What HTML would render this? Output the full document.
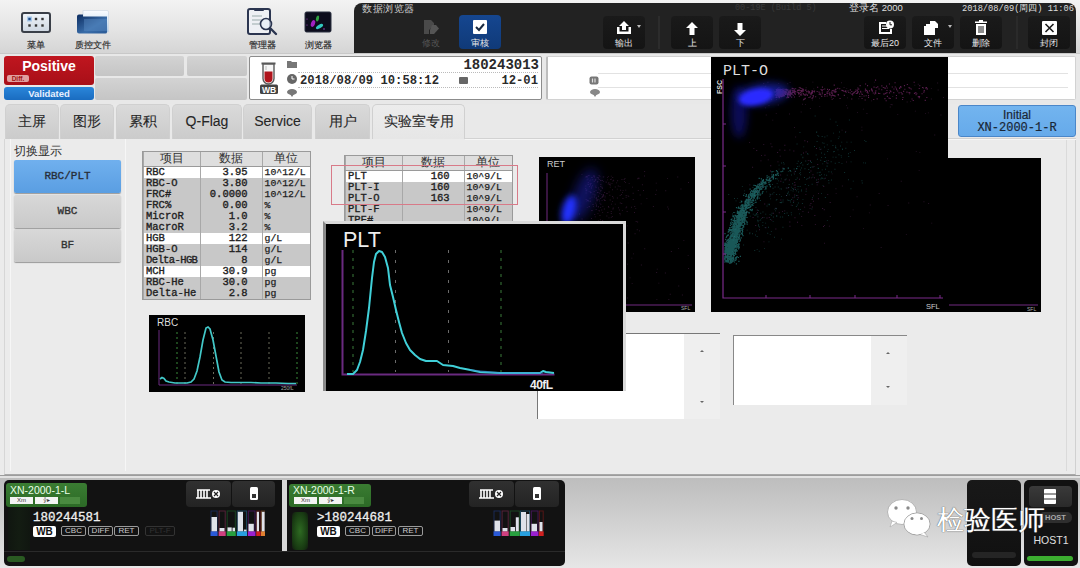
<!DOCTYPE html>
<html><head><meta charset="utf-8">
<style>
*{margin:0;padding:0;box-sizing:border-box}
html,body{width:1080px;height:568px;overflow:hidden;background:#e9e9e9;font-family:"Liberation Sans",sans-serif;position:relative}
.a{position:absolute}
svg{position:absolute;display:block}
.mono{font-family:"Liberation Mono",monospace}
#tb{left:0;top:0;width:1080px;height:54px;background:linear-gradient(#f3f3f3,#e4e4e4 55%,#d5d5d5);border-bottom:1px solid #c8c8c8}
.lbl{font-size:9px;font-weight:normal;-webkit-text-stroke:.2px #333;color:#333;text-align:center;white-space:nowrap}
#dark{left:354px;top:3px;width:722px;height:50px;background:#222;border-radius:8px 8px 0 0}
.dbtn{position:absolute;top:13px;height:33px;width:42px;border-radius:4px;background:linear-gradient(#1a1a1a,#141414)}
.dlbl{position:absolute;left:0;right:0;top:21px;text-align:center;font-size:9px;color:#e6e6e6;white-space:nowrap}
#r2{left:0;top:54px;width:1080px;height:50px;background:#e8e8e8}
.cell{background:linear-gradient(#d3d3d3,#c5c5c5);border-radius:2px}
.tab{position:absolute;top:104px;height:35px;background:linear-gradient(#dadada,#cbcbcb);border-radius:5px 5px 0 0;font-size:13.5px;font-weight:normal;color:#262626;text-align:center;line-height:33px;-webkit-text-stroke:.1px #262626;border:1px solid #d0d0d0;border-bottom:none}
.sw{position:absolute;left:14px;width:107px;height:33px;background:linear-gradient(#d8d8d8,#c9c9c9);border-radius:2px;font-family:"Liberation Mono",monospace;font-size:11px;font-weight:normal;-webkit-text-stroke:.35px #333;color:#333;text-align:center;line-height:33px;box-shadow:0 1px 1px #999}
table.t{position:absolute;border-collapse:collapse;font-family:"Liberation Mono",monospace;font-size:10.5px;color:#222;background:#c8c8c8;outline:1px solid #9a9a9a}
table.t td{height:11px;line-height:11px;padding:0 2px;white-space:nowrap;border-left:1px solid #a8a8a8;font-weight:normal;color:#222;-webkit-text-stroke:.35px #222}
table.t tr.h td{height:14px;-webkit-text-stroke:0;background:#dedede;text-align:center;font-family:"Liberation Sans",sans-serif;font-size:11.5px;font-weight:normal;color:#333;border-bottom:1px solid #9a9a9a}
table.t tr.w td{background:#fff}
table.t td.r{text-align:right;padding-right:14px}
table.t tr:not(.h) td:nth-child(3){font-size:9.8px;-webkit-text-stroke:.25px #222}
.card{position:absolute;top:480px;height:86px;background:#121212;border-radius:5px}
.glbl{position:absolute;background:linear-gradient(#3a7c32,#2c6a26);border-radius:3px}
.tg{position:absolute;height:10px;border:1px solid #9a9a9a;border-radius:2px;font-size:8px;color:#ccc;line-height:8px;text-align:center}
.wb{position:absolute;height:11px;background:#fff;border-radius:2px;font-size:10px;font-weight:bold;color:#111;line-height:11px;text-align:center}
.ibtn{position:absolute;top:481px;height:26px;background:linear-gradient(#303030,#232323);border-radius:4px}
</style></head><body>
<div class="a" id="tb"></div>

<!-- menu icon -->
<div class="a" style="left:21px;top:12px;width:30px;height:21px;border:2px solid #3a3f48;border-radius:3px;background:linear-gradient(#eef3f8,#cfd8e2)"></div>
<svg style="left:21px;top:12px" width="30" height="21" viewBox="0 0 30 21">
<rect x="6" y="4.5" width="5" height="5" fill="#a8c8e8"/><rect x="7.3" y="5.8" width="2.4" height="2.4" fill="#1a4a8a"/>
<rect x="13.8" y="5.8" width="2.4" height="2.4" fill="#333"/><rect x="20.3" y="5.8" width="2.4" height="2.4" fill="#333"/>
<rect x="7.3" y="12.3" width="2.4" height="2.4" fill="#333"/><rect x="13.8" y="12.3" width="2.4" height="2.4" fill="#333"/><rect x="20.3" y="12.3" width="2.4" height="2.4" fill="#333"/>
</svg>
<!-- folder icon -->
<svg style="left:76px;top:9px" width="34" height="26" viewBox="0 0 34 26">
<defs><linearGradient id="fp" x1="0" y1="0" x2="0" y2="1"><stop offset="0" stop-color="#fafcff"/><stop offset=".5" stop-color="#d8e8f6"/><stop offset="1" stop-color="#a8c8e8"/></linearGradient>
<linearGradient id="fb" x1="0" y1="0" x2="1" y2="1"><stop offset="0" stop-color="#0c2c60"/><stop offset=".6" stop-color="#3a6eaa"/><stop offset="1" stop-color="#2a5a96"/></linearGradient></defs>
<path d="M7 1.5h24a1.5 1.5 0 0 1 1.5 1.5v20H7z" fill="url(#fp)" stroke="#c8d4e0" stroke-width=".6"/>
<path d="M1 7.5a2 2 0 0 1 2-2h4v2h24v15.5a1.5 1.5 0 0 1-1.5 1.5H3a2 2 0 0 1-2-2z" fill="url(#fb)"/>
<path d="M8 10h23v12H8z" fill="#5a8cc4" opacity=".45"/>
</svg>
<!-- manager icon -->
<svg style="left:246px;top:7px" width="34" height="30" viewBox="0 0 34 30">
<rect x="2" y="2" width="22" height="25" rx="2" fill="#eef0f4" stroke="#2b3550" stroke-width="2"/>
<rect x="8" y="1" width="10" height="3" rx="1" fill="#2b3550"/>
<path d="M6 9h10M6 13h9M6 17h8" stroke="#9aa" stroke-width="1"/>
<circle cx="20" cy="17" r="5.5" fill="#e8f0f8" fill-opacity=".7" stroke="#2b3550" stroke-width="1.6"/>
<path d="M24 21l6 6" stroke="#2b3550" stroke-width="2.4" stroke-linecap="round"/>
</svg>
<!-- browser icon -->
<svg style="left:304px;top:11px" width="28" height="22" viewBox="0 0 28 22">
<defs><filter id="bi"><feGaussianBlur stdDeviation=".7"/></filter></defs>
<rect x="1" y="1" width="26" height="20" rx="1.5" fill="#0c0c1c" stroke="#2a3040" stroke-width="1"/>
<g filter="url(#bi)">
<ellipse cx="9" cy="12.5" rx="2" ry="3.5" fill="#a020c0" transform="rotate(20 9 12.5)"/>
<ellipse cx="13.5" cy="7.5" rx="1.5" ry="3" fill="#30a040" transform="rotate(15 13.5 7.5)"/>
<ellipse cx="15.5" cy="15.5" rx="4" ry="1.8" fill="#30c8c0" transform="rotate(-30 15.5 15.5)"/>
<circle cx="3" cy="8" r=".6" fill="#a040c0"/><circle cx="3" cy="14" r=".6" fill="#a040c0"/><circle cx="20" cy="18" r=".8" fill="#a040c0"/>
</g>
</svg>
<div class="a lbl" style="left:21px;top:39px;width:30px">菜单</div>
<div class="a lbl" style="left:70px;top:39px;width:45px">质控文件</div>
<div class="a lbl" style="left:245px;top:39px;width:34px">管理器</div>
<div class="a lbl" style="left:301px;top:39px;width:34px">浏览器</div>

<div class="a" id="dark">
  <div class="a" style="left:8px;top:-1px;font-size:10px;color:#c8c8c8;letter-spacing:.5px">数据浏览器</div>
  <!-- 修改 -->
  <svg style="left:69px;top:16px" width="18" height="16" viewBox="0 0 18 16"><path d="M1 1h7l3 3v2L6 11v4H1z" fill="#4a4a4a"/><path d="M9 6l4 0 3 3.5-5 5.5H7v-4z" fill="#555"/></svg>
  <div class="a" style="left:60px;top:34px;width:34px;text-align:center;font-size:9px;color:#555">修改</div>
  <div class="dbtn" style="left:105px;top:12px;height:34px;background:linear-gradient(#154690,#103a78)">
    <div class="a" style="left:14px;top:5px;width:14px;height:14px;background:#fff;border-radius:1px"></div>
    <svg style="left:14px;top:5px" width="14" height="14" viewBox="0 0 14 14"><path d="M3 7l3 3 5-6" stroke="#1a2a40" stroke-width="2" fill="none"/></svg>
    <div class="dlbl" style="top:22px">审核</div>
  </div>
  <!-- 输出 -->
  <div class="dbtn" style="left:249px">
    <svg style="left:13px;top:5px" width="16" height="14" viewBox="0 0 16 14"><path d="M1 6v7h14V6h-2.5v4.5h-9V6z" fill="#fff"/><path d="M8 0l5 5h-3v4H6V5H3z" fill="#fff"/></svg>
    <div class="a" style="left:34px;top:9px;width:0;height:0;border-left:2.5px solid transparent;border-right:2.5px solid transparent;border-top:3px solid #bbb"></div>
    <div class="dlbl">输出</div>
  </div>
  <div class="a" style="left:304px;top:13px;width:2px;height:33px;background:#2c2c2c"></div>
  <!-- 上 -->
  <div class="dbtn" style="left:317px">
    <svg style="left:14px;top:6px" width="14" height="14" viewBox="0 0 14 14"><path d="M7 0l6 6H9.5v7h-5V6H1z" fill="#fff"/></svg>
    <div class="dlbl">上</div>
  </div>
  <!-- 下 -->
  <div class="dbtn" style="left:365px">
    <svg style="left:14px;top:6px" width="14" height="14" viewBox="0 0 14 14"><path d="M7 14l6-6H9.5V1h-5v7H1z" fill="#fff"/></svg>
    <div class="dlbl">下</div>
  </div>
  <div class="a mono" style="left:381px;top:0px;font-size:8.5px;color:#3a3a3a;white-space:nowrap">00-19E (Build 5)</div>
  <div class="a" style="left:495px;top:-1px;font-size:9.5px;color:#ddd;white-space:nowrap">登录名 2000</div>
  <div class="a mono" style="left:608px;top:0px;font-size:8.7px;color:#ddd;white-space:nowrap">2018/08/09(周四) 11:06</div>
  <!-- 最后20 -->
  <div class="dbtn" style="left:510px">
    <svg style="left:14px;top:4px" width="16" height="16" viewBox="0 0 16 16"><path d="M1 2h7v2H3v8h9v-3h2v5H1z" fill="#fff"/><path d="M4 6h5M4 8.5h7" stroke="#fff" stroke-width="1.2"/><circle cx="12" cy="4.5" r="4" fill="#fff"/><path d="M12 2v2.8h2" stroke="#1a1a1a" stroke-width="1" fill="none"/></svg>
    <div class="dlbl">最后20</div>
  </div>
  <!-- 文件 -->
  <div class="dbtn" style="left:558px">
    <svg style="left:11px;top:4px" width="18" height="16" viewBox="0 0 18 16"><path d="M7 1h5l3 3v4H7z" fill="#fff"/><path d="M1 6h11v9H1z" fill="#fff"/><path d="M3 4h4v2H3z" fill="#fff"/></svg>
    <div class="a" style="left:36px;top:9px;width:0;height:0;border-left:2.5px solid transparent;border-right:2.5px solid transparent;border-top:3px solid #bbb"></div>
    <div class="dlbl">文件</div>
  </div>
  <!-- 删除 -->
  <div class="dbtn" style="left:606px">
    <svg style="left:15px;top:4px" width="12" height="15" viewBox="0 0 12 15"><path d="M4 0h4v1.5h4V3H0V1.5h4z" fill="#fff"/><path d="M1 4h10v11H1z" fill="#fff"/><path d="M4 6v7M6 6v7M8 6v7" stroke="#1a1a1a" stroke-width="1"/></svg>
    <div class="dlbl">删除</div>
  </div>
  <div class="a" style="left:662px;top:13px;width:2px;height:33px;background:#2a2a2a"></div>
  <!-- 封闭 -->
  <div class="dbtn" style="left:674px">
    <div class="a" style="left:14px;top:5px;width:15px;height:14px;background:#fff;border-radius:1px"></div>
    <svg style="left:14px;top:5px" width="15" height="14" viewBox="0 0 15 14"><path d="M3.5 3l8 8M11.5 3l-8 8" stroke="#1a1a1a" stroke-width="1.6"/></svg>
    <div class="dlbl">封闭</div>
  </div>
</div>

<div class="a" id="r2"></div>
<div class="a" style="left:4px;top:56px;width:90px;height:29px;background:linear-gradient(#c0161f,#a80f18);border-radius:3px"></div>
<div class="a" style="left:4px;top:58px;width:90px;text-align:center;font-size:14px;font-weight:bold;color:#fff">Positive</div>
<div class="a" style="left:7px;top:74.5px;width:22px;height:7.5px;background:#e0a0a0;border-radius:2px;font-size:6.5px;color:#a01010;text-align:center;line-height:8px;font-weight:bold">Diff.</div>
<div class="a" style="left:4px;top:87px;width:90px;height:13px;background:linear-gradient(#2a86da,#1a6cc0);border-radius:3px;font-size:9.5px;font-weight:bold;color:#e8f0ff;text-align:center;line-height:13px">Validated</div>
<div class="a cell" style="left:95px;top:56px;width:89px;height:20px"></div>
<div class="a cell" style="left:187px;top:56px;width:60px;height:20px"></div>
<div class="a cell" style="left:95px;top:78px;width:152px;height:22px"></div>

<!-- sample box -->
<div class="a" style="left:249px;top:56px;width:293px;height:44px;background:#fff;border:1px solid #8c8c8c;border-radius:2px"></div>
<svg style="left:258px;top:61px" width="24" height="36" viewBox="0 0 24 36">
<rect x="3.5" y="1.5" width="14" height="2" fill="#555"/>
<path d="M5 3h11v14.5a5.5 5.5 0 0 1-11 0z" fill="#f6f6f6" stroke="#5a5a5a" stroke-width="1.4"/>
<path d="M6.5 10.5h8v7a4 4 0 0 1-8 0z" fill="#b0141c"/>
<path d="M7.5 5h1v4h-1z" fill="#bbb"/>
<rect x="2" y="23.5" width="18" height="9.5" rx="1.5" fill="#444"/>
<text x="11" y="31.5" text-anchor="middle" font-family="Liberation Sans" font-weight="bold" font-size="8.5" fill="#fff">WB</text>
</svg>
<svg style="left:286px;top:58px" width="12" height="40" viewBox="0 0 12 40">
<path d="M1 3h4l1 1h5v6H1z" fill="#777"/>
<circle cx="6" cy="21" r="5" fill="#666"/><path d="M6 18v3h2.5" stroke="#fff" stroke-width="1" fill="none"/>
<ellipse cx="6" cy="34" rx="5" ry="3" fill="#777"/><path d="M4 36l2 3 2-3z" fill="#777"/>
</svg>
<div class="a" style="left:298px;top:72px;width:240px;border-top:1px dotted #bbb"></div>
<div class="a" style="left:298px;top:87px;width:240px;border-top:1px dotted #bbb"></div>
<div class="a mono" style="left:455px;top:57px;width:84px;text-align:right;font-size:14px;font-weight:bold;color:#2a2a2a">180243013</div>
<div class="a mono" style="left:300px;top:74px;font-size:12.2px;font-weight:bold;color:#2a2a2a">2018/08/09 10:58:12</div>
<div class="a" style="left:459px;top:77px;width:9px;height:7px;background:#666;border-radius:1px"></div>
<div class="a mono" style="left:480px;top:74px;width:58px;text-align:right;font-size:12.2px;font-weight:bold;color:#2a2a2a">12-01</div>

<!-- right info box -->
<div class="a" style="left:546px;top:56px;width:530px;height:44px;background:#fff;border:1px solid #d2d2d2;border-left:2px solid #bdbdbd;border-radius:2px"></div>
<div class="a" style="left:598px;top:73px;width:470px;border-top:1px solid #e2e2e2"></div>
<div class="a" style="left:598px;top:87px;width:470px;border-top:1px solid #e2e2e2"></div>
<svg style="left:589px;top:76px" width="10" height="9" viewBox="0 0 10 9"><rect x=".5" y=".5" width="9" height="8" rx="2" fill="#777"/><path d="M3.5 2.5v4M6 2.5v4" stroke="#ddd" stroke-width="1.2"/></svg>
<svg style="left:589px;top:88px" width="12" height="10" viewBox="0 0 12 10"><ellipse cx="6" cy="4" rx="5" ry="3" fill="#888"/><path d="M4 6l2 3 2-3z" fill="#888"/></svg>

<!-- tabs -->
<div class="tab" style="left:5px;width:54px">主屏</div>
<div class="tab" style="left:60px;width:54px">图形</div>
<div class="tab" style="left:116px;width:54px">累积</div>
<div class="tab" style="left:172px;width:70px;font-size:14px">Q-Flag</div>
<div class="tab" style="left:243px;width:69px;font-size:14px">Service</div>
<div class="tab" style="left:315px;width:55px">用户</div>
<div class="tab" style="left:372px;width:93px;background:linear-gradient(#ececec,#e6e6e6)">实验室专用</div>

<!-- content -->
<div class="a" style="left:0;top:139px;width:1080px;height:336px;background:#ebebeb"></div>
<div class="a" style="left:4px;top:139px;width:1072px;height:336px;border-left:1px solid #d6d6d6;border-right:1px solid #d0d0d0;border-bottom:1px solid #a8a8a8"></div>
<div class="a" style="left:10px;top:139px;width:116px;height:332px;border-left:1px solid #f6f6f6;border-right:1px solid #f6f6f6"></div>
<div class="a" style="left:465px;top:138px;width:611px;height:1px;background:#d2d2d2"></div>
<div class="a" style="left:1066px;top:139px;width:1px;height:332px;background:#dadada"></div>
<div class="a" style="left:465px;top:139px;width:611px;height:1px;background:#f6f6f6"></div>
<div class="a" style="left:14px;top:144px;font-size:11.5px;color:#333">切换显示</div>
<div class="sw" style="top:160px;background:linear-gradient(#70b0ee,#5a9ee2);color:#1a2a44">RBC/PLT</div>
<div class="sw" style="top:195px">WBC</div>
<div class="sw" style="top:229px">BF</div>

<!-- initial button -->
<div class="a" style="left:958px;top:105px;width:118px;height:32px;background:linear-gradient(#72b4ef,#66aaea);border:1px solid #4a86c8;border-radius:3px;text-align:center;color:#1a2636">
<div style="font-size:12px;line-height:14px;margin-top:2px;-webkit-text-stroke:.2px #1a2a3a">Initial</div>
<div class="mono" style="font-size:12px;line-height:13px;-webkit-text-stroke:.2px #1a2a3a">XN-2000-1-R</div>
</div>

<!-- RBC table -->
<table class="t" style="left:143px;top:152px;width:167px">
<colgroup><col style="width:57px"><col style="width:62px"><col style="width:48px"></colgroup>
<tr class="h"><td>项目</td><td>数据</td><td>单位</td></tr>
<tr class="w"><td>RBC</td><td class="r">3.95</td><td>10^12/L</td></tr>
<tr><td>RBC-O</td><td class="r">3.80</td><td>10^12/L</td></tr>
<tr><td>FRC#</td><td class="r">0.0000</td><td>10^12/L</td></tr>
<tr><td>FRC%</td><td class="r">0.00</td><td>%</td></tr>
<tr><td>MicroR</td><td class="r">1.0</td><td>%</td></tr>
<tr><td>MacroR</td><td class="r">3.2</td><td>%</td></tr>
<tr class="w"><td>HGB</td><td class="r">122</td><td>g/L</td></tr>
<tr><td>HGB-O</td><td class="r">114</td><td>g/L</td></tr>
<tr><td style="letter-spacing:-.6px">Delta-HGB</td><td class="r">8</td><td>g/L</td></tr>
<tr class="w"><td>MCH</td><td class="r">30.9</td><td>pg</td></tr>
<tr><td>RBC-He</td><td class="r">30.0</td><td>pg</td></tr>
<tr><td>Delta-He</td><td class="r">2.8</td><td>pg</td></tr>
</table>

<!-- PLT table -->
<div class="a" style="left:344px;top:155px;width:169px;height:68px;overflow:hidden">
<table class="t" style="left:1px;top:1px;width:167px">
<colgroup><col style="width:57px"><col style="width:62px"><col style="width:48px"></colgroup>
<tr class="h"><td>项目</td><td>数据</td><td>单位</td></tr>
<tr class="w"><td>PLT</td><td class="r">160</td><td>10^9/L</td></tr>
<tr><td>PLT-I</td><td class="r">160</td><td>10^9/L</td></tr>
<tr><td>PLT-O</td><td class="r">163</td><td>10^9/L</td></tr>
<tr><td>PLT-F</td><td class="r"></td><td>10^9/L</td></tr>
<tr><td>TPF#</td><td class="r"></td><td>10^9/L</td></tr>
</table>
</div>
<div class="a" style="left:331px;top:165px;width:187px;height:40px;border:1px solid #d87a88"></div>

<!-- RET scatter -->
<div class="a" style="left:539px;top:157px;width:156px;height:155px;background:#000"></div>
<svg style="left:539px;top:157px" width="156" height="155" viewBox="0 0 156 155">
<defs><filter id="b1" x="-1" y="-1" width="3" height="3"><feGaussianBlur stdDeviation="3"/></filter><filter id="b2" x="-1" y="-1" width="3" height="3"><feGaussianBlur stdDeviation="6"/></filter></defs>
<path d="M57.6 43.3h0.9v0.9h-0.9zM75.8 29.6h0.9v0.9h-0.9zM77.8 31.7h0.9v0.9h-0.9zM47.4 32.5h0.9v0.9h-0.9zM87.8 68.4h0.9v0.9h-0.9zM46.7 33.3h0.9v0.9h-0.9zM55.8 23.0h0.9v0.9h-0.9zM67.4 58.5h0.9v0.9h-0.9zM67.9 36.2h0.9v0.9h-0.9zM56.2 71.3h0.9v0.9h-0.9zM51.8 67.4h0.9v0.9h-0.9zM47.6 20.2h0.9v0.9h-0.9zM81.9 37.0h0.9v0.9h-0.9zM73.5 51.5h0.9v0.9h-0.9zM59.9 43.6h0.9v0.9h-0.9zM82.9 65.8h0.9v0.9h-0.9zM61.4 46.8h0.9v0.9h-0.9zM86.7 38.1h0.9v0.9h-0.9zM86.3 32.7h0.9v0.9h-0.9zM51.1 43.8h0.9v0.9h-0.9zM93.7 35.8h0.9v0.9h-0.9zM60.5 58.1h0.9v0.9h-0.9zM56.9 40.2h0.9v0.9h-0.9zM61.5 33.0h0.9v0.9h-0.9zM73.2 39.1h0.9v0.9h-0.9zM60.4 96.4h0.9v0.9h-0.9zM57.1 48.8h0.9v0.9h-0.9zM69.6 34.5h0.9v0.9h-0.9zM53.9 49.2h0.9v0.9h-0.9zM68.0 73.8h0.9v0.9h-0.9zM85.1 24.2h0.9v0.9h-0.9zM70.4 37.8h0.9v0.9h-0.9zM61.4 27.0h0.9v0.9h-0.9zM53.6 36.7h0.9v0.9h-0.9zM51.3 82.7h0.9v0.9h-0.9zM98.8 20.8h0.9v0.9h-0.9zM53.5 47.2h0.9v0.9h-0.9zM51.4 22.4h0.9v0.9h-0.9zM74.2 22.8h0.9v0.9h-0.9zM56.4 21.8h0.9v0.9h-0.9zM52.4 29.2h0.9v0.9h-0.9zM63.2 55.2h0.9v0.9h-0.9zM92.1 49.8h0.9v0.9h-0.9zM102.9 27.3h0.9v0.9h-0.9zM68.4 55.1h0.9v0.9h-0.9zM73.8 40.6h0.9v0.9h-0.9zM73.3 20.1h0.9v0.9h-0.9zM84.7 22.0h0.9v0.9h-0.9zM53.6 47.0h0.9v0.9h-0.9zM64.4 19.4h0.9v0.9h-0.9zM62.5 29.8h0.9v0.9h-0.9zM66.6 24.5h0.9v0.9h-0.9zM49.1 26.9h0.9v0.9h-0.9zM54.5 19.0h0.9v0.9h-0.9zM46.9 66.9h0.9v0.9h-0.9zM52.3 53.1h0.9v0.9h-0.9zM77.2 25.4h0.9v0.9h-0.9zM80.1 82.6h0.9v0.9h-0.9zM57.1 47.5h0.9v0.9h-0.9zM63.8 37.0h0.9v0.9h-0.9zM47.4 43.7h0.9v0.9h-0.9zM70.8 29.7h0.9v0.9h-0.9zM59.2 30.6h0.9v0.9h-0.9zM57.5 68.6h0.9v0.9h-0.9zM82.5 22.1h0.9v0.9h-0.9zM50.1 29.1h0.9v0.9h-0.9zM71.8 60.2h0.9v0.9h-0.9zM69.1 49.0h0.9v0.9h-0.9zM48.6 21.5h0.9v0.9h-0.9zM57.1 85.6h0.9v0.9h-0.9zM64.2 24.2h0.9v0.9h-0.9zM57.4 42.3h0.9v0.9h-0.9zM66.8 24.8h0.9v0.9h-0.9zM89.3 38.9h0.9v0.9h-0.9zM63.8 19.6h0.9v0.9h-0.9zM86.1 24.9h0.9v0.9h-0.9zM55.8 22.3h0.9v0.9h-0.9zM56.6 32.9h0.9v0.9h-0.9zM59.6 32.3h0.9v0.9h-0.9zM58.0 87.3h0.9v0.9h-0.9zM60.7 86.7h0.9v0.9h-0.9zM48.5 26.8h0.9v0.9h-0.9zM50.4 23.4h0.9v0.9h-0.9zM63.0 22.9h0.9v0.9h-0.9zM72.5 25.9h0.9v0.9h-0.9zM95.3 49.1h0.9v0.9h-0.9zM80.3 55.9h0.9v0.9h-0.9zM69.5 60.4h0.9v0.9h-0.9zM80.6 56.2h0.9v0.9h-0.9zM65.1 43.1h0.9v0.9h-0.9zM63.3 39.7h0.9v0.9h-0.9zM52.4 82.7h0.9v0.9h-0.9zM66.2 77.5h0.9v0.9h-0.9zM56.6 30.0h0.9v0.9h-0.9zM67.7 83.9h0.9v0.9h-0.9zM82.9 53.2h0.9v0.9h-0.9zM61.2 23.1h0.9v0.9h-0.9zM98.2 64.5h0.9v0.9h-0.9zM50.8 35.3h0.9v0.9h-0.9zM54.5 18.1h0.9v0.9h-0.9zM98.8 33.0h0.9v0.9h-0.9zM47.9 42.8h0.9v0.9h-0.9zM78.8 28.6h0.9v0.9h-0.9zM46.7 42.1h0.9v0.9h-0.9zM47.0 19.0h0.9v0.9h-0.9zM59.4 34.9h0.9v0.9h-0.9zM65.8 38.7h0.9v0.9h-0.9zM51.6 26.0h0.9v0.9h-0.9zM63.2 63.0h0.9v0.9h-0.9zM79.0 50.3h0.9v0.9h-0.9zM55.7 75.3h0.9v0.9h-0.9zM62.6 42.9h0.9v0.9h-0.9zM51.9 31.2h0.9v0.9h-0.9zM52.5 39.7h0.9v0.9h-0.9zM63.4 49.2h0.9v0.9h-0.9zM93.8 42.1h0.9v0.9h-0.9zM63.1 30.8h0.9v0.9h-0.9zM53.3 22.3h0.9v0.9h-0.9zM71.9 21.7h0.9v0.9h-0.9zM64.6 42.0h0.9v0.9h-0.9zM62.2 37.2h0.9v0.9h-0.9zM116.8 25.7h0.9v0.9h-0.9zM62.1 72.7h0.9v0.9h-0.9zM58.8 49.6h0.9v0.9h-0.9zM86.7 39.8h0.9v0.9h-0.9zM80.8 57.4h0.9v0.9h-0.9zM67.1 35.9h0.9v0.9h-0.9zM54.9 39.6h0.9v0.9h-0.9zM63.1 38.8h0.9v0.9h-0.9zM72.0 46.7h0.9v0.9h-0.9zM68.9 81.4h0.9v0.9h-0.9zM98.3 21.3h0.9v0.9h-0.9zM68.2 22.4h0.9v0.9h-0.9zM71.8 18.7h0.9v0.9h-0.9zM55.3 57.0h0.9v0.9h-0.9zM65.9 43.2h0.9v0.9h-0.9zM73.1 32.3h0.9v0.9h-0.9zM58.7 70.5h0.9v0.9h-0.9zM51.8 35.2h0.9v0.9h-0.9zM70.7 42.6h0.9v0.9h-0.9zM46.4 28.5h0.9v0.9h-0.9zM59.1 49.2h0.9v0.9h-0.9zM65.3 78.9h0.9v0.9h-0.9zM48.9 70.8h0.9v0.9h-0.9zM69.4 50.2h0.9v0.9h-0.9zM56.9 40.4h0.9v0.9h-0.9zM56.8 41.2h0.9v0.9h-0.9zM55.8 59.4h0.9v0.9h-0.9zM61.2 33.7h0.9v0.9h-0.9zM60.9 62.3h0.9v0.9h-0.9zM46.6 32.6h0.9v0.9h-0.9zM96.3 51.2h0.9v0.9h-0.9zM62.6 23.0h0.9v0.9h-0.9zM48.8 25.1h0.9v0.9h-0.9zM65.6 40.4h0.9v0.9h-0.9zM60.5 19.2h0.9v0.9h-0.9zM69.3 67.8h0.9v0.9h-0.9zM80.5 87.3h0.9v0.9h-0.9zM71.8 56.1h0.9v0.9h-0.9zM68.2 19.9h0.9v0.9h-0.9zM85.5 21.1h0.9v0.9h-0.9zM61.3 41.1h0.9v0.9h-0.9zM70.6 25.7h0.9v0.9h-0.9zM60.4 45.7h0.9v0.9h-0.9zM64.1 37.6h0.9v0.9h-0.9zM65.2 35.0h0.9v0.9h-0.9zM48.2 18.8h0.9v0.9h-0.9zM54.3 89.1h0.9v0.9h-0.9zM59.8 53.5h0.9v0.9h-0.9zM59.2 20.3h0.9v0.9h-0.9zM47.6 22.4h0.9v0.9h-0.9zM68.9 18.9h0.9v0.9h-0.9zM75.8 46.7h0.9v0.9h-0.9zM56.3 45.7h0.9v0.9h-0.9zM71.3 22.1h0.9v0.9h-0.9zM59.1 38.8h0.9v0.9h-0.9zM82.7 66.0h0.9v0.9h-0.9zM89.7 25.9h0.9v0.9h-0.9zM100.7 37.6h0.9v0.9h-0.9zM57.8 20.0h0.9v0.9h-0.9zM49.5 43.9h0.9v0.9h-0.9zM67.5 103.2h0.9v0.9h-0.9zM87.2 49.5h0.9v0.9h-0.9zM70.3 64.5h0.9v0.9h-0.9zM73.5 23.6h0.9v0.9h-0.9zM58.1 24.5h0.9v0.9h-0.9zM86.5 50.4h0.9v0.9h-0.9zM60.4 35.9h0.9v0.9h-0.9zM52.9 27.9h0.9v0.9h-0.9zM83.6 33.2h0.9v0.9h-0.9zM46.3 31.1h0.9v0.9h-0.9zM60.1 68.0h0.9v0.9h-0.9zM52.0 61.0h0.9v0.9h-0.9zM59.5 41.9h0.9v0.9h-0.9zM50.0 48.9h0.9v0.9h-0.9zM61.3 29.0h0.9v0.9h-0.9zM62.9 30.8h0.9v0.9h-0.9zM77.9 40.6h0.9v0.9h-0.9zM80.5 28.9h0.9v0.9h-0.9zM55.0 19.6h0.9v0.9h-0.9zM87.7 54.1h0.9v0.9h-0.9zM79.8 76.3h0.9v0.9h-0.9zM60.2 22.2h0.9v0.9h-0.9zM51.0 75.6h0.9v0.9h-0.9zM55.3 37.4h0.9v0.9h-0.9zM48.8 43.1h0.9v0.9h-0.9zM80.7 38.0h0.9v0.9h-0.9zM82.3 46.0h0.9v0.9h-0.9zM54.7 34.0h0.9v0.9h-0.9zM59.6 18.0h0.9v0.9h-0.9zM95.0 55.0h0.9v0.9h-0.9zM70.9 27.5h0.9v0.9h-0.9zM58.8 21.6h0.9v0.9h-0.9zM52.8 52.9h0.9v0.9h-0.9zM49.6 49.3h0.9v0.9h-0.9zM49.0 18.2h0.9v0.9h-0.9zM51.0 34.4h0.9v0.9h-0.9zM62.3 52.5h0.9v0.9h-0.9zM63.9 67.8h0.9v0.9h-0.9zM52.1 20.2h0.9v0.9h-0.9zM56.3 28.7h0.9v0.9h-0.9zM64.9 51.6h0.9v0.9h-0.9zM49.7 33.9h0.9v0.9h-0.9zM50.6 26.6h0.9v0.9h-0.9zM81.2 32.8h0.9v0.9h-0.9zM61.2 49.9h0.9v0.9h-0.9zM54.8 24.0h0.9v0.9h-0.9zM73.1 44.2h0.9v0.9h-0.9zM50.6 40.8h0.9v0.9h-0.9zM97.8 72.3h0.9v0.9h-0.9zM83.5 41.1h0.9v0.9h-0.9zM49.7 18.2h0.9v0.9h-0.9zM70.2 27.0h0.9v0.9h-0.9zM49.2 66.7h0.9v0.9h-0.9zM72.8 59.1h0.9v0.9h-0.9zM79.9 52.6h0.9v0.9h-0.9zM63.5 38.6h0.9v0.9h-0.9zM55.6 37.5h0.9v0.9h-0.9zM51.1 27.5h0.9v0.9h-0.9zM58.5 56.2h0.9v0.9h-0.9zM47.8 49.9h0.9v0.9h-0.9zM51.9 29.9h0.9v0.9h-0.9zM58.4 23.9h0.9v0.9h-0.9zM117.0 32.7h0.9v0.9h-0.9zM64.3 38.6h0.9v0.9h-0.9zM78.2 23.3h0.9v0.9h-0.9zM62.4 39.8h0.9v0.9h-0.9zM80.8 45.6h0.9v0.9h-0.9zM73.8 50.6h0.9v0.9h-0.9zM46.4 19.5h0.9v0.9h-0.9zM71.8 54.1h0.9v0.9h-0.9zM52.9 19.9h0.9v0.9h-0.9zM68.7 26.6h0.9v0.9h-0.9zM46.6 35.6h0.9v0.9h-0.9zM58.1 35.1h0.9v0.9h-0.9zM69.3 25.3h0.9v0.9h-0.9zM59.1 63.4h0.9v0.9h-0.9zM51.1 27.6h0.9v0.9h-0.9zM70.4 27.3h0.9v0.9h-0.9zM59.6 53.0h0.9v0.9h-0.9zM116.3 37.0h0.9v0.9h-0.9zM65.7 92.9h0.9v0.9h-0.9zM56.7 52.0h0.9v0.9h-0.9zM128.0 21.2h0.9v0.9h-0.9zM129.4 142.0h0.9v0.9h-0.9zM63.8 97.7h0.9v0.9h-0.9zM88.7 85.5h0.9v0.9h-0.9zM85.2 141.8h0.9v0.9h-0.9zM128.3 49.6h0.9v0.9h-0.9zM139.0 90.9h0.9v0.9h-0.9zM113.9 49.0h0.9v0.9h-0.9zM129.1 51.6h0.9v0.9h-0.9zM41.0 72.9h0.9v0.9h-0.9zM125.9 115.5h0.9v0.9h-0.9zM60.8 79.2h0.9v0.9h-0.9zM105.1 18.6h0.9v0.9h-0.9zM58.2 42.4h0.9v0.9h-0.9zM149.1 111.0h0.9v0.9h-0.9zM93.1 29.7h0.9v0.9h-0.9zM90.6 120.4h0.9v0.9h-0.9zM117.4 141.9h0.9v0.9h-0.9zM84.8 84.2h0.9v0.9h-0.9zM82.8 92.3h0.9v0.9h-0.9zM88.0 106.7h0.9v0.9h-0.9zM148.7 98.2h0.9v0.9h-0.9zM42.5 16.9h0.9v0.9h-0.9zM87.9 140.6h0.9v0.9h-0.9zM101.9 107.6h0.9v0.9h-0.9zM144.4 82.9h0.9v0.9h-0.9zM105.3 91.3h0.9v0.9h-0.9zM42.6 61.6h0.9v0.9h-0.9zM92.7 125.9h0.9v0.9h-0.9zM40.0 56.5h0.9v0.9h-0.9zM100.0 73.4h0.9v0.9h-0.9zM96.7 64.0h0.9v0.9h-0.9zM60.6 91.6h0.9v0.9h-0.9zM99.6 20.8h0.9v0.9h-0.9zM92.4 100.7h0.9v0.9h-0.9zM139.3 128.6h0.9v0.9h-0.9zM117.8 111.7h0.9v0.9h-0.9zM94.0 96.4h0.9v0.9h-0.9zM117.2 115.1h0.9v0.9h-0.9zM138.3 19.6h0.9v0.9h-0.9zM141.5 31.5h0.9v0.9h-0.9zM104.1 33.1h0.9v0.9h-0.9zM88.6 38.4h0.9v0.9h-0.9zM149.0 25.0h0.9v0.9h-0.9zM130.8 136.8h0.9v0.9h-0.9zM95.6 76.3h0.9v0.9h-0.9zM58.4 114.2h0.9v0.9h-0.9zM119.4 125.7h0.9v0.9h-0.9zM61.6 130.6h0.9v0.9h-0.9zM69.3 81.4h0.9v0.9h-0.9zM131.9 94.1h0.9v0.9h-0.9zM142.9 137.6h0.9v0.9h-0.9zM126.3 33.3h0.9v0.9h-0.9zM83.1 35.2h0.9v0.9h-0.9zM105.2 14.0h0.9v0.9h-0.9zM107.4 41.2h0.9v0.9h-0.9zM101.7 46.4h0.9v0.9h-0.9z" fill="#5a2a5a" fill-opacity="0.5"/>
<ellipse cx="45" cy="38" rx="10" ry="28" fill="#1a20b0" opacity=".55" filter="url(#b2)" transform="rotate(20 45 38)"/>
<ellipse cx="30" cy="53" rx="7" ry="15" fill="#2030ff" filter="url(#b1)" transform="rotate(15 30 53)"/>
<text x="8" y="10" font-family="Liberation Sans" font-size="9" fill="#ccc">RET</text>
<path d="M8 16v132h145" stroke="#702a80" stroke-width="1" fill="none"/>
<text x="142" y="153" font-family="Liberation Sans" font-size="5" fill="#aaa">SFL</text>
</svg>

<!-- right black panel -->
<div class="a" style="left:940px;top:158px;width:101px;height:154px;background:#000"></div>
<svg style="left:940px;top:158px" width="101" height="154" viewBox="0 0 101 154">
<path d="M9 147h89" stroke="#702a80" stroke-width="1"/>
<text x="87" y="153" font-family="Liberation Sans" font-size="5" fill="#aaa">SFL</text>
</svg>

<!-- PLT-O scatter -->
<div class="a" style="left:711px;top:57px;width:237px;height:255px;background:#000"></div>
<svg style="left:711px;top:57px" width="237" height="255" viewBox="0 0 237 255">
<defs><filter id="b3" x="-1" y="-1" width="3" height="3"><feGaussianBlur stdDeviation="4"/></filter><filter id="b4" x="-1" y="-1" width="3" height="3"><feGaussianBlur stdDeviation="2"/></filter><filter id="b5"><feGaussianBlur stdDeviation=".5"/></filter></defs>
<path d="M73.4 87.8h0.9v0.9h-0.9zM60.5 89.3h0.9v0.9h-0.9zM46.0 155.0h0.9v0.9h-0.9zM99.5 113.6h0.9v0.9h-0.9zM101.5 117.3h0.9v0.9h-0.9zM35.3 155.1h0.9v0.9h-0.9zM86.1 164.8h0.9v0.9h-0.9zM59.4 86.4h0.9v0.9h-0.9zM106.8 121.8h0.9v0.9h-0.9zM87.2 151.8h0.9v0.9h-0.9zM115.3 105.4h0.9v0.9h-0.9zM49.4 129.7h0.9v0.9h-0.9zM61.9 155.8h0.9v0.9h-0.9zM105.7 127.4h0.9v0.9h-0.9zM103.0 120.3h0.9v0.9h-0.9zM106.3 107.1h0.9v0.9h-0.9zM117.9 168.7h0.9v0.9h-0.9zM67.8 155.3h0.9v0.9h-0.9zM44.3 168.0h0.9v0.9h-0.9zM98.6 150.9h0.9v0.9h-0.9zM71.5 110.6h0.9v0.9h-0.9zM116.8 102.9h0.9v0.9h-0.9zM102.0 138.4h0.9v0.9h-0.9zM106.9 124.6h0.9v0.9h-0.9zM47.4 126.8h0.9v0.9h-0.9zM54.4 170.3h0.9v0.9h-0.9zM101.7 109.6h0.9v0.9h-0.9zM68.8 98.7h0.9v0.9h-0.9zM38.4 127.4h0.9v0.9h-0.9zM82.4 93.6h0.9v0.9h-0.9zM59.1 113.6h0.9v0.9h-0.9zM94.6 94.5h0.9v0.9h-0.9zM103.4 158.1h0.9v0.9h-0.9zM74.1 122.4h0.9v0.9h-0.9zM56.8 102.4h0.9v0.9h-0.9zM57.8 160.1h0.9v0.9h-0.9zM96.9 154.8h0.9v0.9h-0.9zM100.7 142.1h0.9v0.9h-0.9zM66.2 95.1h0.9v0.9h-0.9zM93.2 149.7h0.9v0.9h-0.9zM45.4 134.0h0.9v0.9h-0.9zM93.4 83.3h0.9v0.9h-0.9zM100.2 120.4h0.9v0.9h-0.9zM42.4 91.2h0.9v0.9h-0.9zM118.7 145.0h0.9v0.9h-0.9zM113.0 167.9h0.9v0.9h-0.9zM108.7 92.0h0.9v0.9h-0.9zM78.4 164.5h0.9v0.9h-0.9zM98.6 147.8h0.9v0.9h-0.9zM52.3 87.2h0.9v0.9h-0.9zM96.0 84.3h0.9v0.9h-0.9zM82.3 132.2h0.9v0.9h-0.9zM81.4 140.3h0.9v0.9h-0.9zM112.3 129.0h0.9v0.9h-0.9zM111.2 151.0h0.9v0.9h-0.9zM83.3 125.0h0.9v0.9h-0.9zM45.8 152.5h0.9v0.9h-0.9zM38.2 85.2h0.9v0.9h-0.9zM105.0 91.0h0.9v0.9h-0.9zM55.5 160.5h0.9v0.9h-0.9zM97.6 120.7h0.9v0.9h-0.9zM83.8 127.6h0.9v0.9h-0.9zM106.9 141.3h0.9v0.9h-0.9zM37.3 141.1h0.9v0.9h-0.9zM92.0 95.6h0.9v0.9h-0.9zM66.5 104.4h0.9v0.9h-0.9zM59.3 108.3h0.9v0.9h-0.9zM53.3 146.5h0.9v0.9h-0.9zM98.7 103.1h0.9v0.9h-0.9zM50.1 97.9h0.9v0.9h-0.9zM51.2 160.0h0.9v0.9h-0.9zM116.3 137.2h0.9v0.9h-0.9zM91.5 154.2h0.9v0.9h-0.9zM90.4 167.9h0.9v0.9h-0.9zM45.3 93.0h0.9v0.9h-0.9zM71.0 154.2h0.9v0.9h-0.9zM83.6 130.3h0.9v0.9h-0.9zM59.3 120.6h0.9v0.9h-0.9zM94.8 131.6h0.9v0.9h-0.9zM113.8 120.8h0.9v0.9h-0.9zM64.4 171.5h0.9v0.9h-0.9zM103.9 167.2h0.9v0.9h-0.9zM73.3 153.4h0.9v0.9h-0.9zM73.4 92.8h0.9v0.9h-0.9zM68.4 92.5h0.9v0.9h-0.9zM83.5 160.3h0.9v0.9h-0.9zM88.1 121.8h0.9v0.9h-0.9zM83.3 137.6h0.9v0.9h-0.9zM64.4 151.1h0.9v0.9h-0.9zM41.2 109.8h0.9v0.9h-0.9zM78.5 168.8h0.9v0.9h-0.9zM76.9 130.3h0.9v0.9h-0.9zM96.8 102.9h0.9v0.9h-0.9zM69.2 117.6h0.9v0.9h-0.9zM41.6 160.0h0.9v0.9h-0.9zM77.9 122.6h0.9v0.9h-0.9zM69.4 142.6h0.9v0.9h-0.9zM79.8 147.7h0.9v0.9h-0.9zM75.6 130.7h0.9v0.9h-0.9zM69.4 123.8h0.9v0.9h-0.9zM112.0 169.0h0.9v0.9h-0.9zM107.1 135.9h0.9v0.9h-0.9zM99.5 146.1h0.9v0.9h-0.9zM100.9 149.5h0.9v0.9h-0.9zM48.0 172.3h0.9v0.9h-0.9zM75.0 138.1h0.9v0.9h-0.9zM86.3 137.9h0.9v0.9h-0.9zM82.7 127.7h0.9v0.9h-0.9zM60.3 162.7h0.9v0.9h-0.9zM53.5 97.8h0.9v0.9h-0.9zM101.9 143.8h0.9v0.9h-0.9zM83.6 113.8h0.9v0.9h-0.9zM112.8 152.3h0.9v0.9h-0.9zM94.4 136.9h0.9v0.9h-0.9zM49.5 103.4h0.9v0.9h-0.9zM82.3 143.6h0.9v0.9h-0.9zM51.8 129.9h0.9v0.9h-0.9zM86.7 140.3h0.9v0.9h-0.9zM48.9 124.4h0.9v0.9h-0.9zM105.3 125.1h0.9v0.9h-0.9z" fill="#8a3a8a" fill-opacity="0.45"/><g filter="url(#b5)"><path d="M24.1 178.1h1.2v1.2h-1.2zM23.1 190.0h1.2v1.2h-1.2zM28.7 161.9h1.2v1.2h-1.2zM24.4 179.8h1.2v1.2h-1.2zM17.6 189.7h1.2v1.2h-1.2zM27.3 170.1h1.2v1.2h-1.2zM18.7 202.3h1.2v1.2h-1.2zM21.5 187.2h1.2v1.2h-1.2zM36.1 150.7h1.2v1.2h-1.2zM23.2 188.9h1.2v1.2h-1.2zM18.2 192.8h1.2v1.2h-1.2zM14.0 193.0h1.2v1.2h-1.2zM38.5 149.9h1.2v1.2h-1.2zM43.3 131.0h1.2v1.2h-1.2zM40.0 139.4h1.2v1.2h-1.2zM40.2 146.9h1.2v1.2h-1.2zM25.4 175.3h1.2v1.2h-1.2zM27.9 159.0h1.2v1.2h-1.2zM19.5 189.2h1.2v1.2h-1.2zM64.6 117.8h1.2v1.2h-1.2zM28.4 158.9h1.2v1.2h-1.2zM38.5 131.5h1.2v1.2h-1.2zM15.4 191.0h1.2v1.2h-1.2zM13.0 200.2h1.2v1.2h-1.2zM37.8 150.0h1.2v1.2h-1.2zM28.8 161.6h1.2v1.2h-1.2zM27.4 176.2h1.2v1.2h-1.2zM21.6 171.2h1.2v1.2h-1.2zM40.5 143.3h1.2v1.2h-1.2zM13.6 185.6h1.2v1.2h-1.2zM35.1 153.8h1.2v1.2h-1.2zM37.1 142.6h1.2v1.2h-1.2zM28.7 153.9h1.2v1.2h-1.2zM30.4 150.2h1.2v1.2h-1.2zM14.6 204.2h1.2v1.2h-1.2zM32.1 159.6h1.2v1.2h-1.2zM27.2 173.2h1.2v1.2h-1.2zM14.5 190.8h1.2v1.2h-1.2zM24.0 200.6h1.2v1.2h-1.2zM21.1 165.0h1.2v1.2h-1.2zM19.3 186.3h1.2v1.2h-1.2zM19.2 194.8h1.2v1.2h-1.2zM31.2 171.8h1.2v1.2h-1.2zM20.2 183.8h1.2v1.2h-1.2zM23.3 171.3h1.2v1.2h-1.2zM30.9 158.6h1.2v1.2h-1.2zM16.0 194.9h1.2v1.2h-1.2zM18.9 189.1h1.2v1.2h-1.2zM22.8 184.9h1.2v1.2h-1.2zM22.9 182.1h1.2v1.2h-1.2zM21.5 174.6h1.2v1.2h-1.2zM22.5 184.6h1.2v1.2h-1.2zM16.4 186.3h1.2v1.2h-1.2zM24.2 174.0h1.2v1.2h-1.2zM25.2 173.3h1.2v1.2h-1.2zM64.9 113.0h1.2v1.2h-1.2zM24.0 177.6h1.2v1.2h-1.2zM17.4 196.9h1.2v1.2h-1.2zM29.7 162.2h1.2v1.2h-1.2zM18.9 194.0h1.2v1.2h-1.2zM21.7 170.2h1.2v1.2h-1.2zM44.7 129.5h1.2v1.2h-1.2zM22.5 166.1h1.2v1.2h-1.2zM27.9 161.2h1.2v1.2h-1.2zM27.7 173.0h1.2v1.2h-1.2zM51.5 128.7h1.2v1.2h-1.2zM29.5 166.5h1.2v1.2h-1.2zM34.6 147.1h1.2v1.2h-1.2zM18.5 192.5h1.2v1.2h-1.2zM19.2 198.5h1.2v1.2h-1.2zM29.2 157.7h1.2v1.2h-1.2zM22.9 168.3h1.2v1.2h-1.2zM29.7 158.9h1.2v1.2h-1.2zM40.5 136.0h1.2v1.2h-1.2zM16.8 190.6h1.2v1.2h-1.2zM27.1 163.0h1.2v1.2h-1.2zM57.7 123.4h1.2v1.2h-1.2zM14.0 188.2h1.2v1.2h-1.2zM14.9 190.5h1.2v1.2h-1.2zM24.1 178.0h1.2v1.2h-1.2zM23.3 172.7h1.2v1.2h-1.2zM16.9 177.6h1.2v1.2h-1.2zM16.5 197.3h1.2v1.2h-1.2zM29.4 166.8h1.2v1.2h-1.2zM24.7 159.1h1.2v1.2h-1.2zM39.7 137.8h1.2v1.2h-1.2zM16.3 191.3h1.2v1.2h-1.2zM24.2 166.0h1.2v1.2h-1.2zM23.8 184.7h1.2v1.2h-1.2zM29.4 154.2h1.2v1.2h-1.2zM18.3 185.1h1.2v1.2h-1.2zM26.3 168.7h1.2v1.2h-1.2zM17.8 193.5h1.2v1.2h-1.2zM33.4 145.5h1.2v1.2h-1.2zM37.6 146.8h1.2v1.2h-1.2zM23.9 192.3h1.2v1.2h-1.2zM66.5 115.6h1.2v1.2h-1.2zM45.3 131.5h1.2v1.2h-1.2zM36.3 148.3h1.2v1.2h-1.2zM17.9 205.5h1.2v1.2h-1.2zM21.0 187.8h1.2v1.2h-1.2zM33.4 147.5h1.2v1.2h-1.2zM27.5 170.9h1.2v1.2h-1.2zM22.3 190.7h1.2v1.2h-1.2zM62.0 119.2h1.2v1.2h-1.2zM29.1 156.5h1.2v1.2h-1.2zM20.7 194.6h1.2v1.2h-1.2zM46.6 128.7h1.2v1.2h-1.2zM17.9 184.5h1.2v1.2h-1.2zM21.7 187.6h1.2v1.2h-1.2zM22.7 159.5h1.2v1.2h-1.2zM17.6 191.5h1.2v1.2h-1.2zM42.1 134.3h1.2v1.2h-1.2zM28.1 157.2h1.2v1.2h-1.2zM14.9 186.7h1.2v1.2h-1.2zM38.0 139.9h1.2v1.2h-1.2zM23.3 179.2h1.2v1.2h-1.2zM13.1 202.4h1.2v1.2h-1.2zM27.7 168.5h1.2v1.2h-1.2zM25.8 176.5h1.2v1.2h-1.2zM27.1 154.9h1.2v1.2h-1.2zM15.2 187.5h1.2v1.2h-1.2zM18.8 167.7h1.2v1.2h-1.2zM29.4 166.4h1.2v1.2h-1.2zM37.1 138.0h1.2v1.2h-1.2zM27.8 161.8h1.2v1.2h-1.2zM43.8 127.9h1.2v1.2h-1.2zM41.9 140.4h1.2v1.2h-1.2zM25.2 187.5h1.2v1.2h-1.2zM51.7 122.8h1.2v1.2h-1.2zM28.1 166.5h1.2v1.2h-1.2zM16.9 190.3h1.2v1.2h-1.2zM24.9 168.8h1.2v1.2h-1.2zM29.7 151.0h1.2v1.2h-1.2zM41.9 132.6h1.2v1.2h-1.2zM14.8 183.6h1.2v1.2h-1.2zM19.5 179.2h1.2v1.2h-1.2zM13.8 200.4h1.2v1.2h-1.2zM32.5 163.8h1.2v1.2h-1.2zM23.4 182.5h1.2v1.2h-1.2zM27.6 160.8h1.2v1.2h-1.2zM20.2 181.8h1.2v1.2h-1.2zM34.7 147.0h1.2v1.2h-1.2zM32.1 169.3h1.2v1.2h-1.2zM27.0 174.7h1.2v1.2h-1.2zM26.9 168.0h1.2v1.2h-1.2zM66.7 117.9h1.2v1.2h-1.2zM26.5 173.7h1.2v1.2h-1.2zM22.6 179.1h1.2v1.2h-1.2zM44.1 131.0h1.2v1.2h-1.2zM35.6 144.6h1.2v1.2h-1.2zM20.5 194.8h1.2v1.2h-1.2zM23.1 167.8h1.2v1.2h-1.2zM18.0 187.3h1.2v1.2h-1.2zM22.7 189.9h1.2v1.2h-1.2zM17.6 191.0h1.2v1.2h-1.2zM39.5 135.9h1.2v1.2h-1.2zM17.7 186.0h1.2v1.2h-1.2zM32.1 155.7h1.2v1.2h-1.2zM27.2 167.6h1.2v1.2h-1.2zM26.2 172.2h1.2v1.2h-1.2zM18.8 203.3h1.2v1.2h-1.2zM16.8 193.9h1.2v1.2h-1.2zM31.9 159.5h1.2v1.2h-1.2zM21.2 186.5h1.2v1.2h-1.2zM22.5 187.8h1.2v1.2h-1.2zM36.6 150.4h1.2v1.2h-1.2zM32.6 158.0h1.2v1.2h-1.2zM23.0 177.7h1.2v1.2h-1.2zM16.4 186.4h1.2v1.2h-1.2zM20.0 192.7h1.2v1.2h-1.2zM21.8 196.2h1.2v1.2h-1.2zM22.9 176.3h1.2v1.2h-1.2zM20.8 177.1h1.2v1.2h-1.2zM43.3 133.9h1.2v1.2h-1.2zM21.0 189.8h1.2v1.2h-1.2zM20.0 189.6h1.2v1.2h-1.2zM34.7 141.8h1.2v1.2h-1.2zM25.3 179.2h1.2v1.2h-1.2zM22.7 161.4h1.2v1.2h-1.2zM35.6 166.5h1.2v1.2h-1.2zM16.7 181.8h1.2v1.2h-1.2zM17.4 191.0h1.2v1.2h-1.2zM45.1 137.2h1.2v1.2h-1.2zM24.8 165.4h1.2v1.2h-1.2zM18.4 188.1h1.2v1.2h-1.2zM18.6 198.9h1.2v1.2h-1.2zM23.4 202.7h1.2v1.2h-1.2zM47.6 129.9h1.2v1.2h-1.2zM20.8 175.9h1.2v1.2h-1.2zM15.2 183.4h1.2v1.2h-1.2zM32.4 159.7h1.2v1.2h-1.2zM31.1 151.1h1.2v1.2h-1.2zM18.4 200.8h1.2v1.2h-1.2zM46.3 129.1h1.2v1.2h-1.2zM24.0 183.4h1.2v1.2h-1.2zM19.6 161.9h1.2v1.2h-1.2zM41.3 142.8h1.2v1.2h-1.2zM15.5 194.0h1.2v1.2h-1.2zM33.7 145.8h1.2v1.2h-1.2zM29.2 150.9h1.2v1.2h-1.2zM23.4 167.0h1.2v1.2h-1.2zM19.2 185.4h1.2v1.2h-1.2zM25.7 167.7h1.2v1.2h-1.2zM32.9 165.5h1.2v1.2h-1.2zM35.1 142.7h1.2v1.2h-1.2zM22.6 171.2h1.2v1.2h-1.2zM14.5 195.4h1.2v1.2h-1.2zM17.1 189.7h1.2v1.2h-1.2zM26.2 176.7h1.2v1.2h-1.2zM22.4 172.6h1.2v1.2h-1.2zM31.0 173.7h1.2v1.2h-1.2zM21.1 177.5h1.2v1.2h-1.2zM27.7 178.7h1.2v1.2h-1.2zM43.3 138.3h1.2v1.2h-1.2zM22.5 183.9h1.2v1.2h-1.2zM21.4 173.7h1.2v1.2h-1.2zM30.5 147.1h1.2v1.2h-1.2zM26.6 167.5h1.2v1.2h-1.2zM20.5 196.0h1.2v1.2h-1.2zM54.1 131.2h1.2v1.2h-1.2zM16.2 202.9h1.2v1.2h-1.2zM26.5 168.6h1.2v1.2h-1.2zM27.4 166.2h1.2v1.2h-1.2zM17.3 192.0h1.2v1.2h-1.2zM47.6 130.6h1.2v1.2h-1.2zM22.0 191.9h1.2v1.2h-1.2zM18.4 194.1h1.2v1.2h-1.2zM25.3 168.6h1.2v1.2h-1.2zM21.5 171.8h1.2v1.2h-1.2zM16.2 200.5h1.2v1.2h-1.2zM21.7 186.0h1.2v1.2h-1.2zM27.4 158.0h1.2v1.2h-1.2zM21.7 188.1h1.2v1.2h-1.2zM19.5 195.4h1.2v1.2h-1.2zM64.2 121.1h1.2v1.2h-1.2zM29.6 161.3h1.2v1.2h-1.2zM25.6 158.5h1.2v1.2h-1.2zM17.6 198.9h1.2v1.2h-1.2zM20.0 188.7h1.2v1.2h-1.2zM20.8 196.2h1.2v1.2h-1.2zM25.8 155.6h1.2v1.2h-1.2zM23.5 188.6h1.2v1.2h-1.2zM30.1 160.8h1.2v1.2h-1.2zM36.8 139.8h1.2v1.2h-1.2zM28.3 165.9h1.2v1.2h-1.2zM33.7 161.5h1.2v1.2h-1.2zM15.5 193.0h1.2v1.2h-1.2zM46.6 137.2h1.2v1.2h-1.2zM40.3 136.6h1.2v1.2h-1.2zM24.6 169.9h1.2v1.2h-1.2zM42.6 139.5h1.2v1.2h-1.2zM30.8 176.8h1.2v1.2h-1.2zM22.2 188.8h1.2v1.2h-1.2zM37.2 154.8h1.2v1.2h-1.2zM27.9 178.0h1.2v1.2h-1.2zM42.2 133.6h1.2v1.2h-1.2zM20.5 183.1h1.2v1.2h-1.2zM30.8 149.4h1.2v1.2h-1.2zM78.5 113.1h1.2v1.2h-1.2zM28.3 165.2h1.2v1.2h-1.2zM40.7 138.6h1.2v1.2h-1.2zM25.3 163.8h1.2v1.2h-1.2zM21.6 190.7h1.2v1.2h-1.2zM21.9 179.6h1.2v1.2h-1.2zM24.6 184.9h1.2v1.2h-1.2zM18.2 188.8h1.2v1.2h-1.2zM15.5 194.3h1.2v1.2h-1.2zM22.6 181.6h1.2v1.2h-1.2zM53.7 124.2h1.2v1.2h-1.2zM19.9 189.1h1.2v1.2h-1.2zM20.0 201.7h1.2v1.2h-1.2zM26.1 163.3h1.2v1.2h-1.2zM21.8 166.4h1.2v1.2h-1.2zM18.6 186.5h1.2v1.2h-1.2zM19.8 195.2h1.2v1.2h-1.2zM14.3 185.9h1.2v1.2h-1.2zM16.3 198.1h1.2v1.2h-1.2zM29.0 168.3h1.2v1.2h-1.2zM14.0 193.1h1.2v1.2h-1.2zM27.4 162.1h1.2v1.2h-1.2zM14.2 194.3h1.2v1.2h-1.2zM26.2 159.3h1.2v1.2h-1.2zM21.4 172.0h1.2v1.2h-1.2zM49.6 124.7h1.2v1.2h-1.2zM27.0 164.0h1.2v1.2h-1.2zM25.1 199.4h1.2v1.2h-1.2zM23.1 172.3h1.2v1.2h-1.2zM15.2 196.4h1.2v1.2h-1.2zM33.6 146.7h1.2v1.2h-1.2zM32.5 155.9h1.2v1.2h-1.2zM25.1 170.7h1.2v1.2h-1.2zM27.0 188.3h1.2v1.2h-1.2zM22.4 183.1h1.2v1.2h-1.2zM25.7 182.7h1.2v1.2h-1.2zM14.0 186.4h1.2v1.2h-1.2zM18.5 170.1h1.2v1.2h-1.2zM18.0 190.3h1.2v1.2h-1.2zM30.7 148.8h1.2v1.2h-1.2zM18.7 201.6h1.2v1.2h-1.2zM22.2 188.1h1.2v1.2h-1.2zM36.2 142.2h1.2v1.2h-1.2zM26.6 166.0h1.2v1.2h-1.2zM38.5 148.0h1.2v1.2h-1.2zM29.5 150.2h1.2v1.2h-1.2zM23.2 179.6h1.2v1.2h-1.2zM24.3 158.9h1.2v1.2h-1.2zM29.3 163.2h1.2v1.2h-1.2zM31.3 159.2h1.2v1.2h-1.2zM48.5 137.6h1.2v1.2h-1.2zM40.6 133.5h1.2v1.2h-1.2zM39.0 138.2h1.2v1.2h-1.2zM14.2 199.8h1.2v1.2h-1.2zM31.8 168.0h1.2v1.2h-1.2zM29.1 154.8h1.2v1.2h-1.2zM13.7 187.5h1.2v1.2h-1.2zM15.8 200.5h1.2v1.2h-1.2zM48.1 132.3h1.2v1.2h-1.2zM52.5 125.1h1.2v1.2h-1.2zM21.1 172.2h1.2v1.2h-1.2zM20.1 178.4h1.2v1.2h-1.2zM20.3 196.9h1.2v1.2h-1.2zM25.9 184.9h1.2v1.2h-1.2zM29.0 162.9h1.2v1.2h-1.2zM15.9 182.5h1.2v1.2h-1.2zM24.5 179.0h1.2v1.2h-1.2zM20.9 172.3h1.2v1.2h-1.2zM25.0 175.8h1.2v1.2h-1.2zM42.4 127.8h1.2v1.2h-1.2zM21.6 169.2h1.2v1.2h-1.2zM19.2 199.4h1.2v1.2h-1.2zM34.0 143.3h1.2v1.2h-1.2zM13.3 190.5h1.2v1.2h-1.2zM48.6 126.8h1.2v1.2h-1.2zM25.3 176.4h1.2v1.2h-1.2zM26.9 167.5h1.2v1.2h-1.2zM20.2 178.4h1.2v1.2h-1.2zM26.5 166.3h1.2v1.2h-1.2zM26.3 175.0h1.2v1.2h-1.2zM17.0 173.6h1.2v1.2h-1.2zM18.6 175.5h1.2v1.2h-1.2zM14.1 181.8h1.2v1.2h-1.2zM61.8 120.0h1.2v1.2h-1.2zM19.9 191.5h1.2v1.2h-1.2zM37.9 149.9h1.2v1.2h-1.2zM21.4 180.8h1.2v1.2h-1.2zM23.0 177.4h1.2v1.2h-1.2zM14.9 192.2h1.2v1.2h-1.2zM60.5 114.0h1.2v1.2h-1.2zM26.7 188.2h1.2v1.2h-1.2zM16.9 195.6h1.2v1.2h-1.2zM33.3 152.4h1.2v1.2h-1.2zM21.4 194.1h1.2v1.2h-1.2zM29.5 156.2h1.2v1.2h-1.2zM17.7 189.4h1.2v1.2h-1.2zM18.2 188.7h1.2v1.2h-1.2zM19.4 181.4h1.2v1.2h-1.2zM29.3 161.6h1.2v1.2h-1.2zM39.3 141.0h1.2v1.2h-1.2zM22.1 175.6h1.2v1.2h-1.2zM24.6 175.8h1.2v1.2h-1.2zM65.5 116.6h1.2v1.2h-1.2zM35.7 154.3h1.2v1.2h-1.2zM18.3 180.6h1.2v1.2h-1.2zM20.0 187.4h1.2v1.2h-1.2zM23.4 160.6h1.2v1.2h-1.2zM21.9 202.2h1.2v1.2h-1.2zM20.6 194.0h1.2v1.2h-1.2zM19.1 184.5h1.2v1.2h-1.2zM32.4 153.8h1.2v1.2h-1.2zM22.1 197.1h1.2v1.2h-1.2zM17.6 190.2h1.2v1.2h-1.2zM20.5 191.1h1.2v1.2h-1.2zM13.3 200.8h1.2v1.2h-1.2zM13.7 195.8h1.2v1.2h-1.2zM50.0 125.4h1.2v1.2h-1.2zM20.2 194.1h1.2v1.2h-1.2zM29.4 172.6h1.2v1.2h-1.2zM30.9 163.9h1.2v1.2h-1.2zM19.2 180.3h1.2v1.2h-1.2zM23.6 185.8h1.2v1.2h-1.2zM72.6 111.3h1.2v1.2h-1.2zM20.4 178.6h1.2v1.2h-1.2zM21.7 185.2h1.2v1.2h-1.2zM40.7 139.3h1.2v1.2h-1.2zM24.1 157.7h1.2v1.2h-1.2zM58.3 120.8h1.2v1.2h-1.2zM22.0 181.4h1.2v1.2h-1.2zM28.4 155.2h1.2v1.2h-1.2zM44.0 133.7h1.2v1.2h-1.2zM19.2 205.6h1.2v1.2h-1.2zM55.3 128.5h1.2v1.2h-1.2zM17.0 190.7h1.2v1.2h-1.2zM17.9 172.9h1.2v1.2h-1.2zM47.5 129.7h1.2v1.2h-1.2zM16.4 201.6h1.2v1.2h-1.2zM31.4 155.4h1.2v1.2h-1.2zM22.8 198.0h1.2v1.2h-1.2zM21.1 192.6h1.2v1.2h-1.2zM21.2 199.6h1.2v1.2h-1.2zM18.1 186.1h1.2v1.2h-1.2zM22.8 176.4h1.2v1.2h-1.2zM28.1 162.8h1.2v1.2h-1.2zM25.6 173.2h1.2v1.2h-1.2zM20.6 185.0h1.2v1.2h-1.2zM23.4 157.7h1.2v1.2h-1.2zM30.3 153.6h1.2v1.2h-1.2zM29.9 165.9h1.2v1.2h-1.2zM22.8 193.6h1.2v1.2h-1.2zM20.0 183.0h1.2v1.2h-1.2zM19.4 192.5h1.2v1.2h-1.2zM29.7 180.3h1.2v1.2h-1.2zM15.6 188.9h1.2v1.2h-1.2zM21.9 186.1h1.2v1.2h-1.2zM19.3 165.1h1.2v1.2h-1.2zM32.4 164.5h1.2v1.2h-1.2zM45.8 141.3h1.2v1.2h-1.2zM20.3 200.4h1.2v1.2h-1.2zM27.1 163.3h1.2v1.2h-1.2zM50.3 126.0h1.2v1.2h-1.2zM21.9 166.9h1.2v1.2h-1.2zM24.4 165.4h1.2v1.2h-1.2zM38.4 136.3h1.2v1.2h-1.2zM25.4 160.0h1.2v1.2h-1.2zM27.3 168.1h1.2v1.2h-1.2zM24.7 170.8h1.2v1.2h-1.2zM19.8 188.9h1.2v1.2h-1.2zM16.3 191.9h1.2v1.2h-1.2zM46.4 126.8h1.2v1.2h-1.2zM20.7 196.1h1.2v1.2h-1.2zM20.2 183.7h1.2v1.2h-1.2zM33.4 149.2h1.2v1.2h-1.2zM85.1 111.0h1.2v1.2h-1.2zM21.4 178.8h1.2v1.2h-1.2zM17.8 187.4h1.2v1.2h-1.2zM19.1 183.2h1.2v1.2h-1.2zM32.7 154.4h1.2v1.2h-1.2zM34.7 148.1h1.2v1.2h-1.2zM23.7 176.3h1.2v1.2h-1.2zM37.6 155.0h1.2v1.2h-1.2zM23.1 182.9h1.2v1.2h-1.2zM25.1 168.1h1.2v1.2h-1.2zM28.3 181.6h1.2v1.2h-1.2zM24.1 189.3h1.2v1.2h-1.2zM19.1 201.2h1.2v1.2h-1.2zM19.3 177.3h1.2v1.2h-1.2zM14.0 195.4h1.2v1.2h-1.2zM26.6 189.5h1.2v1.2h-1.2zM20.3 189.3h1.2v1.2h-1.2zM21.1 192.3h1.2v1.2h-1.2zM57.7 121.4h1.2v1.2h-1.2zM25.4 179.5h1.2v1.2h-1.2zM20.8 189.6h1.2v1.2h-1.2zM31.1 150.9h1.2v1.2h-1.2zM17.1 199.4h1.2v1.2h-1.2zM20.9 201.5h1.2v1.2h-1.2zM51.8 125.1h1.2v1.2h-1.2zM21.2 203.5h1.2v1.2h-1.2zM19.0 178.5h1.2v1.2h-1.2zM17.7 186.8h1.2v1.2h-1.2zM41.3 134.1h1.2v1.2h-1.2zM21.8 199.4h1.2v1.2h-1.2zM24.9 150.0h1.2v1.2h-1.2zM27.1 173.6h1.2v1.2h-1.2zM23.9 175.2h1.2v1.2h-1.2zM41.6 146.0h1.2v1.2h-1.2zM27.4 150.6h1.2v1.2h-1.2zM20.7 176.2h1.2v1.2h-1.2zM25.1 168.5h1.2v1.2h-1.2zM14.2 191.7h1.2v1.2h-1.2zM15.7 188.5h1.2v1.2h-1.2zM44.4 132.7h1.2v1.2h-1.2zM25.8 155.6h1.2v1.2h-1.2zM20.4 200.8h1.2v1.2h-1.2zM18.0 189.3h1.2v1.2h-1.2zM30.9 162.2h1.2v1.2h-1.2zM15.4 192.1h1.2v1.2h-1.2zM15.5 186.6h1.2v1.2h-1.2zM50.8 135.6h1.2v1.2h-1.2zM15.3 192.0h1.2v1.2h-1.2zM47.5 128.7h1.2v1.2h-1.2zM19.0 188.0h1.2v1.2h-1.2zM28.2 183.8h1.2v1.2h-1.2zM18.1 201.8h1.2v1.2h-1.2zM16.0 202.2h1.2v1.2h-1.2zM22.3 191.3h1.2v1.2h-1.2zM31.4 149.9h1.2v1.2h-1.2zM21.2 193.3h1.2v1.2h-1.2zM37.9 142.0h1.2v1.2h-1.2zM17.9 193.4h1.2v1.2h-1.2zM16.3 184.7h1.2v1.2h-1.2zM16.9 189.0h1.2v1.2h-1.2zM44.2 144.7h1.2v1.2h-1.2zM25.7 155.7h1.2v1.2h-1.2zM24.6 184.7h1.2v1.2h-1.2zM24.3 174.9h1.2v1.2h-1.2zM33.3 156.1h1.2v1.2h-1.2zM16.1 194.9h1.2v1.2h-1.2zM37.3 145.5h1.2v1.2h-1.2zM28.8 170.8h1.2v1.2h-1.2zM32.8 147.9h1.2v1.2h-1.2zM22.9 164.1h1.2v1.2h-1.2zM16.0 193.2h1.2v1.2h-1.2zM25.6 177.0h1.2v1.2h-1.2zM22.4 184.4h1.2v1.2h-1.2zM21.7 199.4h1.2v1.2h-1.2zM20.3 178.0h1.2v1.2h-1.2zM28.5 172.6h1.2v1.2h-1.2zM21.2 188.2h1.2v1.2h-1.2zM18.2 189.8h1.2v1.2h-1.2zM16.3 193.4h1.2v1.2h-1.2zM26.7 169.8h1.2v1.2h-1.2zM27.9 167.8h1.2v1.2h-1.2zM21.0 184.1h1.2v1.2h-1.2zM31.4 178.1h1.2v1.2h-1.2zM41.7 142.6h1.2v1.2h-1.2zM21.4 192.2h1.2v1.2h-1.2zM26.3 179.2h1.2v1.2h-1.2zM21.4 186.2h1.2v1.2h-1.2zM20.7 181.8h1.2v1.2h-1.2zM26.0 181.4h1.2v1.2h-1.2zM20.1 188.2h1.2v1.2h-1.2zM40.4 147.9h1.2v1.2h-1.2zM17.7 197.4h1.2v1.2h-1.2zM57.3 119.2h1.2v1.2h-1.2zM38.8 137.3h1.2v1.2h-1.2zM18.7 187.1h1.2v1.2h-1.2zM19.2 204.5h1.2v1.2h-1.2zM20.6 174.2h1.2v1.2h-1.2zM40.2 145.1h1.2v1.2h-1.2zM22.8 180.9h1.2v1.2h-1.2zM13.4 176.0h1.2v1.2h-1.2zM23.3 164.4h1.2v1.2h-1.2zM66.4 116.2h1.2v1.2h-1.2zM18.1 184.9h1.2v1.2h-1.2zM36.0 145.9h1.2v1.2h-1.2zM25.2 187.8h1.2v1.2h-1.2zM21.0 191.1h1.2v1.2h-1.2zM19.8 201.8h1.2v1.2h-1.2zM17.6 196.9h1.2v1.2h-1.2zM20.5 185.0h1.2v1.2h-1.2zM19.2 179.1h1.2v1.2h-1.2zM20.7 170.4h1.2v1.2h-1.2zM29.2 148.6h1.2v1.2h-1.2zM19.4 181.3h1.2v1.2h-1.2zM16.8 184.3h1.2v1.2h-1.2zM41.0 135.4h1.2v1.2h-1.2zM48.4 136.4h1.2v1.2h-1.2zM16.5 199.3h1.2v1.2h-1.2zM33.0 154.2h1.2v1.2h-1.2zM17.8 187.5h1.2v1.2h-1.2zM16.6 185.7h1.2v1.2h-1.2zM15.2 200.0h1.2v1.2h-1.2zM46.4 128.6h1.2v1.2h-1.2zM20.6 204.2h1.2v1.2h-1.2zM25.8 162.1h1.2v1.2h-1.2zM31.4 151.7h1.2v1.2h-1.2zM28.4 157.7h1.2v1.2h-1.2zM13.0 196.2h1.2v1.2h-1.2zM25.1 178.7h1.2v1.2h-1.2zM23.6 185.7h1.2v1.2h-1.2zM22.3 154.9h1.2v1.2h-1.2zM37.1 147.3h1.2v1.2h-1.2zM16.9 204.3h1.2v1.2h-1.2zM24.5 165.9h1.2v1.2h-1.2zM19.8 193.1h1.2v1.2h-1.2zM14.6 204.0h1.2v1.2h-1.2zM22.9 204.4h1.2v1.2h-1.2zM14.7 190.2h1.2v1.2h-1.2zM21.4 181.3h1.2v1.2h-1.2zM29.9 167.5h1.2v1.2h-1.2zM31.5 149.6h1.2v1.2h-1.2zM24.0 191.7h1.2v1.2h-1.2zM48.0 126.2h1.2v1.2h-1.2zM17.1 184.6h1.2v1.2h-1.2zM17.2 197.0h1.2v1.2h-1.2zM27.9 173.6h1.2v1.2h-1.2zM34.3 150.3h1.2v1.2h-1.2zM47.7 133.0h1.2v1.2h-1.2zM52.8 126.4h1.2v1.2h-1.2zM19.7 196.2h1.2v1.2h-1.2zM27.2 168.2h1.2v1.2h-1.2zM27.2 189.4h1.2v1.2h-1.2zM27.8 161.2h1.2v1.2h-1.2zM27.5 158.5h1.2v1.2h-1.2zM19.0 190.7h1.2v1.2h-1.2zM24.7 178.0h1.2v1.2h-1.2zM27.2 167.8h1.2v1.2h-1.2zM21.7 196.8h1.2v1.2h-1.2zM21.4 193.9h1.2v1.2h-1.2zM21.4 163.1h1.2v1.2h-1.2zM22.1 181.0h1.2v1.2h-1.2zM31.4 159.2h1.2v1.2h-1.2zM27.6 160.2h1.2v1.2h-1.2zM28.4 159.0h1.2v1.2h-1.2zM26.5 164.5h1.2v1.2h-1.2zM28.2 163.5h1.2v1.2h-1.2zM25.9 153.7h1.2v1.2h-1.2zM24.1 166.8h1.2v1.2h-1.2zM59.0 123.5h1.2v1.2h-1.2zM28.9 157.3h1.2v1.2h-1.2zM24.2 202.6h1.2v1.2h-1.2zM19.3 191.1h1.2v1.2h-1.2zM36.8 141.9h1.2v1.2h-1.2zM34.0 156.6h1.2v1.2h-1.2zM13.9 195.7h1.2v1.2h-1.2zM28.1 154.7h1.2v1.2h-1.2zM13.3 202.1h1.2v1.2h-1.2zM19.6 200.7h1.2v1.2h-1.2zM29.4 151.4h1.2v1.2h-1.2zM17.7 184.2h1.2v1.2h-1.2zM32.7 161.4h1.2v1.2h-1.2zM15.5 193.0h1.2v1.2h-1.2zM37.8 144.2h1.2v1.2h-1.2zM27.3 161.8h1.2v1.2h-1.2zM23.0 186.8h1.2v1.2h-1.2zM24.9 174.5h1.2v1.2h-1.2zM24.0 177.0h1.2v1.2h-1.2zM27.4 190.3h1.2v1.2h-1.2zM20.7 177.6h1.2v1.2h-1.2zM28.5 158.3h1.2v1.2h-1.2zM41.2 137.4h1.2v1.2h-1.2zM24.9 175.2h1.2v1.2h-1.2zM17.0 185.4h1.2v1.2h-1.2zM42.3 138.2h1.2v1.2h-1.2zM38.4 152.4h1.2v1.2h-1.2zM37.4 141.3h1.2v1.2h-1.2zM28.0 163.0h1.2v1.2h-1.2zM29.6 167.0h1.2v1.2h-1.2zM28.4 164.9h1.2v1.2h-1.2zM14.0 185.6h1.2v1.2h-1.2zM25.5 184.8h1.2v1.2h-1.2zM39.1 134.3h1.2v1.2h-1.2zM23.6 182.3h1.2v1.2h-1.2zM23.1 166.1h1.2v1.2h-1.2zM34.4 152.1h1.2v1.2h-1.2zM25.0 183.3h1.2v1.2h-1.2zM22.5 182.0h1.2v1.2h-1.2zM20.6 194.4h1.2v1.2h-1.2zM18.6 178.9h1.2v1.2h-1.2zM18.5 187.4h1.2v1.2h-1.2zM27.4 190.3h1.2v1.2h-1.2zM15.9 186.9h1.2v1.2h-1.2zM23.2 170.8h1.2v1.2h-1.2zM15.6 186.3h1.2v1.2h-1.2zM33.5 147.9h1.2v1.2h-1.2zM34.6 156.3h1.2v1.2h-1.2zM51.1 125.8h1.2v1.2h-1.2zM24.7 176.9h1.2v1.2h-1.2zM46.8 130.1h1.2v1.2h-1.2zM26.1 160.4h1.2v1.2h-1.2zM17.4 194.2h1.2v1.2h-1.2zM25.6 199.1h1.2v1.2h-1.2zM14.3 193.1h1.2v1.2h-1.2zM32.4 158.5h1.2v1.2h-1.2zM45.7 134.7h1.2v1.2h-1.2zM21.5 188.4h1.2v1.2h-1.2zM26.5 182.4h1.2v1.2h-1.2zM27.0 149.6h1.2v1.2h-1.2zM47.2 128.9h1.2v1.2h-1.2zM23.5 174.1h1.2v1.2h-1.2zM43.0 135.6h1.2v1.2h-1.2zM46.0 135.7h1.2v1.2h-1.2zM28.4 159.7h1.2v1.2h-1.2zM38.1 142.6h1.2v1.2h-1.2zM25.1 183.8h1.2v1.2h-1.2zM16.3 187.1h1.2v1.2h-1.2zM25.1 171.4h1.2v1.2h-1.2zM27.0 164.9h1.2v1.2h-1.2zM20.3 174.4h1.2v1.2h-1.2zM27.5 162.6h1.2v1.2h-1.2zM21.9 171.2h1.2v1.2h-1.2zM21.8 182.3h1.2v1.2h-1.2zM18.9 187.9h1.2v1.2h-1.2zM24.8 175.5h1.2v1.2h-1.2zM48.1 127.7h1.2v1.2h-1.2zM21.5 176.2h1.2v1.2h-1.2zM24.2 165.8h1.2v1.2h-1.2zM27.5 164.0h1.2v1.2h-1.2zM17.3 187.6h1.2v1.2h-1.2zM24.8 206.3h1.2v1.2h-1.2zM54.1 124.8h1.2v1.2h-1.2zM20.1 179.1h1.2v1.2h-1.2zM54.7 121.8h1.2v1.2h-1.2zM17.6 190.6h1.2v1.2h-1.2zM29.9 153.3h1.2v1.2h-1.2zM30.3 151.9h1.2v1.2h-1.2zM34.9 141.7h1.2v1.2h-1.2zM40.2 146.9h1.2v1.2h-1.2zM27.5 174.5h1.2v1.2h-1.2zM29.9 144.2h1.2v1.2h-1.2zM47.2 135.3h1.2v1.2h-1.2zM35.6 145.5h1.2v1.2h-1.2zM18.5 187.2h1.2v1.2h-1.2zM20.3 190.4h1.2v1.2h-1.2zM21.5 187.4h1.2v1.2h-1.2zM14.2 202.7h1.2v1.2h-1.2zM14.7 199.6h1.2v1.2h-1.2zM23.0 174.4h1.2v1.2h-1.2zM24.2 196.9h1.2v1.2h-1.2zM61.8 117.3h1.2v1.2h-1.2zM17.3 191.6h1.2v1.2h-1.2zM22.4 189.1h1.2v1.2h-1.2zM21.5 157.9h1.2v1.2h-1.2zM18.8 196.9h1.2v1.2h-1.2zM23.4 169.0h1.2v1.2h-1.2zM55.7 120.0h1.2v1.2h-1.2zM28.7 158.1h1.2v1.2h-1.2zM35.2 154.2h1.2v1.2h-1.2zM24.8 166.8h1.2v1.2h-1.2zM25.3 180.5h1.2v1.2h-1.2zM19.6 193.2h1.2v1.2h-1.2zM15.9 193.7h1.2v1.2h-1.2zM17.8 192.2h1.2v1.2h-1.2zM33.4 157.8h1.2v1.2h-1.2zM20.5 187.8h1.2v1.2h-1.2zM42.8 136.6h1.2v1.2h-1.2zM18.4 200.6h1.2v1.2h-1.2zM21.1 178.7h1.2v1.2h-1.2zM18.8 183.4h1.2v1.2h-1.2zM26.8 160.8h1.2v1.2h-1.2zM39.8 137.5h1.2v1.2h-1.2zM35.4 144.5h1.2v1.2h-1.2zM21.8 200.7h1.2v1.2h-1.2zM42.5 133.6h1.2v1.2h-1.2zM23.6 171.0h1.2v1.2h-1.2zM51.4 127.7h1.2v1.2h-1.2zM22.3 173.0h1.2v1.2h-1.2zM15.2 187.4h1.2v1.2h-1.2zM17.5 188.1h1.2v1.2h-1.2zM28.7 155.5h1.2v1.2h-1.2zM33.4 146.2h1.2v1.2h-1.2zM32.9 154.0h1.2v1.2h-1.2zM23.5 188.6h1.2v1.2h-1.2zM14.9 192.4h1.2v1.2h-1.2zM23.7 162.9h1.2v1.2h-1.2zM40.6 144.8h1.2v1.2h-1.2zM24.7 169.8h1.2v1.2h-1.2zM19.3 194.7h1.2v1.2h-1.2zM31.8 159.9h1.2v1.2h-1.2zM19.4 180.4h1.2v1.2h-1.2zM21.6 200.9h1.2v1.2h-1.2zM22.9 187.1h1.2v1.2h-1.2zM20.1 186.8h1.2v1.2h-1.2zM19.8 204.7h1.2v1.2h-1.2zM23.8 185.7h1.2v1.2h-1.2zM37.1 137.3h1.2v1.2h-1.2zM17.9 195.9h1.2v1.2h-1.2zM49.5 128.8h1.2v1.2h-1.2zM20.6 191.4h1.2v1.2h-1.2zM57.6 126.7h1.2v1.2h-1.2zM25.1 169.8h1.2v1.2h-1.2zM17.6 185.8h1.2v1.2h-1.2zM24.4 192.0h1.2v1.2h-1.2zM19.5 193.2h1.2v1.2h-1.2zM19.4 204.7h1.2v1.2h-1.2zM25.9 153.5h1.2v1.2h-1.2zM35.5 159.9h1.2v1.2h-1.2zM30.8 162.3h1.2v1.2h-1.2zM20.2 183.8h1.2v1.2h-1.2zM33.3 147.6h1.2v1.2h-1.2zM23.7 164.2h1.2v1.2h-1.2zM27.2 157.4h1.2v1.2h-1.2zM38.8 136.9h1.2v1.2h-1.2zM21.3 181.1h1.2v1.2h-1.2zM30.9 170.2h1.2v1.2h-1.2zM19.5 196.0h1.2v1.2h-1.2zM27.9 179.5h1.2v1.2h-1.2zM14.4 188.7h1.2v1.2h-1.2zM16.3 204.6h1.2v1.2h-1.2zM35.0 142.9h1.2v1.2h-1.2zM46.7 137.4h1.2v1.2h-1.2zM13.3 198.8h1.2v1.2h-1.2zM22.4 176.4h1.2v1.2h-1.2zM27.2 157.3h1.2v1.2h-1.2zM20.4 181.8h1.2v1.2h-1.2zM19.3 192.9h1.2v1.2h-1.2zM22.5 185.3h1.2v1.2h-1.2zM17.5 187.9h1.2v1.2h-1.2zM17.0 186.7h1.2v1.2h-1.2zM36.5 143.3h1.2v1.2h-1.2zM24.9 172.1h1.2v1.2h-1.2zM20.2 161.9h1.2v1.2h-1.2zM26.3 172.5h1.2v1.2h-1.2zM25.1 171.5h1.2v1.2h-1.2zM13.4 200.9h1.2v1.2h-1.2zM26.4 159.3h1.2v1.2h-1.2zM17.9 185.8h1.2v1.2h-1.2zM18.0 170.3h1.2v1.2h-1.2zM21.1 191.6h1.2v1.2h-1.2zM46.0 137.2h1.2v1.2h-1.2zM76.7 110.5h1.2v1.2h-1.2zM26.1 189.1h1.2v1.2h-1.2zM42.9 140.6h1.2v1.2h-1.2zM57.3 124.8h1.2v1.2h-1.2zM33.4 161.5h1.2v1.2h-1.2zM18.7 190.6h1.2v1.2h-1.2zM21.8 192.3h1.2v1.2h-1.2zM17.0 201.1h1.2v1.2h-1.2zM29.5 165.0h1.2v1.2h-1.2zM14.2 203.5h1.2v1.2h-1.2zM27.0 155.8h1.2v1.2h-1.2zM39.2 143.2h1.2v1.2h-1.2zM29.4 157.4h1.2v1.2h-1.2zM19.5 197.3h1.2v1.2h-1.2zM26.0 165.0h1.2v1.2h-1.2zM15.6 198.2h1.2v1.2h-1.2zM18.7 195.9h1.2v1.2h-1.2zM22.3 168.8h1.2v1.2h-1.2zM31.0 153.3h1.2v1.2h-1.2zM43.5 135.2h1.2v1.2h-1.2zM13.3 200.4h1.2v1.2h-1.2zM53.5 129.0h1.2v1.2h-1.2zM24.0 173.1h1.2v1.2h-1.2zM26.8 160.7h1.2v1.2h-1.2zM36.2 148.0h1.2v1.2h-1.2zM49.8 121.2h1.2v1.2h-1.2zM31.8 162.3h1.2v1.2h-1.2zM15.9 198.1h1.2v1.2h-1.2zM27.7 158.0h1.2v1.2h-1.2zM23.4 179.1h1.2v1.2h-1.2zM44.5 137.4h1.2v1.2h-1.2zM18.5 196.5h1.2v1.2h-1.2zM24.8 168.7h1.2v1.2h-1.2zM16.8 199.5h1.2v1.2h-1.2zM25.7 164.6h1.2v1.2h-1.2zM32.0 154.1h1.2v1.2h-1.2zM37.1 143.7h1.2v1.2h-1.2zM19.8 177.6h1.2v1.2h-1.2zM36.6 143.8h1.2v1.2h-1.2zM31.9 157.6h1.2v1.2h-1.2zM24.6 168.4h1.2v1.2h-1.2zM25.3 190.6h1.2v1.2h-1.2zM25.3 161.1h1.2v1.2h-1.2zM64.0 117.2h1.2v1.2h-1.2zM21.0 192.1h1.2v1.2h-1.2zM22.6 165.6h1.2v1.2h-1.2zM26.1 170.2h1.2v1.2h-1.2zM49.8 126.8h1.2v1.2h-1.2zM25.0 186.2h1.2v1.2h-1.2zM18.7 196.4h1.2v1.2h-1.2zM28.8 182.5h1.2v1.2h-1.2zM20.4 185.2h1.2v1.2h-1.2zM26.0 187.1h1.2v1.2h-1.2zM31.6 161.5h1.2v1.2h-1.2zM29.9 176.1h1.2v1.2h-1.2zM33.5 146.8h1.2v1.2h-1.2zM26.3 153.9h1.2v1.2h-1.2zM13.1 187.7h1.2v1.2h-1.2zM47.5 130.7h1.2v1.2h-1.2zM24.8 170.4h1.2v1.2h-1.2zM23.6 165.3h1.2v1.2h-1.2zM22.7 180.9h1.2v1.2h-1.2zM27.3 169.4h1.2v1.2h-1.2zM20.7 189.9h1.2v1.2h-1.2zM35.7 150.9h1.2v1.2h-1.2zM13.3 192.3h1.2v1.2h-1.2zM14.1 190.4h1.2v1.2h-1.2zM23.3 172.0h1.2v1.2h-1.2zM43.8 138.6h1.2v1.2h-1.2zM25.8 177.3h1.2v1.2h-1.2zM22.7 183.7h1.2v1.2h-1.2zM49.6 131.5h1.2v1.2h-1.2zM19.8 190.7h1.2v1.2h-1.2zM29.4 153.5h1.2v1.2h-1.2zM16.2 195.0h1.2v1.2h-1.2zM45.2 128.5h1.2v1.2h-1.2zM16.8 199.5h1.2v1.2h-1.2zM33.5 145.8h1.2v1.2h-1.2zM18.2 173.3h1.2v1.2h-1.2zM37.0 143.9h1.2v1.2h-1.2zM29.8 152.1h1.2v1.2h-1.2zM26.4 177.6h1.2v1.2h-1.2zM26.8 199.9h1.2v1.2h-1.2zM25.5 164.5h1.2v1.2h-1.2zM25.8 154.5h1.2v1.2h-1.2zM27.4 162.9h1.2v1.2h-1.2zM36.7 139.0h1.2v1.2h-1.2zM16.1 191.1h1.2v1.2h-1.2zM26.5 167.2h1.2v1.2h-1.2zM23.1 195.8h1.2v1.2h-1.2zM23.7 166.6h1.2v1.2h-1.2zM13.8 197.3h1.2v1.2h-1.2zM40.2 139.8h1.2v1.2h-1.2zM31.7 147.4h1.2v1.2h-1.2zM14.7 179.9h1.2v1.2h-1.2zM33.2 163.3h1.2v1.2h-1.2zM44.6 134.3h1.2v1.2h-1.2zM20.8 172.6h1.2v1.2h-1.2zM20.5 185.0h1.2v1.2h-1.2zM28.8 154.0h1.2v1.2h-1.2zM36.1 145.7h1.2v1.2h-1.2zM32.6 153.1h1.2v1.2h-1.2zM27.3 155.3h1.2v1.2h-1.2zM31.4 164.7h1.2v1.2h-1.2zM28.1 158.6h1.2v1.2h-1.2zM21.4 184.3h1.2v1.2h-1.2zM18.8 196.7h1.2v1.2h-1.2zM21.6 170.4h1.2v1.2h-1.2zM25.1 181.0h1.2v1.2h-1.2zM19.8 190.2h1.2v1.2h-1.2zM26.2 172.7h1.2v1.2h-1.2zM25.4 183.1h1.2v1.2h-1.2zM18.7 183.6h1.2v1.2h-1.2zM14.6 190.8h1.2v1.2h-1.2zM24.0 196.1h1.2v1.2h-1.2zM44.2 135.3h1.2v1.2h-1.2zM30.6 156.0h1.2v1.2h-1.2zM17.0 196.6h1.2v1.2h-1.2zM31.0 155.1h1.2v1.2h-1.2zM19.4 191.8h1.2v1.2h-1.2zM42.4 137.6h1.2v1.2h-1.2zM24.6 188.2h1.2v1.2h-1.2zM31.2 167.8h1.2v1.2h-1.2zM31.4 149.5h1.2v1.2h-1.2zM20.2 166.7h1.2v1.2h-1.2zM49.4 131.0h1.2v1.2h-1.2zM14.8 193.1h1.2v1.2h-1.2zM18.9 202.2h1.2v1.2h-1.2zM33.4 145.1h1.2v1.2h-1.2zM20.9 176.3h1.2v1.2h-1.2zM18.3 195.1h1.2v1.2h-1.2zM32.5 158.2h1.2v1.2h-1.2zM33.8 159.2h1.2v1.2h-1.2zM21.1 188.6h1.2v1.2h-1.2zM20.1 188.1h1.2v1.2h-1.2zM17.5 197.2h1.2v1.2h-1.2zM26.6 150.5h1.2v1.2h-1.2zM19.2 172.7h1.2v1.2h-1.2zM17.4 194.7h1.2v1.2h-1.2zM16.6 188.3h1.2v1.2h-1.2zM17.4 188.9h1.2v1.2h-1.2zM19.5 199.8h1.2v1.2h-1.2zM18.7 203.5h1.2v1.2h-1.2zM14.2 199.9h1.2v1.2h-1.2zM22.1 182.9h1.2v1.2h-1.2zM22.9 171.6h1.2v1.2h-1.2zM19.2 191.4h1.2v1.2h-1.2zM39.0 141.7h1.2v1.2h-1.2zM36.1 145.1h1.2v1.2h-1.2zM21.4 193.8h1.2v1.2h-1.2zM14.2 202.5h1.2v1.2h-1.2zM22.5 188.8h1.2v1.2h-1.2zM22.7 168.6h1.2v1.2h-1.2zM16.0 198.8h1.2v1.2h-1.2zM13.3 193.5h1.2v1.2h-1.2zM22.5 185.7h1.2v1.2h-1.2zM26.5 171.2h1.2v1.2h-1.2zM41.4 141.8h1.2v1.2h-1.2zM18.5 179.8h1.2v1.2h-1.2zM38.6 149.3h1.2v1.2h-1.2zM30.1 147.7h1.2v1.2h-1.2zM26.3 172.6h1.2v1.2h-1.2zM14.9 189.6h1.2v1.2h-1.2zM27.8 189.5h1.2v1.2h-1.2zM19.4 192.7h1.2v1.2h-1.2zM25.1 159.8h1.2v1.2h-1.2zM21.3 187.9h1.2v1.2h-1.2zM28.3 176.7h1.2v1.2h-1.2zM14.4 193.6h1.2v1.2h-1.2zM35.5 146.3h1.2v1.2h-1.2zM17.0 183.7h1.2v1.2h-1.2zM37.3 146.2h1.2v1.2h-1.2zM27.1 158.8h1.2v1.2h-1.2zM19.5 192.8h1.2v1.2h-1.2zM23.8 187.3h1.2v1.2h-1.2zM24.5 185.2h1.2v1.2h-1.2zM19.7 197.0h1.2v1.2h-1.2zM16.8 194.4h1.2v1.2h-1.2zM26.4 157.7h1.2v1.2h-1.2zM24.4 178.5h1.2v1.2h-1.2zM20.8 186.5h1.2v1.2h-1.2zM27.7 172.3h1.2v1.2h-1.2zM21.8 183.2h1.2v1.2h-1.2zM51.3 134.1h1.2v1.2h-1.2zM26.1 183.9h1.2v1.2h-1.2zM30.8 172.9h1.2v1.2h-1.2zM16.9 189.1h1.2v1.2h-1.2zM27.6 171.0h1.2v1.2h-1.2zM51.2 127.1h1.2v1.2h-1.2zM21.6 172.0h1.2v1.2h-1.2zM22.4 201.4h1.2v1.2h-1.2zM13.5 198.8h1.2v1.2h-1.2zM21.5 185.2h1.2v1.2h-1.2zM24.2 180.0h1.2v1.2h-1.2zM35.8 146.3h1.2v1.2h-1.2zM24.7 176.7h1.2v1.2h-1.2zM18.4 183.2h1.2v1.2h-1.2zM26.7 155.5h1.2v1.2h-1.2zM21.9 197.5h1.2v1.2h-1.2zM42.2 136.5h1.2v1.2h-1.2zM38.8 152.1h1.2v1.2h-1.2zM37.1 150.1h1.2v1.2h-1.2zM21.8 189.0h1.2v1.2h-1.2zM26.5 167.3h1.2v1.2h-1.2zM19.6 189.6h1.2v1.2h-1.2zM34.4 157.9h1.2v1.2h-1.2zM34.2 147.4h1.2v1.2h-1.2zM15.5 190.7h1.2v1.2h-1.2zM22.1 198.0h1.2v1.2h-1.2zM24.8 185.1h1.2v1.2h-1.2zM21.7 185.6h1.2v1.2h-1.2zM22.9 169.2h1.2v1.2h-1.2zM40.0 138.9h1.2v1.2h-1.2zM37.0 148.0h1.2v1.2h-1.2zM22.5 181.3h1.2v1.2h-1.2zM19.1 197.3h1.2v1.2h-1.2zM51.8 122.0h1.2v1.2h-1.2zM61.7 117.1h1.2v1.2h-1.2zM16.4 194.1h1.2v1.2h-1.2zM24.8 200.4h1.2v1.2h-1.2zM17.6 192.0h1.2v1.2h-1.2zM24.0 177.5h1.2v1.2h-1.2zM22.0 189.7h1.2v1.2h-1.2zM19.7 194.9h1.2v1.2h-1.2zM24.2 183.9h1.2v1.2h-1.2zM25.6 172.6h1.2v1.2h-1.2zM15.5 194.2h1.2v1.2h-1.2zM33.1 160.6h1.2v1.2h-1.2zM34.0 147.2h1.2v1.2h-1.2zM19.9 198.1h1.2v1.2h-1.2zM24.6 179.4h1.2v1.2h-1.2zM22.5 187.1h1.2v1.2h-1.2zM25.2 165.2h1.2v1.2h-1.2zM25.9 175.8h1.2v1.2h-1.2zM40.8 147.3h1.2v1.2h-1.2zM49.4 131.8h1.2v1.2h-1.2zM18.9 186.5h1.2v1.2h-1.2zM24.6 185.8h1.2v1.2h-1.2zM30.7 162.6h1.2v1.2h-1.2zM37.5 138.8h1.2v1.2h-1.2zM60.5 118.5h1.2v1.2h-1.2zM16.1 193.7h1.2v1.2h-1.2zM22.1 189.8h1.2v1.2h-1.2zM16.3 199.7h1.2v1.2h-1.2zM21.8 190.7h1.2v1.2h-1.2zM24.0 181.7h1.2v1.2h-1.2zM42.8 131.5h1.2v1.2h-1.2zM18.5 193.1h1.2v1.2h-1.2zM16.4 195.0h1.2v1.2h-1.2zM25.7 174.5h1.2v1.2h-1.2zM24.0 176.8h1.2v1.2h-1.2zM42.6 136.6h1.2v1.2h-1.2zM17.9 183.8h1.2v1.2h-1.2zM22.0 190.2h1.2v1.2h-1.2zM27.1 156.2h1.2v1.2h-1.2zM23.7 178.2h1.2v1.2h-1.2zM37.2 145.2h1.2v1.2h-1.2zM17.2 195.2h1.2v1.2h-1.2zM27.7 165.4h1.2v1.2h-1.2zM25.5 169.3h1.2v1.2h-1.2zM22.8 168.2h1.2v1.2h-1.2zM50.3 131.2h1.2v1.2h-1.2zM26.9 163.4h1.2v1.2h-1.2zM22.8 178.1h1.2v1.2h-1.2zM14.8 190.3h1.2v1.2h-1.2zM19.5 194.1h1.2v1.2h-1.2zM25.4 172.7h1.2v1.2h-1.2zM19.6 199.0h1.2v1.2h-1.2zM22.4 178.3h1.2v1.2h-1.2zM18.7 188.9h1.2v1.2h-1.2zM26.7 181.5h1.2v1.2h-1.2zM27.1 161.7h1.2v1.2h-1.2zM25.6 157.9h1.2v1.2h-1.2zM33.7 152.1h1.2v1.2h-1.2zM24.1 174.2h1.2v1.2h-1.2zM21.4 203.7h1.2v1.2h-1.2zM16.3 194.6h1.2v1.2h-1.2zM23.1 190.2h1.2v1.2h-1.2zM21.9 195.1h1.2v1.2h-1.2zM26.4 165.9h1.2v1.2h-1.2zM49.1 129.2h1.2v1.2h-1.2zM38.6 137.1h1.2v1.2h-1.2zM17.0 193.3h1.2v1.2h-1.2zM20.9 181.8h1.2v1.2h-1.2zM24.7 163.2h1.2v1.2h-1.2zM34.0 149.8h1.2v1.2h-1.2zM23.6 181.5h1.2v1.2h-1.2zM51.5 123.3h1.2v1.2h-1.2zM21.0 189.3h1.2v1.2h-1.2zM21.1 191.1h1.2v1.2h-1.2zM16.8 196.9h1.2v1.2h-1.2zM30.0 156.6h1.2v1.2h-1.2zM16.9 203.0h1.2v1.2h-1.2zM21.0 168.5h1.2v1.2h-1.2zM32.2 155.3h1.2v1.2h-1.2zM26.1 178.9h1.2v1.2h-1.2zM17.2 192.8h1.2v1.2h-1.2zM22.6 179.0h1.2v1.2h-1.2zM15.3 196.1h1.2v1.2h-1.2zM20.1 179.0h1.2v1.2h-1.2zM30.9 152.9h1.2v1.2h-1.2zM14.8 198.5h1.2v1.2h-1.2zM25.8 155.7h1.2v1.2h-1.2zM27.1 162.3h1.2v1.2h-1.2zM25.1 165.2h1.2v1.2h-1.2zM15.4 204.1h1.2v1.2h-1.2zM25.4 192.9h1.2v1.2h-1.2zM30.9 162.7h1.2v1.2h-1.2zM31.5 150.0h1.2v1.2h-1.2zM13.9 193.9h1.2v1.2h-1.2zM31.0 156.7h1.2v1.2h-1.2zM13.4 196.3h1.2v1.2h-1.2zM24.3 170.6h1.2v1.2h-1.2zM21.2 188.6h1.2v1.2h-1.2zM21.5 175.6h1.2v1.2h-1.2zM13.4 198.8h1.2v1.2h-1.2zM19.7 189.0h1.2v1.2h-1.2zM15.2 188.8h1.2v1.2h-1.2zM23.8 194.7h1.2v1.2h-1.2zM19.4 172.1h1.2v1.2h-1.2zM28.4 167.4h1.2v1.2h-1.2zM34.2 143.6h1.2v1.2h-1.2zM17.4 185.4h1.2v1.2h-1.2zM29.2 157.3h1.2v1.2h-1.2zM17.6 195.3h1.2v1.2h-1.2zM22.1 188.9h1.2v1.2h-1.2zM18.8 194.7h1.2v1.2h-1.2zM16.0 194.2h1.2v1.2h-1.2zM34.1 156.7h1.2v1.2h-1.2zM32.6 164.9h1.2v1.2h-1.2zM46.2 130.3h1.2v1.2h-1.2zM15.7 193.4h1.2v1.2h-1.2zM65.7 114.0h1.2v1.2h-1.2zM13.3 185.8h1.2v1.2h-1.2zM18.6 203.0h1.2v1.2h-1.2zM16.3 196.0h1.2v1.2h-1.2zM53.3 124.8h1.2v1.2h-1.2zM28.5 166.0h1.2v1.2h-1.2zM14.8 203.0h1.2v1.2h-1.2zM16.3 200.3h1.2v1.2h-1.2zM18.9 180.5h1.2v1.2h-1.2zM25.6 173.4h1.2v1.2h-1.2zM45.4 140.5h1.2v1.2h-1.2zM30.6 175.0h1.2v1.2h-1.2zM28.6 155.2h1.2v1.2h-1.2zM24.1 174.2h1.2v1.2h-1.2zM24.3 174.3h1.2v1.2h-1.2zM15.1 178.9h1.2v1.2h-1.2zM34.2 146.7h1.2v1.2h-1.2zM17.5 187.9h1.2v1.2h-1.2zM19.2 195.3h1.2v1.2h-1.2zM40.7 133.7h1.2v1.2h-1.2zM24.1 173.6h1.2v1.2h-1.2zM21.4 200.0h1.2v1.2h-1.2zM34.1 159.4h1.2v1.2h-1.2zM26.9 180.1h1.2v1.2h-1.2zM34.8 144.3h1.2v1.2h-1.2zM13.6 193.4h1.2v1.2h-1.2zM16.6 174.5h1.2v1.2h-1.2zM18.0 200.2h1.2v1.2h-1.2zM19.3 203.7h1.2v1.2h-1.2zM31.6 149.4h1.2v1.2h-1.2zM25.5 181.8h1.2v1.2h-1.2zM21.5 190.1h1.2v1.2h-1.2zM18.6 195.6h1.2v1.2h-1.2zM18.3 193.0h1.2v1.2h-1.2zM18.2 189.5h1.2v1.2h-1.2zM13.1 204.4h1.2v1.2h-1.2zM22.2 183.6h1.2v1.2h-1.2zM29.4 159.5h1.2v1.2h-1.2zM40.9 135.9h1.2v1.2h-1.2zM19.8 183.7h1.2v1.2h-1.2zM49.3 130.6h1.2v1.2h-1.2zM34.5 147.2h1.2v1.2h-1.2zM22.3 188.0h1.2v1.2h-1.2zM23.8 183.5h1.2v1.2h-1.2zM29.8 153.5h1.2v1.2h-1.2zM20.3 188.0h1.2v1.2h-1.2zM38.8 146.4h1.2v1.2h-1.2zM15.8 193.5h1.2v1.2h-1.2zM31.0 163.2h1.2v1.2h-1.2zM23.7 193.6h1.2v1.2h-1.2zM17.8 189.4h1.2v1.2h-1.2zM19.0 196.2h1.2v1.2h-1.2zM24.8 193.6h1.2v1.2h-1.2zM19.5 203.3h1.2v1.2h-1.2zM20.3 177.0h1.2v1.2h-1.2zM27.0 191.2h1.2v1.2h-1.2zM15.5 194.5h1.2v1.2h-1.2zM24.2 177.5h1.2v1.2h-1.2zM30.4 157.2h1.2v1.2h-1.2zM21.0 178.6h1.2v1.2h-1.2zM24.9 176.0h1.2v1.2h-1.2zM27.7 154.2h1.2v1.2h-1.2zM20.4 197.0h1.2v1.2h-1.2zM39.3 152.4h1.2v1.2h-1.2zM20.4 178.7h1.2v1.2h-1.2zM17.1 188.2h1.2v1.2h-1.2zM18.7 197.0h1.2v1.2h-1.2zM29.2 148.4h1.2v1.2h-1.2zM14.3 191.6h1.2v1.2h-1.2zM14.7 196.1h1.2v1.2h-1.2zM28.9 152.8h1.2v1.2h-1.2zM19.2 191.4h1.2v1.2h-1.2zM48.1 131.5h1.2v1.2h-1.2zM21.5 182.4h1.2v1.2h-1.2zM19.6 191.3h1.2v1.2h-1.2zM32.5 150.7h1.2v1.2h-1.2zM19.7 188.3h1.2v1.2h-1.2zM58.1 122.4h1.2v1.2h-1.2zM37.6 144.6h1.2v1.2h-1.2zM17.1 197.3h1.2v1.2h-1.2zM23.5 173.0h1.2v1.2h-1.2zM17.5 199.4h1.2v1.2h-1.2zM19.7 192.5h1.2v1.2h-1.2zM21.4 171.1h1.2v1.2h-1.2zM22.6 162.5h1.2v1.2h-1.2zM20.9 186.0h1.2v1.2h-1.2zM18.4 192.5h1.2v1.2h-1.2zM20.3 189.0h1.2v1.2h-1.2zM18.5 203.4h1.2v1.2h-1.2zM20.5 184.3h1.2v1.2h-1.2zM17.8 187.4h1.2v1.2h-1.2zM24.1 177.0h1.2v1.2h-1.2zM31.1 148.1h1.2v1.2h-1.2zM15.2 193.4h1.2v1.2h-1.2zM19.8 173.0h1.2v1.2h-1.2zM18.1 192.7h1.2v1.2h-1.2zM23.4 171.1h1.2v1.2h-1.2zM21.0 189.5h1.2v1.2h-1.2zM28.3 169.2h1.2v1.2h-1.2zM20.0 187.4h1.2v1.2h-1.2zM27.8 160.0h1.2v1.2h-1.2zM24.7 182.7h1.2v1.2h-1.2zM31.4 167.6h1.2v1.2h-1.2zM32.9 153.5h1.2v1.2h-1.2zM30.0 164.4h1.2v1.2h-1.2zM20.0 169.5h1.2v1.2h-1.2zM27.1 161.4h1.2v1.2h-1.2zM29.4 157.2h1.2v1.2h-1.2zM37.2 143.4h1.2v1.2h-1.2zM18.4 186.9h1.2v1.2h-1.2zM14.0 189.8h1.2v1.2h-1.2zM23.1 174.6h1.2v1.2h-1.2zM13.1 187.3h1.2v1.2h-1.2zM22.7 192.6h1.2v1.2h-1.2zM22.0 181.3h1.2v1.2h-1.2zM19.1 187.2h1.2v1.2h-1.2zM30.0 156.6h1.2v1.2h-1.2zM19.1 190.2h1.2v1.2h-1.2zM60.9 119.1h1.2v1.2h-1.2zM13.2 201.1h1.2v1.2h-1.2zM20.8 172.4h1.2v1.2h-1.2zM21.2 192.0h1.2v1.2h-1.2zM50.8 128.5h1.2v1.2h-1.2zM22.9 180.3h1.2v1.2h-1.2zM27.3 155.8h1.2v1.2h-1.2zM28.4 167.6h1.2v1.2h-1.2zM31.7 153.2h1.2v1.2h-1.2zM16.0 193.3h1.2v1.2h-1.2zM16.2 188.3h1.2v1.2h-1.2zM16.0 197.5h1.2v1.2h-1.2zM41.0 138.3h1.2v1.2h-1.2zM21.1 192.5h1.2v1.2h-1.2zM19.4 190.3h1.2v1.2h-1.2zM25.0 189.4h1.2v1.2h-1.2zM16.6 196.1h1.2v1.2h-1.2zM29.8 165.9h1.2v1.2h-1.2zM18.1 192.2h1.2v1.2h-1.2zM24.5 178.1h1.2v1.2h-1.2zM27.5 161.7h1.2v1.2h-1.2zM59.4 122.8h1.2v1.2h-1.2zM21.4 159.0h1.2v1.2h-1.2zM47.7 134.4h1.2v1.2h-1.2zM22.1 180.4h1.2v1.2h-1.2zM13.7 193.3h1.2v1.2h-1.2zM45.9 139.8h1.2v1.2h-1.2zM46.2 138.7h1.2v1.2h-1.2zM17.6 201.8h1.2v1.2h-1.2zM24.0 185.3h1.2v1.2h-1.2zM55.5 118.2h1.2v1.2h-1.2zM25.7 170.1h1.2v1.2h-1.2zM28.3 156.8h1.2v1.2h-1.2zM36.8 147.6h1.2v1.2h-1.2zM31.8 150.9h1.2v1.2h-1.2zM24.6 183.7h1.2v1.2h-1.2zM32.6 148.9h1.2v1.2h-1.2zM32.0 168.1h1.2v1.2h-1.2zM55.3 123.1h1.2v1.2h-1.2zM17.4 184.0h1.2v1.2h-1.2zM20.6 179.0h1.2v1.2h-1.2zM21.1 194.2h1.2v1.2h-1.2zM14.6 203.8h1.2v1.2h-1.2zM20.3 187.7h1.2v1.2h-1.2zM21.8 159.1h1.2v1.2h-1.2zM39.9 140.7h1.2v1.2h-1.2zM16.7 196.9h1.2v1.2h-1.2zM71.6 111.2h1.2v1.2h-1.2zM33.5 143.7h1.2v1.2h-1.2zM25.7 163.9h1.2v1.2h-1.2zM31.0 152.8h1.2v1.2h-1.2zM26.4 168.1h1.2v1.2h-1.2zM33.2 159.5h1.2v1.2h-1.2zM38.4 142.1h1.2v1.2h-1.2zM29.3 157.2h1.2v1.2h-1.2zM21.2 182.1h1.2v1.2h-1.2zM34.5 144.3h1.2v1.2h-1.2zM17.9 191.6h1.2v1.2h-1.2zM25.2 174.1h1.2v1.2h-1.2zM55.3 121.8h1.2v1.2h-1.2zM34.8 149.4h1.2v1.2h-1.2zM14.7 192.2h1.2v1.2h-1.2zM18.2 171.8h1.2v1.2h-1.2zM30.7 157.3h1.2v1.2h-1.2zM17.9 185.5h1.2v1.2h-1.2zM24.8 167.3h1.2v1.2h-1.2zM33.7 154.7h1.2v1.2h-1.2zM24.9 192.0h1.2v1.2h-1.2zM22.4 183.4h1.2v1.2h-1.2zM15.5 193.1h1.2v1.2h-1.2zM19.1 175.3h1.2v1.2h-1.2zM23.9 173.9h1.2v1.2h-1.2zM35.2 164.3h1.2v1.2h-1.2zM37.2 144.8h1.2v1.2h-1.2zM23.7 184.3h1.2v1.2h-1.2zM69.5 114.1h1.2v1.2h-1.2zM20.0 184.1h1.2v1.2h-1.2zM30.3 155.9h1.2v1.2h-1.2zM20.2 190.7h1.2v1.2h-1.2zM55.4 122.5h1.2v1.2h-1.2zM14.8 193.7h1.2v1.2h-1.2zM40.5 137.3h1.2v1.2h-1.2zM16.9 188.4h1.2v1.2h-1.2zM30.0 159.8h1.2v1.2h-1.2zM35.4 149.1h1.2v1.2h-1.2zM15.6 195.5h1.2v1.2h-1.2zM44.3 133.1h1.2v1.2h-1.2zM18.7 204.4h1.2v1.2h-1.2zM21.7 190.8h1.2v1.2h-1.2zM19.5 200.2h1.2v1.2h-1.2zM19.6 182.6h1.2v1.2h-1.2zM22.2 173.6h1.2v1.2h-1.2zM21.9 197.8h1.2v1.2h-1.2zM17.2 185.7h1.2v1.2h-1.2zM46.6 133.4h1.2v1.2h-1.2zM32.2 160.6h1.2v1.2h-1.2zM20.6 202.9h1.2v1.2h-1.2zM18.0 185.5h1.2v1.2h-1.2zM17.5 186.4h1.2v1.2h-1.2zM40.7 151.8h1.2v1.2h-1.2zM25.1 170.4h1.2v1.2h-1.2zM21.7 173.0h1.2v1.2h-1.2zM39.0 148.9h1.2v1.2h-1.2zM34.0 154.7h1.2v1.2h-1.2zM18.6 189.8h1.2v1.2h-1.2zM23.6 189.8h1.2v1.2h-1.2zM34.4 163.2h1.2v1.2h-1.2zM54.4 125.8h1.2v1.2h-1.2zM29.9 158.2h1.2v1.2h-1.2zM15.2 191.8h1.2v1.2h-1.2zM30.6 154.8h1.2v1.2h-1.2zM22.8 176.2h1.2v1.2h-1.2zM21.9 192.5h1.2v1.2h-1.2zM17.9 182.5h1.2v1.2h-1.2zM19.3 186.3h1.2v1.2h-1.2zM28.5 150.8h1.2v1.2h-1.2zM16.5 177.3h1.2v1.2h-1.2zM27.0 156.2h1.2v1.2h-1.2zM32.1 137.7h1.2v1.2h-1.2zM54.3 130.0h1.2v1.2h-1.2zM28.6 152.8h1.2v1.2h-1.2zM26.9 186.3h1.2v1.2h-1.2zM19.4 194.3h1.2v1.2h-1.2zM22.9 190.2h1.2v1.2h-1.2zM21.3 190.9h1.2v1.2h-1.2zM25.5 158.4h1.2v1.2h-1.2zM25.1 167.7h1.2v1.2h-1.2zM53.9 124.4h1.2v1.2h-1.2zM30.4 175.9h1.2v1.2h-1.2zM45.9 128.2h1.2v1.2h-1.2zM19.0 191.1h1.2v1.2h-1.2zM35.2 149.4h1.2v1.2h-1.2zM34.4 148.5h1.2v1.2h-1.2zM39.9 138.2h1.2v1.2h-1.2zM19.8 191.4h1.2v1.2h-1.2zM24.8 185.8h1.2v1.2h-1.2zM14.9 189.4h1.2v1.2h-1.2zM19.7 189.7h1.2v1.2h-1.2zM22.3 185.0h1.2v1.2h-1.2zM46.4 136.9h1.2v1.2h-1.2zM41.8 136.2h1.2v1.2h-1.2zM16.0 203.5h1.2v1.2h-1.2zM24.3 200.0h1.2v1.2h-1.2zM23.5 183.2h1.2v1.2h-1.2zM32.9 156.3h1.2v1.2h-1.2zM23.3 176.5h1.2v1.2h-1.2zM40.4 153.1h1.2v1.2h-1.2zM15.7 201.2h1.2v1.2h-1.2zM49.7 126.0h1.2v1.2h-1.2zM22.3 189.9h1.2v1.2h-1.2zM35.7 148.0h1.2v1.2h-1.2zM22.6 188.3h1.2v1.2h-1.2zM49.8 126.0h1.2v1.2h-1.2zM42.4 134.5h1.2v1.2h-1.2zM19.5 197.6h1.2v1.2h-1.2zM28.8 198.8h1.2v1.2h-1.2zM27.3 203.8h1.2v1.2h-1.2zM15.6 191.3h1.2v1.2h-1.2zM26.4 154.9h1.2v1.2h-1.2zM23.8 181.5h1.2v1.2h-1.2zM27.8 168.7h1.2v1.2h-1.2zM25.2 172.8h1.2v1.2h-1.2zM18.9 188.0h1.2v1.2h-1.2zM14.7 186.5h1.2v1.2h-1.2zM32.8 154.8h1.2v1.2h-1.2zM18.8 204.3h1.2v1.2h-1.2zM33.1 166.8h1.2v1.2h-1.2zM30.1 143.7h1.2v1.2h-1.2zM28.3 156.2h1.2v1.2h-1.2zM26.7 162.4h1.2v1.2h-1.2zM35.2 150.3h1.2v1.2h-1.2zM30.3 162.4h1.2v1.2h-1.2zM19.8 163.4h1.2v1.2h-1.2zM26.7 164.2h1.2v1.2h-1.2zM28.7 159.0h1.2v1.2h-1.2zM17.1 171.9h1.2v1.2h-1.2zM21.4 178.9h1.2v1.2h-1.2zM57.2 122.6h1.2v1.2h-1.2zM32.5 162.5h1.2v1.2h-1.2zM13.2 194.6h1.2v1.2h-1.2zM20.2 186.7h1.2v1.2h-1.2zM20.6 196.6h1.2v1.2h-1.2zM19.1 180.2h1.2v1.2h-1.2zM34.6 157.6h1.2v1.2h-1.2zM24.5 162.6h1.2v1.2h-1.2zM18.9 192.8h1.2v1.2h-1.2zM21.0 183.4h1.2v1.2h-1.2zM26.8 172.6h1.2v1.2h-1.2zM66.3 116.1h1.2v1.2h-1.2zM51.8 123.4h1.2v1.2h-1.2zM13.5 190.0h1.2v1.2h-1.2zM27.9 161.7h1.2v1.2h-1.2zM15.7 188.4h1.2v1.2h-1.2zM20.5 178.7h1.2v1.2h-1.2zM43.5 135.1h1.2v1.2h-1.2zM19.4 185.8h1.2v1.2h-1.2zM19.2 181.5h1.2v1.2h-1.2zM21.7 185.9h1.2v1.2h-1.2zM43.7 137.2h1.2v1.2h-1.2zM62.0 117.7h1.2v1.2h-1.2zM29.7 153.1h1.2v1.2h-1.2zM39.0 134.8h1.2v1.2h-1.2zM36.4 146.5h1.2v1.2h-1.2zM17.6 189.0h1.2v1.2h-1.2zM34.0 150.6h1.2v1.2h-1.2zM19.1 181.0h1.2v1.2h-1.2zM22.8 171.6h1.2v1.2h-1.2zM53.5 126.3h1.2v1.2h-1.2zM22.1 186.0h1.2v1.2h-1.2zM42.1 143.2h1.2v1.2h-1.2zM21.6 201.1h1.2v1.2h-1.2zM50.6 123.7h1.2v1.2h-1.2zM15.0 200.1h1.2v1.2h-1.2zM21.3 185.5h1.2v1.2h-1.2zM27.0 168.3h1.2v1.2h-1.2zM19.0 193.2h1.2v1.2h-1.2zM24.6 181.9h1.2v1.2h-1.2zM18.9 181.5h1.2v1.2h-1.2zM22.0 200.1h1.2v1.2h-1.2zM47.6 120.8h1.2v1.2h-1.2zM46.0 128.9h1.2v1.2h-1.2zM16.0 201.4h1.2v1.2h-1.2zM18.1 184.0h1.2v1.2h-1.2zM17.2 189.7h1.2v1.2h-1.2zM14.4 203.3h1.2v1.2h-1.2zM30.3 155.4h1.2v1.2h-1.2zM19.6 185.5h1.2v1.2h-1.2zM24.7 172.5h1.2v1.2h-1.2zM42.1 139.2h1.2v1.2h-1.2zM16.3 182.8h1.2v1.2h-1.2zM26.0 168.6h1.2v1.2h-1.2zM22.4 183.4h1.2v1.2h-1.2zM21.9 172.0h1.2v1.2h-1.2zM33.8 151.7h1.2v1.2h-1.2zM45.1 130.6h1.2v1.2h-1.2zM22.9 181.7h1.2v1.2h-1.2zM51.3 124.6h1.2v1.2h-1.2zM24.7 174.1h1.2v1.2h-1.2zM41.5 136.9h1.2v1.2h-1.2zM19.1 198.7h1.2v1.2h-1.2zM29.0 167.0h1.2v1.2h-1.2zM22.2 188.9h1.2v1.2h-1.2zM20.6 190.5h1.2v1.2h-1.2zM13.0 187.6h1.2v1.2h-1.2zM14.2 194.9h1.2v1.2h-1.2zM23.2 183.4h1.2v1.2h-1.2zM16.8 204.5h1.2v1.2h-1.2zM19.0 191.0h1.2v1.2h-1.2zM22.5 196.2h1.2v1.2h-1.2zM45.5 134.9h1.2v1.2h-1.2zM45.8 133.1h1.2v1.2h-1.2zM27.3 187.2h1.2v1.2h-1.2zM60.3 119.8h1.2v1.2h-1.2zM35.3 144.7h1.2v1.2h-1.2zM23.4 177.8h1.2v1.2h-1.2zM21.7 179.3h1.2v1.2h-1.2zM23.5 188.4h1.2v1.2h-1.2zM33.3 157.7h1.2v1.2h-1.2zM20.3 189.1h1.2v1.2h-1.2zM16.1 192.2h1.2v1.2h-1.2zM24.5 201.8h1.2v1.2h-1.2zM44.0 142.5h1.2v1.2h-1.2zM19.3 191.4h1.2v1.2h-1.2zM13.5 185.9h1.2v1.2h-1.2zM15.7 178.0h1.2v1.2h-1.2zM18.9 188.7h1.2v1.2h-1.2zM17.3 183.3h1.2v1.2h-1.2zM37.1 142.9h1.2v1.2h-1.2zM26.3 162.0h1.2v1.2h-1.2zM32.7 152.8h1.2v1.2h-1.2zM15.6 195.4h1.2v1.2h-1.2zM23.3 188.3h1.2v1.2h-1.2zM17.2 190.9h1.2v1.2h-1.2zM39.2 144.7h1.2v1.2h-1.2zM19.4 204.2h1.2v1.2h-1.2zM50.7 123.1h1.2v1.2h-1.2zM30.4 154.2h1.2v1.2h-1.2zM28.6 162.9h1.2v1.2h-1.2zM20.3 202.9h1.2v1.2h-1.2zM18.2 187.0h1.2v1.2h-1.2zM18.6 185.9h1.2v1.2h-1.2zM22.5 163.2h1.2v1.2h-1.2zM31.7 152.4h1.2v1.2h-1.2zM19.9 200.7h1.2v1.2h-1.2zM34.8 155.2h1.2v1.2h-1.2zM24.0 174.2h1.2v1.2h-1.2zM30.5 161.0h1.2v1.2h-1.2zM35.6 145.4h1.2v1.2h-1.2zM22.5 177.5h1.2v1.2h-1.2zM51.3 129.9h1.2v1.2h-1.2zM27.6 181.0h1.2v1.2h-1.2zM56.7 122.9h1.2v1.2h-1.2zM33.4 156.9h1.2v1.2h-1.2zM43.3 132.5h1.2v1.2h-1.2zM18.3 190.3h1.2v1.2h-1.2zM19.4 194.8h1.2v1.2h-1.2zM17.3 195.9h1.2v1.2h-1.2zM61.8 121.3h1.2v1.2h-1.2zM38.9 137.3h1.2v1.2h-1.2zM19.2 166.0h1.2v1.2h-1.2zM41.2 135.8h1.2v1.2h-1.2zM15.6 184.7h1.2v1.2h-1.2zM34.2 138.8h1.2v1.2h-1.2zM33.6 157.3h1.2v1.2h-1.2zM27.4 162.0h1.2v1.2h-1.2zM34.9 138.2h1.2v1.2h-1.2zM18.9 194.6h1.2v1.2h-1.2zM47.5 140.6h1.2v1.2h-1.2zM16.0 184.9h1.2v1.2h-1.2zM71.1 113.6h1.2v1.2h-1.2zM29.0 166.8h1.2v1.2h-1.2zM22.1 185.3h1.2v1.2h-1.2zM23.0 168.0h1.2v1.2h-1.2zM17.0 184.0h1.2v1.2h-1.2zM15.3 193.4h1.2v1.2h-1.2zM24.5 171.2h1.2v1.2h-1.2zM18.8 195.2h1.2v1.2h-1.2zM23.9 177.3h1.2v1.2h-1.2zM21.0 184.1h1.2v1.2h-1.2zM31.2 155.6h1.2v1.2h-1.2zM21.5 188.6h1.2v1.2h-1.2zM58.8 129.0h1.2v1.2h-1.2zM18.7 194.7h1.2v1.2h-1.2zM40.8 133.8h1.2v1.2h-1.2zM28.8 174.2h1.2v1.2h-1.2zM14.2 194.6h1.2v1.2h-1.2zM17.5 192.1h1.2v1.2h-1.2zM21.5 183.5h1.2v1.2h-1.2zM22.4 175.7h1.2v1.2h-1.2zM21.9 194.8h1.2v1.2h-1.2zM35.6 164.8h1.2v1.2h-1.2zM22.0 172.7h1.2v1.2h-1.2zM30.9 165.3h1.2v1.2h-1.2zM25.0 175.4h1.2v1.2h-1.2zM18.5 201.2h1.2v1.2h-1.2zM22.3 168.1h1.2v1.2h-1.2zM27.5 162.3h1.2v1.2h-1.2zM29.6 158.0h1.2v1.2h-1.2zM39.9 133.1h1.2v1.2h-1.2zM23.0 169.6h1.2v1.2h-1.2zM21.3 181.5h1.2v1.2h-1.2zM18.6 190.4h1.2v1.2h-1.2zM27.8 186.4h1.2v1.2h-1.2zM35.4 148.7h1.2v1.2h-1.2zM31.0 151.6h1.2v1.2h-1.2zM25.2 184.7h1.2v1.2h-1.2zM33.5 145.0h1.2v1.2h-1.2zM14.8 189.1h1.2v1.2h-1.2zM50.4 125.9h1.2v1.2h-1.2zM18.7 182.5h1.2v1.2h-1.2zM16.3 190.1h1.2v1.2h-1.2zM26.4 160.4h1.2v1.2h-1.2zM34.8 136.9h1.2v1.2h-1.2zM20.4 172.1h1.2v1.2h-1.2zM22.7 183.0h1.2v1.2h-1.2zM21.7 179.7h1.2v1.2h-1.2zM16.2 196.0h1.2v1.2h-1.2zM44.8 134.4h1.2v1.2h-1.2zM31.4 160.8h1.2v1.2h-1.2zM17.8 173.3h1.2v1.2h-1.2zM23.5 176.9h1.2v1.2h-1.2zM17.9 181.0h1.2v1.2h-1.2zM19.2 193.9h1.2v1.2h-1.2zM46.6 134.0h1.2v1.2h-1.2zM26.8 154.8h1.2v1.2h-1.2zM42.5 134.6h1.2v1.2h-1.2zM25.3 178.7h1.2v1.2h-1.2zM18.6 191.0h1.2v1.2h-1.2zM20.5 178.0h1.2v1.2h-1.2zM58.3 127.3h1.2v1.2h-1.2zM19.2 197.1h1.2v1.2h-1.2zM27.8 169.4h1.2v1.2h-1.2zM30.1 171.1h1.2v1.2h-1.2zM20.3 189.7h1.2v1.2h-1.2zM27.7 156.7h1.2v1.2h-1.2zM25.6 193.4h1.2v1.2h-1.2zM18.2 183.0h1.2v1.2h-1.2zM14.5 198.5h1.2v1.2h-1.2zM26.9 159.8h1.2v1.2h-1.2zM26.1 177.6h1.2v1.2h-1.2zM29.2 157.7h1.2v1.2h-1.2zM18.8 202.4h1.2v1.2h-1.2z" fill="#33b0b0" fill-opacity="0.5"/></g><path d="M34.5 148.1h0.9v0.9h-0.9zM47.5 163.2h0.9v0.9h-0.9zM23.8 172.0h0.9v0.9h-0.9zM76.3 135.8h0.9v0.9h-0.9zM113.9 140.0h0.9v0.9h-0.9zM110.8 112.4h0.9v0.9h-0.9zM88.9 152.1h0.9v0.9h-0.9zM120.0 122.5h0.9v0.9h-0.9zM86.2 109.1h0.9v0.9h-0.9zM103.0 89.0h0.9v0.9h-0.9zM137.1 96.3h0.9v0.9h-0.9zM85.6 86.6h0.9v0.9h-0.9zM91.4 100.3h0.9v0.9h-0.9zM77.7 127.0h0.9v0.9h-0.9zM68.6 131.4h0.9v0.9h-0.9zM64.4 150.7h0.9v0.9h-0.9zM94.3 103.6h0.9v0.9h-0.9zM34.5 159.8h0.9v0.9h-0.9zM71.6 142.5h0.9v0.9h-0.9zM124.1 90.0h0.9v0.9h-0.9zM71.5 144.6h0.9v0.9h-0.9zM111.6 128.2h0.9v0.9h-0.9zM42.9 145.5h0.9v0.9h-0.9zM104.7 97.5h0.9v0.9h-0.9zM117.5 125.6h0.9v0.9h-0.9zM89.3 106.0h0.9v0.9h-0.9zM72.0 105.2h0.9v0.9h-0.9zM115.2 103.4h0.9v0.9h-0.9zM41.5 130.1h0.9v0.9h-0.9zM143.0 93.1h0.9v0.9h-0.9zM45.2 156.0h0.9v0.9h-0.9zM115.2 117.8h0.9v0.9h-0.9zM77.8 137.4h0.9v0.9h-0.9zM118.8 61.7h0.9v0.9h-0.9zM135.5 84.7h0.9v0.9h-0.9zM87.2 134.6h0.9v0.9h-0.9zM67.6 107.7h0.9v0.9h-0.9zM49.3 155.8h0.9v0.9h-0.9zM89.8 97.3h0.9v0.9h-0.9zM67.6 111.7h0.9v0.9h-0.9zM105.9 124.9h0.9v0.9h-0.9zM31.2 168.6h0.9v0.9h-0.9zM32.9 136.1h0.9v0.9h-0.9zM80.2 129.7h0.9v0.9h-0.9zM29.5 143.4h0.9v0.9h-0.9zM46.2 162.8h0.9v0.9h-0.9zM70.0 181.7h0.9v0.9h-0.9zM53.2 132.2h0.9v0.9h-0.9zM130.5 106.2h0.9v0.9h-0.9zM60.4 115.4h0.9v0.9h-0.9zM96.9 106.4h0.9v0.9h-0.9zM69.6 145.3h0.9v0.9h-0.9zM108.6 118.1h0.9v0.9h-0.9zM153.9 105.5h0.9v0.9h-0.9zM127.6 105.0h0.9v0.9h-0.9zM76.3 142.5h0.9v0.9h-0.9zM48.9 143.0h0.9v0.9h-0.9zM129.9 99.7h0.9v0.9h-0.9zM81.0 130.9h0.9v0.9h-0.9zM47.1 167.3h0.9v0.9h-0.9zM58.8 177.2h0.9v0.9h-0.9zM113.2 96.8h0.9v0.9h-0.9zM138.8 94.9h0.9v0.9h-0.9zM47.0 168.6h0.9v0.9h-0.9zM70.1 144.8h0.9v0.9h-0.9zM100.7 126.8h0.9v0.9h-0.9zM79.6 132.7h0.9v0.9h-0.9zM44.5 157.5h0.9v0.9h-0.9zM67.1 123.4h0.9v0.9h-0.9zM134.0 74.9h0.9v0.9h-0.9zM43.4 157.8h0.9v0.9h-0.9zM49.7 127.6h0.9v0.9h-0.9zM65.7 126.2h0.9v0.9h-0.9zM56.3 175.8h0.9v0.9h-0.9zM81.1 148.2h0.9v0.9h-0.9zM70.2 105.6h0.9v0.9h-0.9zM20.7 161.0h0.9v0.9h-0.9zM77.3 130.0h0.9v0.9h-0.9zM79.4 114.1h0.9v0.9h-0.9zM59.4 136.9h0.9v0.9h-0.9zM51.4 164.9h0.9v0.9h-0.9zM100.4 151.5h0.9v0.9h-0.9zM84.9 149.0h0.9v0.9h-0.9zM33.2 133.4h0.9v0.9h-0.9zM105.6 84.1h0.9v0.9h-0.9zM131.0 92.1h0.9v0.9h-0.9zM54.2 165.7h0.9v0.9h-0.9zM98.2 115.0h0.9v0.9h-0.9zM85.8 120.5h0.9v0.9h-0.9zM34.4 166.3h0.9v0.9h-0.9zM27.3 180.3h0.9v0.9h-0.9zM81.2 126.3h0.9v0.9h-0.9zM110.2 120.6h0.9v0.9h-0.9zM75.8 117.7h0.9v0.9h-0.9zM33.8 152.7h0.9v0.9h-0.9zM62.5 135.2h0.9v0.9h-0.9zM112.6 121.3h0.9v0.9h-0.9zM65.3 159.1h0.9v0.9h-0.9zM65.4 142.1h0.9v0.9h-0.9zM97.2 127.9h0.9v0.9h-0.9zM110.0 136.2h0.9v0.9h-0.9zM71.2 159.5h0.9v0.9h-0.9zM89.0 112.6h0.9v0.9h-0.9zM80.1 117.5h0.9v0.9h-0.9zM88.9 115.2h0.9v0.9h-0.9zM45.9 159.4h0.9v0.9h-0.9zM96.2 96.1h0.9v0.9h-0.9zM105.0 74.8h0.9v0.9h-0.9zM70.1 131.5h0.9v0.9h-0.9zM93.1 120.1h0.9v0.9h-0.9zM137.3 99.0h0.9v0.9h-0.9zM130.3 84.7h0.9v0.9h-0.9zM106.6 110.8h0.9v0.9h-0.9zM93.5 111.3h0.9v0.9h-0.9zM107.1 111.0h0.9v0.9h-0.9zM126.9 81.2h0.9v0.9h-0.9zM58.5 136.7h0.9v0.9h-0.9zM51.5 154.5h0.9v0.9h-0.9zM23.1 179.1h0.9v0.9h-0.9zM108.8 114.8h0.9v0.9h-0.9zM129.7 97.9h0.9v0.9h-0.9zM113.5 104.1h0.9v0.9h-0.9zM107.3 78.8h0.9v0.9h-0.9zM44.9 144.7h0.9v0.9h-0.9zM51.3 168.2h0.9v0.9h-0.9zM85.0 138.0h0.9v0.9h-0.9zM113.4 79.6h0.9v0.9h-0.9zM84.1 114.0h0.9v0.9h-0.9zM115.8 87.4h0.9v0.9h-0.9zM86.6 129.0h0.9v0.9h-0.9zM76.2 136.3h0.9v0.9h-0.9zM130.9 91.4h0.9v0.9h-0.9zM88.2 115.9h0.9v0.9h-0.9zM86.5 131.7h0.9v0.9h-0.9zM61.3 121.7h0.9v0.9h-0.9zM41.8 156.7h0.9v0.9h-0.9zM90.1 105.1h0.9v0.9h-0.9zM46.6 159.4h0.9v0.9h-0.9zM122.1 75.7h0.9v0.9h-0.9zM139.5 131.3h0.9v0.9h-0.9zM36.1 141.5h0.9v0.9h-0.9zM85.8 147.5h0.9v0.9h-0.9zM125.9 68.2h0.9v0.9h-0.9zM121.6 99.7h0.9v0.9h-0.9zM45.0 173.7h0.9v0.9h-0.9zM106.3 78.2h0.9v0.9h-0.9zM83.1 116.7h0.9v0.9h-0.9zM89.9 133.5h0.9v0.9h-0.9zM91.5 141.9h0.9v0.9h-0.9zM88.0 156.4h0.9v0.9h-0.9zM85.1 133.4h0.9v0.9h-0.9zM24.6 143.4h0.9v0.9h-0.9zM32.2 187.5h0.9v0.9h-0.9zM110.7 79.0h0.9v0.9h-0.9zM127.7 79.4h0.9v0.9h-0.9zM88.7 129.1h0.9v0.9h-0.9zM115.7 78.4h0.9v0.9h-0.9zM61.7 163.9h0.9v0.9h-0.9zM99.1 104.0h0.9v0.9h-0.9zM109.6 91.7h0.9v0.9h-0.9zM92.3 89.4h0.9v0.9h-0.9zM64.1 153.4h0.9v0.9h-0.9zM85.7 105.9h0.9v0.9h-0.9zM35.7 172.7h0.9v0.9h-0.9zM53.1 190.9h0.9v0.9h-0.9zM57.8 147.3h0.9v0.9h-0.9zM84.1 132.1h0.9v0.9h-0.9zM61.6 130.8h0.9v0.9h-0.9zM71.5 169.8h0.9v0.9h-0.9zM137.1 122.3h0.9v0.9h-0.9zM113.9 100.1h0.9v0.9h-0.9zM68.2 136.9h0.9v0.9h-0.9zM49.2 162.5h0.9v0.9h-0.9zM83.2 139.6h0.9v0.9h-0.9zM89.2 117.3h0.9v0.9h-0.9zM44.5 149.9h0.9v0.9h-0.9zM55.6 148.6h0.9v0.9h-0.9zM58.9 162.1h0.9v0.9h-0.9zM77.1 134.5h0.9v0.9h-0.9zM96.4 121.2h0.9v0.9h-0.9zM75.6 155.5h0.9v0.9h-0.9zM84.5 122.1h0.9v0.9h-0.9zM90.9 146.0h0.9v0.9h-0.9zM42.5 135.7h0.9v0.9h-0.9zM82.1 145.1h0.9v0.9h-0.9zM119.6 83.6h0.9v0.9h-0.9zM42.8 138.1h0.9v0.9h-0.9zM101.4 119.7h0.9v0.9h-0.9zM44.8 156.7h0.9v0.9h-0.9zM128.1 74.6h0.9v0.9h-0.9zM86.9 145.6h0.9v0.9h-0.9zM100.7 109.6h0.9v0.9h-0.9zM127.5 97.3h0.9v0.9h-0.9zM28.6 145.0h0.9v0.9h-0.9zM88.5 75.0h0.9v0.9h-0.9zM43.3 193.1h0.9v0.9h-0.9zM65.2 137.0h0.9v0.9h-0.9zM61.9 159.6h0.9v0.9h-0.9zM44.1 177.6h0.9v0.9h-0.9zM137.9 62.5h0.9v0.9h-0.9zM24.0 188.7h0.9v0.9h-0.9zM111.3 106.4h0.9v0.9h-0.9zM69.9 121.4h0.9v0.9h-0.9zM78.9 144.6h0.9v0.9h-0.9zM141.8 123.7h0.9v0.9h-0.9zM116.8 92.2h0.9v0.9h-0.9zM112.9 104.1h0.9v0.9h-0.9zM21.7 182.6h0.9v0.9h-0.9zM133.2 115.0h0.9v0.9h-0.9zM58.4 138.9h0.9v0.9h-0.9zM123.8 105.8h0.9v0.9h-0.9zM21.4 194.3h0.9v0.9h-0.9zM86.8 103.8h0.9v0.9h-0.9zM95.9 107.1h0.9v0.9h-0.9zM31.7 152.8h0.9v0.9h-0.9zM105.8 115.4h0.9v0.9h-0.9zM110.1 117.2h0.9v0.9h-0.9zM110.9 85.4h0.9v0.9h-0.9zM65.1 151.3h0.9v0.9h-0.9zM105.9 101.8h0.9v0.9h-0.9zM23.0 141.1h0.9v0.9h-0.9zM59.9 173.9h0.9v0.9h-0.9zM152.1 105.4h0.9v0.9h-0.9zM82.7 111.5h0.9v0.9h-0.9zM58.6 156.9h0.9v0.9h-0.9zM41.0 176.3h0.9v0.9h-0.9zM33.6 161.6h0.9v0.9h-0.9zM68.7 145.1h0.9v0.9h-0.9zM74.7 121.5h0.9v0.9h-0.9zM59.9 157.8h0.9v0.9h-0.9zM53.7 169.9h0.9v0.9h-0.9zM63.6 129.5h0.9v0.9h-0.9zM117.3 123.0h0.9v0.9h-0.9zM77.1 158.0h0.9v0.9h-0.9zM37.0 150.2h0.9v0.9h-0.9zM30.9 128.9h0.9v0.9h-0.9zM139.6 104.4h0.9v0.9h-0.9zM110.0 95.6h0.9v0.9h-0.9zM52.6 159.9h0.9v0.9h-0.9zM126.5 92.4h0.9v0.9h-0.9zM63.0 179.8h0.9v0.9h-0.9zM63.3 151.7h0.9v0.9h-0.9zM42.0 148.0h0.9v0.9h-0.9zM90.0 110.6h0.9v0.9h-0.9zM46.6 164.3h0.9v0.9h-0.9zM64.3 117.1h0.9v0.9h-0.9zM61.3 136.6h0.9v0.9h-0.9zM101.1 140.3h0.9v0.9h-0.9zM80.2 142.1h0.9v0.9h-0.9zM80.1 157.4h0.9v0.9h-0.9zM150.5 123.3h0.9v0.9h-0.9zM99.9 105.1h0.9v0.9h-0.9zM124.5 99.8h0.9v0.9h-0.9zM37.6 156.0h0.9v0.9h-0.9zM119.7 104.3h0.9v0.9h-0.9zM116.2 94.1h0.9v0.9h-0.9zM73.3 122.4h0.9v0.9h-0.9zM38.8 158.7h0.9v0.9h-0.9zM57.5 184.4h0.9v0.9h-0.9zM65.3 158.0h0.9v0.9h-0.9zM60.1 116.9h0.9v0.9h-0.9zM66.2 121.6h0.9v0.9h-0.9zM75.2 138.0h0.9v0.9h-0.9zM59.2 141.4h0.9v0.9h-0.9zM78.7 143.2h0.9v0.9h-0.9zM46.8 153.0h0.9v0.9h-0.9zM23.4 154.9h0.9v0.9h-0.9zM58.1 146.8h0.9v0.9h-0.9zM44.6 128.7h0.9v0.9h-0.9zM150.8 125.6h0.9v0.9h-0.9zM73.2 156.1h0.9v0.9h-0.9zM45.7 192.2h0.9v0.9h-0.9zM35.1 150.5h0.9v0.9h-0.9zM43.5 135.7h0.9v0.9h-0.9zM66.8 129.6h0.9v0.9h-0.9zM115.9 162.9h0.9v0.9h-0.9zM47.8 193.8h0.9v0.9h-0.9zM119.9 114.6h0.9v0.9h-0.9zM95.3 121.8h0.9v0.9h-0.9zM90.0 132.4h0.9v0.9h-0.9zM97.3 112.1h0.9v0.9h-0.9zM108.2 90.4h0.9v0.9h-0.9zM116.4 105.8h0.9v0.9h-0.9zM55.2 134.4h0.9v0.9h-0.9zM23.1 161.0h0.9v0.9h-0.9zM154.5 84.1h0.9v0.9h-0.9zM45.7 179.1h0.9v0.9h-0.9zM19.7 174.7h0.9v0.9h-0.9zM153.2 82.9h0.9v0.9h-0.9zM68.9 159.5h0.9v0.9h-0.9zM98.2 119.8h0.9v0.9h-0.9zM46.4 157.4h0.9v0.9h-0.9zM87.8 108.7h0.9v0.9h-0.9zM21.0 156.5h0.9v0.9h-0.9zM108.1 117.7h0.9v0.9h-0.9zM105.0 122.6h0.9v0.9h-0.9zM62.2 114.0h0.9v0.9h-0.9zM64.8 142.7h0.9v0.9h-0.9zM122.2 94.3h0.9v0.9h-0.9zM112.5 85.8h0.9v0.9h-0.9zM79.8 155.3h0.9v0.9h-0.9zM76.9 114.2h0.9v0.9h-0.9zM39.7 149.0h0.9v0.9h-0.9zM91.4 107.5h0.9v0.9h-0.9zM124.5 64.6h0.9v0.9h-0.9zM70.0 139.2h0.9v0.9h-0.9zM124.2 88.5h0.9v0.9h-0.9zM72.6 106.6h0.9v0.9h-0.9zM60.6 155.8h0.9v0.9h-0.9zM34.2 144.2h0.9v0.9h-0.9zM114.0 111.8h0.9v0.9h-0.9zM61.1 127.0h0.9v0.9h-0.9zM110.0 99.9h0.9v0.9h-0.9zM48.1 169.6h0.9v0.9h-0.9zM115.7 108.8h0.9v0.9h-0.9zM56.7 146.7h0.9v0.9h-0.9zM50.3 136.7h0.9v0.9h-0.9zM81.6 133.6h0.9v0.9h-0.9zM134.4 90.8h0.9v0.9h-0.9zM94.7 133.8h0.9v0.9h-0.9zM50.3 160.9h0.9v0.9h-0.9zM103.7 58.6h0.9v0.9h-0.9zM109.3 102.8h0.9v0.9h-0.9zM107.7 115.2h0.9v0.9h-0.9zM99.1 110.1h0.9v0.9h-0.9zM139.7 84.7h0.9v0.9h-0.9zM32.2 169.8h0.9v0.9h-0.9zM74.8 130.5h0.9v0.9h-0.9zM109.4 121.6h0.9v0.9h-0.9zM115.6 108.6h0.9v0.9h-0.9zM91.4 99.8h0.9v0.9h-0.9zM121.5 88.0h0.9v0.9h-0.9zM71.8 124.8h0.9v0.9h-0.9zM17.3 137.0h0.9v0.9h-0.9zM117.4 114.3h0.9v0.9h-0.9zM25.9 141.2h0.9v0.9h-0.9zM93.8 127.1h0.9v0.9h-0.9zM96.5 96.8h0.9v0.9h-0.9zM38.4 175.3h0.9v0.9h-0.9zM123.0 93.9h0.9v0.9h-0.9zM113.1 117.4h0.9v0.9h-0.9zM129.1 88.5h0.9v0.9h-0.9zM82.1 131.6h0.9v0.9h-0.9zM111.0 120.8h0.9v0.9h-0.9zM28.4 157.4h0.9v0.9h-0.9zM57.1 169.8h0.9v0.9h-0.9zM54.9 131.4h0.9v0.9h-0.9zM20.2 161.4h0.9v0.9h-0.9zM54.3 156.7h0.9v0.9h-0.9zM113.0 89.5h0.9v0.9h-0.9zM77.4 143.0h0.9v0.9h-0.9zM102.7 109.2h0.9v0.9h-0.9zM123.5 111.8h0.9v0.9h-0.9zM85.9 142.1h0.9v0.9h-0.9zM105.3 74.6h0.9v0.9h-0.9zM124.5 90.6h0.9v0.9h-0.9zM38.3 176.3h0.9v0.9h-0.9z" fill="#2a8a8a" fill-opacity="0.4"/><path d="M65.5 35.1h1.1v1.1h-1.1zM67.8 36.9h1.1v1.1h-1.1zM208.2 28.2h1.1v1.1h-1.1zM179.0 33.6h1.1v1.1h-1.1zM164.7 30.1h1.1v1.1h-1.1zM66.4 33.3h1.1v1.1h-1.1zM120.3 36.0h1.1v1.1h-1.1zM80.7 34.7h1.1v1.1h-1.1zM207.7 40.1h1.1v1.1h-1.1zM113.0 37.1h1.1v1.1h-1.1zM74.0 34.1h1.1v1.1h-1.1zM68.2 34.9h1.1v1.1h-1.1zM134.2 33.3h1.1v1.1h-1.1zM73.5 35.4h1.1v1.1h-1.1zM67.9 33.8h1.1v1.1h-1.1zM83.4 34.3h1.1v1.1h-1.1zM71.2 35.2h1.1v1.1h-1.1zM71.5 31.6h1.1v1.1h-1.1zM137.2 34.9h1.1v1.1h-1.1zM149.3 34.7h1.1v1.1h-1.1zM82.7 34.7h1.1v1.1h-1.1zM90.2 33.0h1.1v1.1h-1.1zM205.3 36.2h1.1v1.1h-1.1zM66.9 38.2h1.1v1.1h-1.1zM70.8 35.1h1.1v1.1h-1.1zM167.5 31.5h1.1v1.1h-1.1zM97.8 34.5h1.1v1.1h-1.1zM74.6 34.9h1.1v1.1h-1.1zM141.9 35.6h1.1v1.1h-1.1zM155.9 34.6h1.1v1.1h-1.1zM67.5 36.5h1.1v1.1h-1.1zM118.5 37.7h1.1v1.1h-1.1zM64.8 32.0h1.1v1.1h-1.1zM160.3 31.9h1.1v1.1h-1.1zM67.1 36.9h1.1v1.1h-1.1zM215.3 40.0h1.1v1.1h-1.1zM80.5 32.6h1.1v1.1h-1.1zM206.8 39.1h1.1v1.1h-1.1zM163.7 34.7h1.1v1.1h-1.1zM73.8 35.9h1.1v1.1h-1.1zM80.8 35.1h1.1v1.1h-1.1zM66.2 38.1h1.1v1.1h-1.1zM68.3 35.5h1.1v1.1h-1.1zM87.0 36.3h1.1v1.1h-1.1zM118.3 35.2h1.1v1.1h-1.1zM174.6 43.2h1.1v1.1h-1.1zM70.9 36.6h1.1v1.1h-1.1zM150.5 41.0h1.1v1.1h-1.1zM67.9 33.1h1.1v1.1h-1.1zM66.0 31.4h1.1v1.1h-1.1zM69.4 34.6h1.1v1.1h-1.1zM94.5 32.4h1.1v1.1h-1.1zM116.0 31.8h1.1v1.1h-1.1zM173.4 41.1h1.1v1.1h-1.1zM78.7 37.4h1.1v1.1h-1.1zM66.6 36.4h1.1v1.1h-1.1zM82.8 33.6h1.1v1.1h-1.1zM145.7 35.8h1.1v1.1h-1.1zM69.2 37.4h1.1v1.1h-1.1zM68.4 34.4h1.1v1.1h-1.1zM71.6 34.3h1.1v1.1h-1.1zM66.5 34.1h1.1v1.1h-1.1zM193.3 31.7h1.1v1.1h-1.1zM67.9 36.9h1.1v1.1h-1.1zM78.3 33.1h1.1v1.1h-1.1zM80.6 30.8h1.1v1.1h-1.1zM65.8 36.2h1.1v1.1h-1.1zM159.9 32.3h1.1v1.1h-1.1zM72.8 33.8h1.1v1.1h-1.1zM174.2 35.8h1.1v1.1h-1.1zM183.7 29.5h1.1v1.1h-1.1zM66.8 35.3h1.1v1.1h-1.1zM64.5 37.6h1.1v1.1h-1.1zM173.6 30.8h1.1v1.1h-1.1zM79.3 36.5h1.1v1.1h-1.1zM87.9 36.2h1.1v1.1h-1.1zM164.0 22.6h1.1v1.1h-1.1zM146.0 32.5h1.1v1.1h-1.1zM203.4 35.7h1.1v1.1h-1.1zM74.4 32.2h1.1v1.1h-1.1zM140.2 34.0h1.1v1.1h-1.1zM70.0 36.6h1.1v1.1h-1.1zM157.0 39.8h1.1v1.1h-1.1zM201.7 43.0h1.1v1.1h-1.1zM101.6 38.1h1.1v1.1h-1.1zM72.6 35.7h1.1v1.1h-1.1zM130.4 32.8h1.1v1.1h-1.1zM184.8 30.7h1.1v1.1h-1.1zM68.1 37.9h1.1v1.1h-1.1zM123.6 33.5h1.1v1.1h-1.1zM120.1 34.4h1.1v1.1h-1.1zM66.1 35.6h1.1v1.1h-1.1zM97.4 40.0h1.1v1.1h-1.1zM72.1 36.7h1.1v1.1h-1.1zM76.3 32.3h1.1v1.1h-1.1zM198.4 30.7h1.1v1.1h-1.1zM109.1 37.1h1.1v1.1h-1.1zM124.7 34.2h1.1v1.1h-1.1zM83.2 34.1h1.1v1.1h-1.1zM79.4 35.9h1.1v1.1h-1.1zM198.3 35.3h1.1v1.1h-1.1zM107.5 34.6h1.1v1.1h-1.1zM69.5 39.1h1.1v1.1h-1.1zM67.0 37.1h1.1v1.1h-1.1zM82.9 39.4h1.1v1.1h-1.1zM164.3 33.3h1.1v1.1h-1.1zM70.8 36.1h1.1v1.1h-1.1zM68.2 37.3h1.1v1.1h-1.1zM68.4 38.1h1.1v1.1h-1.1zM88.8 34.9h1.1v1.1h-1.1zM71.0 35.0h1.1v1.1h-1.1zM104.1 39.2h1.1v1.1h-1.1zM113.3 38.7h1.1v1.1h-1.1zM67.7 34.1h1.1v1.1h-1.1zM215.5 30.9h1.1v1.1h-1.1zM85.7 34.5h1.1v1.1h-1.1zM71.4 36.3h1.1v1.1h-1.1zM71.0 38.3h1.1v1.1h-1.1zM67.2 33.2h1.1v1.1h-1.1zM182.4 31.5h1.1v1.1h-1.1zM71.7 33.2h1.1v1.1h-1.1zM89.8 37.5h1.1v1.1h-1.1zM66.6 32.5h1.1v1.1h-1.1zM72.7 35.1h1.1v1.1h-1.1zM95.5 34.2h1.1v1.1h-1.1zM184.8 40.6h1.1v1.1h-1.1zM153.9 31.6h1.1v1.1h-1.1zM63.4 34.4h1.1v1.1h-1.1zM69.2 35.9h1.1v1.1h-1.1zM68.3 33.1h1.1v1.1h-1.1zM76.8 34.3h1.1v1.1h-1.1zM81.6 33.6h1.1v1.1h-1.1zM74.9 35.2h1.1v1.1h-1.1zM148.6 28.1h1.1v1.1h-1.1zM71.7 38.5h1.1v1.1h-1.1zM70.1 35.0h1.1v1.1h-1.1zM212.3 34.7h1.1v1.1h-1.1zM215.6 31.6h1.1v1.1h-1.1zM144.8 36.0h1.1v1.1h-1.1zM150.8 37.0h1.1v1.1h-1.1zM66.2 34.7h1.1v1.1h-1.1zM81.6 31.0h1.1v1.1h-1.1zM69.1 34.1h1.1v1.1h-1.1zM66.6 33.3h1.1v1.1h-1.1zM165.6 41.3h1.1v1.1h-1.1zM118.4 37.1h1.1v1.1h-1.1zM66.7 35.5h1.1v1.1h-1.1zM70.6 37.7h1.1v1.1h-1.1zM133.8 33.9h1.1v1.1h-1.1zM70.2 36.3h1.1v1.1h-1.1zM90.4 34.4h1.1v1.1h-1.1zM175.4 33.0h1.1v1.1h-1.1zM71.0 35.0h1.1v1.1h-1.1zM66.3 35.8h1.1v1.1h-1.1zM69.7 33.9h1.1v1.1h-1.1zM67.3 32.7h1.1v1.1h-1.1zM144.3 32.5h1.1v1.1h-1.1zM68.1 37.9h1.1v1.1h-1.1zM67.6 38.9h1.1v1.1h-1.1zM123.5 38.6h1.1v1.1h-1.1zM64.0 37.3h1.1v1.1h-1.1zM164.2 35.6h1.1v1.1h-1.1zM69.6 39.2h1.1v1.1h-1.1zM168.2 36.0h1.1v1.1h-1.1zM100.9 35.2h1.1v1.1h-1.1zM73.8 37.0h1.1v1.1h-1.1zM67.9 34.5h1.1v1.1h-1.1zM69.0 34.2h1.1v1.1h-1.1zM67.8 36.4h1.1v1.1h-1.1zM119.8 39.5h1.1v1.1h-1.1zM70.2 35.6h1.1v1.1h-1.1zM65.1 39.5h1.1v1.1h-1.1zM69.5 34.6h1.1v1.1h-1.1zM74.4 34.1h1.1v1.1h-1.1zM66.2 36.5h1.1v1.1h-1.1zM136.5 33.4h1.1v1.1h-1.1zM118.0 36.6h1.1v1.1h-1.1zM66.9 35.3h1.1v1.1h-1.1zM73.8 36.9h1.1v1.1h-1.1zM69.9 34.0h1.1v1.1h-1.1zM110.2 38.8h1.1v1.1h-1.1zM67.9 38.8h1.1v1.1h-1.1zM111.5 32.0h1.1v1.1h-1.1zM67.6 36.9h1.1v1.1h-1.1zM67.3 37.5h1.1v1.1h-1.1zM145.5 33.4h1.1v1.1h-1.1zM70.7 37.9h1.1v1.1h-1.1zM94.0 32.7h1.1v1.1h-1.1zM83.4 36.1h1.1v1.1h-1.1zM65.9 34.4h1.1v1.1h-1.1zM92.1 36.7h1.1v1.1h-1.1zM72.4 37.4h1.1v1.1h-1.1zM90.2 34.2h1.1v1.1h-1.1zM76.2 36.2h1.1v1.1h-1.1zM188.0 31.0h1.1v1.1h-1.1zM73.9 34.5h1.1v1.1h-1.1zM191.4 40.0h1.1v1.1h-1.1zM110.8 36.2h1.1v1.1h-1.1zM89.6 33.1h1.1v1.1h-1.1zM68.2 35.8h1.1v1.1h-1.1zM72.4 35.1h1.1v1.1h-1.1zM75.7 35.9h1.1v1.1h-1.1zM82.3 32.6h1.1v1.1h-1.1zM191.0 41.9h1.1v1.1h-1.1zM67.0 35.4h1.1v1.1h-1.1zM153.8 33.3h1.1v1.1h-1.1zM67.8 37.7h1.1v1.1h-1.1zM189.5 29.6h1.1v1.1h-1.1zM67.6 33.8h1.1v1.1h-1.1zM66.3 33.9h1.1v1.1h-1.1zM210.5 36.2h1.1v1.1h-1.1zM76.0 37.2h1.1v1.1h-1.1zM211.0 29.9h1.1v1.1h-1.1zM66.9 37.3h1.1v1.1h-1.1zM67.9 39.8h1.1v1.1h-1.1zM80.1 36.1h1.1v1.1h-1.1zM123.8 34.6h1.1v1.1h-1.1zM73.4 31.8h1.1v1.1h-1.1zM66.4 34.9h1.1v1.1h-1.1zM67.3 34.2h1.1v1.1h-1.1zM72.8 37.9h1.1v1.1h-1.1zM69.1 35.4h1.1v1.1h-1.1zM128.5 41.0h1.1v1.1h-1.1zM91.8 31.7h1.1v1.1h-1.1zM155.5 34.7h1.1v1.1h-1.1zM68.2 38.7h1.1v1.1h-1.1zM113.9 36.9h1.1v1.1h-1.1zM110.7 34.6h1.1v1.1h-1.1zM170.2 32.2h1.1v1.1h-1.1zM69.8 37.5h1.1v1.1h-1.1zM76.2 39.6h1.1v1.1h-1.1zM67.5 34.7h1.1v1.1h-1.1zM72.8 36.1h1.1v1.1h-1.1zM73.6 36.0h1.1v1.1h-1.1zM77.2 36.9h1.1v1.1h-1.1zM67.5 36.4h1.1v1.1h-1.1zM93.8 37.6h1.1v1.1h-1.1zM177.5 40.6h1.1v1.1h-1.1zM70.5 37.8h1.1v1.1h-1.1zM189.0 29.1h1.1v1.1h-1.1zM66.0 34.6h1.1v1.1h-1.1zM67.2 33.1h1.1v1.1h-1.1zM110.7 32.9h1.1v1.1h-1.1zM71.7 33.6h1.1v1.1h-1.1zM69.6 35.9h1.1v1.1h-1.1zM66.5 34.1h1.1v1.1h-1.1zM211.8 30.5h1.1v1.1h-1.1zM73.3 34.9h1.1v1.1h-1.1zM190.4 36.3h1.1v1.1h-1.1zM78.2 38.2h1.1v1.1h-1.1zM212.7 33.1h1.1v1.1h-1.1zM113.2 31.4h1.1v1.1h-1.1zM67.5 38.4h1.1v1.1h-1.1zM126.9 37.3h1.1v1.1h-1.1zM69.1 35.7h1.1v1.1h-1.1zM70.0 32.1h1.1v1.1h-1.1zM73.9 35.5h1.1v1.1h-1.1zM67.6 36.2h1.1v1.1h-1.1zM197.9 35.3h1.1v1.1h-1.1zM76.8 34.8h1.1v1.1h-1.1zM212.6 33.4h1.1v1.1h-1.1zM66.4 36.2h1.1v1.1h-1.1zM154.7 32.7h1.1v1.1h-1.1zM78.3 34.7h1.1v1.1h-1.1zM65.1 35.8h1.1v1.1h-1.1zM66.4 38.3h1.1v1.1h-1.1zM140.7 36.5h1.1v1.1h-1.1zM68.4 33.4h1.1v1.1h-1.1zM67.0 36.3h1.1v1.1h-1.1zM95.0 34.2h1.1v1.1h-1.1zM78.9 34.1h1.1v1.1h-1.1zM69.4 32.5h1.1v1.1h-1.1zM66.5 32.7h1.1v1.1h-1.1zM67.4 33.6h1.1v1.1h-1.1zM64.8 34.1h1.1v1.1h-1.1zM81.8 34.9h1.1v1.1h-1.1zM140.2 41.4h1.1v1.1h-1.1zM178.7 41.0h1.1v1.1h-1.1zM68.4 35.7h1.1v1.1h-1.1zM116.4 35.7h1.1v1.1h-1.1zM81.8 37.7h1.1v1.1h-1.1zM70.2 34.4h1.1v1.1h-1.1zM86.9 32.6h1.1v1.1h-1.1zM68.0 34.3h1.1v1.1h-1.1zM187.5 35.3h1.1v1.1h-1.1zM79.1 35.6h1.1v1.1h-1.1zM77.4 35.9h1.1v1.1h-1.1zM101.3 40.1h1.1v1.1h-1.1zM71.1 36.3h1.1v1.1h-1.1zM66.9 35.2h1.1v1.1h-1.1zM67.3 32.5h1.1v1.1h-1.1zM64.5 39.8h1.1v1.1h-1.1zM164.0 35.4h1.1v1.1h-1.1zM177.9 35.3h1.1v1.1h-1.1zM120.6 41.7h1.1v1.1h-1.1zM87.2 35.1h1.1v1.1h-1.1zM70.5 35.5h1.1v1.1h-1.1zM154.6 38.2h1.1v1.1h-1.1zM166.2 29.3h1.1v1.1h-1.1zM67.9 36.5h1.1v1.1h-1.1zM78.5 35.0h1.1v1.1h-1.1zM71.2 34.2h1.1v1.1h-1.1zM68.1 32.0h1.1v1.1h-1.1zM142.7 34.8h1.1v1.1h-1.1zM99.5 35.9h1.1v1.1h-1.1zM120.3 37.9h1.1v1.1h-1.1zM177.9 26.5h1.1v1.1h-1.1zM67.0 36.6h1.1v1.1h-1.1zM175.4 35.1h1.1v1.1h-1.1zM173.1 36.5h1.1v1.1h-1.1zM67.1 37.2h1.1v1.1h-1.1zM69.4 32.4h1.1v1.1h-1.1zM69.0 31.7h1.1v1.1h-1.1zM67.7 33.4h1.1v1.1h-1.1zM75.7 32.4h1.1v1.1h-1.1zM67.3 35.3h1.1v1.1h-1.1zM79.5 36.1h1.1v1.1h-1.1zM100.4 36.0h1.1v1.1h-1.1zM76.9 37.1h1.1v1.1h-1.1zM65.3 32.2h1.1v1.1h-1.1zM155.9 33.7h1.1v1.1h-1.1zM180.7 29.5h1.1v1.1h-1.1zM76.2 38.9h1.1v1.1h-1.1zM145.9 34.8h1.1v1.1h-1.1zM70.5 38.9h1.1v1.1h-1.1zM67.6 32.0h1.1v1.1h-1.1zM72.6 34.6h1.1v1.1h-1.1zM146.3 30.5h1.1v1.1h-1.1zM67.1 32.7h1.1v1.1h-1.1zM183.5 25.2h1.1v1.1h-1.1zM66.2 36.9h1.1v1.1h-1.1zM83.7 36.8h1.1v1.1h-1.1zM90.8 33.5h1.1v1.1h-1.1zM167.0 35.8h1.1v1.1h-1.1zM90.4 31.1h1.1v1.1h-1.1zM72.8 35.3h1.1v1.1h-1.1zM69.1 36.6h1.1v1.1h-1.1zM83.6 30.9h1.1v1.1h-1.1zM67.3 36.8h1.1v1.1h-1.1zM97.7 34.4h1.1v1.1h-1.1zM103.0 33.5h1.1v1.1h-1.1zM105.6 33.9h1.1v1.1h-1.1zM99.3 37.2h1.1v1.1h-1.1zM68.9 36.2h1.1v1.1h-1.1zM68.8 33.4h1.1v1.1h-1.1zM65.7 35.8h1.1v1.1h-1.1zM70.7 33.9h1.1v1.1h-1.1zM86.0 32.8h1.1v1.1h-1.1zM73.9 34.0h1.1v1.1h-1.1zM171.8 29.9h1.1v1.1h-1.1zM185.1 32.1h1.1v1.1h-1.1zM108.5 35.7h1.1v1.1h-1.1zM117.9 32.1h1.1v1.1h-1.1zM78.6 32.4h1.1v1.1h-1.1zM97.1 35.3h1.1v1.1h-1.1zM191.0 36.4h1.1v1.1h-1.1zM67.9 39.2h1.1v1.1h-1.1zM93.8 32.6h1.1v1.1h-1.1zM173.3 30.2h1.1v1.1h-1.1zM72.0 32.9h1.1v1.1h-1.1zM115.7 34.2h1.1v1.1h-1.1zM66.6 34.9h1.1v1.1h-1.1zM115.6 36.1h1.1v1.1h-1.1zM195.4 34.6h1.1v1.1h-1.1zM75.2 34.6h1.1v1.1h-1.1zM67.7 38.2h1.1v1.1h-1.1zM192.1 33.8h1.1v1.1h-1.1zM66.8 35.3h1.1v1.1h-1.1zM74.0 36.8h1.1v1.1h-1.1zM179.4 34.2h1.1v1.1h-1.1zM72.4 35.3h1.1v1.1h-1.1zM65.6 33.0h1.1v1.1h-1.1zM97.7 34.1h1.1v1.1h-1.1zM149.1 33.8h1.1v1.1h-1.1zM72.6 38.3h1.1v1.1h-1.1zM175.8 38.8h1.1v1.1h-1.1zM116.9 33.4h1.1v1.1h-1.1zM70.8 34.3h1.1v1.1h-1.1zM68.2 36.8h1.1v1.1h-1.1zM147.2 31.6h1.1v1.1h-1.1zM67.3 34.8h1.1v1.1h-1.1zM215.0 30.0h1.1v1.1h-1.1zM69.3 38.7h1.1v1.1h-1.1zM67.5 33.4h1.1v1.1h-1.1zM67.4 37.0h1.1v1.1h-1.1zM77.6 34.4h1.1v1.1h-1.1zM152.5 38.4h1.1v1.1h-1.1zM71.3 36.9h1.1v1.1h-1.1zM122.7 34.3h1.1v1.1h-1.1zM67.4 35.4h1.1v1.1h-1.1zM102.8 34.4h1.1v1.1h-1.1zM75.2 34.4h1.1v1.1h-1.1zM65.5 37.1h1.1v1.1h-1.1zM120.4 35.1h1.1v1.1h-1.1zM100.6 33.1h1.1v1.1h-1.1zM78.2 37.0h1.1v1.1h-1.1zM68.9 33.1h1.1v1.1h-1.1zM68.8 33.9h1.1v1.1h-1.1zM101.9 38.6h1.1v1.1h-1.1zM100.5 40.8h1.1v1.1h-1.1zM77.2 35.5h1.1v1.1h-1.1zM66.5 35.0h1.1v1.1h-1.1zM175.9 39.0h1.1v1.1h-1.1zM67.2 35.4h1.1v1.1h-1.1zM67.9 38.8h1.1v1.1h-1.1zM115.6 38.5h1.1v1.1h-1.1zM74.3 36.7h1.1v1.1h-1.1zM91.7 35.9h1.1v1.1h-1.1zM157.9 33.3h1.1v1.1h-1.1zM68.3 32.3h1.1v1.1h-1.1zM79.6 35.7h1.1v1.1h-1.1zM146.8 34.3h1.1v1.1h-1.1zM79.1 35.1h1.1v1.1h-1.1zM72.5 33.2h1.1v1.1h-1.1zM69.3 37.6h1.1v1.1h-1.1zM214.0 30.4h1.1v1.1h-1.1zM213.7 42.8h1.1v1.1h-1.1zM67.7 40.1h1.1v1.1h-1.1zM80.5 37.0h1.1v1.1h-1.1zM140.3 36.7h1.1v1.1h-1.1zM74.5 33.2h1.1v1.1h-1.1zM120.9 36.5h1.1v1.1h-1.1zM94.5 36.6h1.1v1.1h-1.1zM68.5 33.7h1.1v1.1h-1.1zM162.2 42.0h1.1v1.1h-1.1zM197.5 30.1h1.1v1.1h-1.1zM150.2 36.5h1.1v1.1h-1.1zM76.3 37.6h1.1v1.1h-1.1zM106.1 29.7h1.1v1.1h-1.1zM156.5 35.6h1.1v1.1h-1.1zM68.1 34.1h1.1v1.1h-1.1zM115.5 35.6h1.1v1.1h-1.1zM76.6 33.5h1.1v1.1h-1.1zM172.1 36.5h1.1v1.1h-1.1zM65.6 36.8h1.1v1.1h-1.1zM72.0 37.3h1.1v1.1h-1.1zM89.0 37.3h1.1v1.1h-1.1zM163.2 36.5h1.1v1.1h-1.1zM80.5 36.7h1.1v1.1h-1.1zM76.2 38.2h1.1v1.1h-1.1zM83.1 35.8h1.1v1.1h-1.1zM160.8 33.7h1.1v1.1h-1.1zM66.3 35.7h1.1v1.1h-1.1zM88.4 30.1h1.1v1.1h-1.1zM67.8 35.0h1.1v1.1h-1.1zM204.3 35.0h1.1v1.1h-1.1zM175.7 30.5h1.1v1.1h-1.1zM122.5 32.7h1.1v1.1h-1.1zM160.0 31.2h1.1v1.1h-1.1zM157.0 37.9h1.1v1.1h-1.1zM86.9 32.8h1.1v1.1h-1.1zM170.3 28.3h1.1v1.1h-1.1zM126.2 30.8h1.1v1.1h-1.1zM67.6 35.8h1.1v1.1h-1.1zM204.5 37.2h1.1v1.1h-1.1zM155.1 33.0h1.1v1.1h-1.1zM132.8 37.8h1.1v1.1h-1.1zM66.8 31.9h1.1v1.1h-1.1zM81.0 33.2h1.1v1.1h-1.1zM66.6 37.8h1.1v1.1h-1.1zM141.1 37.5h1.1v1.1h-1.1zM67.4 35.8h1.1v1.1h-1.1zM64.8 38.1h1.1v1.1h-1.1zM77.1 35.5h1.1v1.1h-1.1zM71.7 34.8h1.1v1.1h-1.1zM66.1 38.0h1.1v1.1h-1.1zM87.9 32.6h1.1v1.1h-1.1zM132.4 33.7h1.1v1.1h-1.1zM65.0 33.2h1.1v1.1h-1.1zM71.1 37.4h1.1v1.1h-1.1zM67.7 33.8h1.1v1.1h-1.1zM67.1 39.5h1.1v1.1h-1.1zM123.9 31.9h1.1v1.1h-1.1zM70.1 37.2h1.1v1.1h-1.1zM93.7 40.8h1.1v1.1h-1.1zM68.3 33.7h1.1v1.1h-1.1zM67.2 34.7h1.1v1.1h-1.1zM192.9 28.1h1.1v1.1h-1.1zM128.2 31.2h1.1v1.1h-1.1zM66.3 35.3h1.1v1.1h-1.1zM75.1 31.9h1.1v1.1h-1.1zM131.4 33.1h1.1v1.1h-1.1zM138.8 32.3h1.1v1.1h-1.1zM126.6 37.1h1.1v1.1h-1.1zM75.3 40.2h1.1v1.1h-1.1zM160.7 32.9h1.1v1.1h-1.1zM71.7 37.4h1.1v1.1h-1.1zM99.9 34.8h1.1v1.1h-1.1zM121.7 33.2h1.1v1.1h-1.1zM68.4 34.4h1.1v1.1h-1.1zM98.3 35.5h1.1v1.1h-1.1zM208.0 38.9h1.1v1.1h-1.1zM122.7 27.6h1.1v1.1h-1.1zM197.5 35.1h1.1v1.1h-1.1zM202.6 24.7h1.1v1.1h-1.1zM120.7 33.1h1.1v1.1h-1.1zM92.3 41.7h1.1v1.1h-1.1zM138.8 35.4h1.1v1.1h-1.1zM121.5 37.8h1.1v1.1h-1.1zM63.8 34.5h1.1v1.1h-1.1zM78.2 34.0h1.1v1.1h-1.1zM69.1 33.6h1.1v1.1h-1.1zM100.8 34.6h1.1v1.1h-1.1zM67.1 37.0h1.1v1.1h-1.1zM175.0 28.6h1.1v1.1h-1.1zM68.2 36.1h1.1v1.1h-1.1zM110.0 32.3h1.1v1.1h-1.1zM78.5 33.6h1.1v1.1h-1.1zM65.4 39.9h1.1v1.1h-1.1zM82.8 32.6h1.1v1.1h-1.1zM69.9 37.3h1.1v1.1h-1.1zM78.8 32.8h1.1v1.1h-1.1zM79.1 36.0h1.1v1.1h-1.1zM68.2 35.1h1.1v1.1h-1.1zM66.2 36.0h1.1v1.1h-1.1zM91.7 33.6h1.1v1.1h-1.1zM66.6 36.6h1.1v1.1h-1.1zM90.1 37.4h1.1v1.1h-1.1zM67.5 32.9h1.1v1.1h-1.1zM110.9 29.6h1.1v1.1h-1.1zM99.6 37.1h1.1v1.1h-1.1zM78.9 38.5h1.1v1.1h-1.1zM148.0 36.5h1.1v1.1h-1.1zM75.1 35.3h1.1v1.1h-1.1zM161.7 35.4h1.1v1.1h-1.1zM143.8 33.9h1.1v1.1h-1.1zM124.2 32.2h1.1v1.1h-1.1zM68.8 35.2h1.1v1.1h-1.1zM91.6 32.8h1.1v1.1h-1.1zM66.0 35.0h1.1v1.1h-1.1zM66.3 35.5h1.1v1.1h-1.1zM95.7 37.2h1.1v1.1h-1.1zM202.9 35.8h1.1v1.1h-1.1zM67.3 39.5h1.1v1.1h-1.1zM67.7 33.5h1.1v1.1h-1.1zM70.4 32.6h1.1v1.1h-1.1zM154.0 26.4h1.1v1.1h-1.1zM69.3 34.0h1.1v1.1h-1.1zM70.1 37.1h1.1v1.1h-1.1zM69.2 34.0h1.1v1.1h-1.1zM69.1 38.6h1.1v1.1h-1.1zM96.8 33.6h1.1v1.1h-1.1zM134.6 34.7h1.1v1.1h-1.1zM91.2 32.1h1.1v1.1h-1.1zM70.9 36.5h1.1v1.1h-1.1zM156.0 28.1h1.1v1.1h-1.1zM67.7 34.0h1.1v1.1h-1.1zM69.5 37.1h1.1v1.1h-1.1zM67.1 36.3h1.1v1.1h-1.1zM75.3 34.9h1.1v1.1h-1.1zM88.7 33.2h1.1v1.1h-1.1zM153.6 42.5h1.1v1.1h-1.1zM69.9 36.0h1.1v1.1h-1.1zM82.6 34.5h1.1v1.1h-1.1zM188.2 30.3h1.1v1.1h-1.1zM101.0 34.0h1.1v1.1h-1.1zM87.8 38.7h1.1v1.1h-1.1zM144.5 32.5h1.1v1.1h-1.1zM73.3 35.6h1.1v1.1h-1.1zM80.1 39.6h1.1v1.1h-1.1zM71.3 32.8h1.1v1.1h-1.1zM92.8 37.3h1.1v1.1h-1.1zM76.3 35.9h1.1v1.1h-1.1zM199.7 31.5h1.1v1.1h-1.1zM182.2 35.1h1.1v1.1h-1.1zM101.7 33.7h1.1v1.1h-1.1zM140.8 36.3h1.1v1.1h-1.1zM67.0 36.0h1.1v1.1h-1.1zM72.2 38.0h1.1v1.1h-1.1zM207.7 30.9h1.1v1.1h-1.1zM162.5 29.6h1.1v1.1h-1.1zM77.8 34.8h1.1v1.1h-1.1zM86.3 34.7h1.1v1.1h-1.1zM195.8 26.9h1.1v1.1h-1.1zM89.9 34.0h1.1v1.1h-1.1zM84.1 34.1h1.1v1.1h-1.1zM186.1 33.5h1.1v1.1h-1.1zM75.9 32.7h1.1v1.1h-1.1zM93.1 41.6h1.1v1.1h-1.1zM69.1 36.3h1.1v1.1h-1.1zM78.6 35.7h1.1v1.1h-1.1zM122.6 38.1h1.1v1.1h-1.1zM76.0 36.1h1.1v1.1h-1.1zM95.8 38.0h1.1v1.1h-1.1zM67.4 30.4h1.1v1.1h-1.1zM189.6 35.0h1.1v1.1h-1.1zM68.3 36.2h1.1v1.1h-1.1zM184.9 37.9h1.1v1.1h-1.1zM84.1 33.8h1.1v1.1h-1.1zM89.6 36.2h1.1v1.1h-1.1zM148.3 38.9h1.1v1.1h-1.1zM75.8 36.6h1.1v1.1h-1.1zM200.5 41.4h1.1v1.1h-1.1zM89.1 30.7h1.1v1.1h-1.1zM107.7 36.8h1.1v1.1h-1.1zM77.1 39.8h1.1v1.1h-1.1zM124.4 31.4h1.1v1.1h-1.1zM98.7 39.3h1.1v1.1h-1.1zM67.6 33.8h1.1v1.1h-1.1zM71.4 32.2h1.1v1.1h-1.1z" fill="#b03a9a" fill-opacity="0.5"/><path d="M135.3 30.9h0.9v0.9h-0.9zM186.3 56.9h0.9v0.9h-0.9zM90.2 159.1h0.9v0.9h-0.9zM151.6 34.4h0.9v0.9h-0.9zM84.2 79.5h0.9v0.9h-0.9zM147.4 41.3h0.9v0.9h-0.9zM109.0 32.0h0.9v0.9h-0.9zM223.3 77.6h0.9v0.9h-0.9zM84.8 31.4h0.9v0.9h-0.9zM204.8 94.2h0.9v0.9h-0.9zM124.5 131.3h0.9v0.9h-0.9zM145.6 139.3h0.9v0.9h-0.9zM58.7 137.8h0.9v0.9h-0.9zM75.6 37.1h0.9v0.9h-0.9zM57.5 48.2h0.9v0.9h-0.9zM66.8 47.6h0.9v0.9h-0.9zM146.0 54.9h0.9v0.9h-0.9zM180.7 47.3h0.9v0.9h-0.9zM130.9 128.5h0.9v0.9h-0.9zM158.8 147.5h0.9v0.9h-0.9zM76.3 26.3h0.9v0.9h-0.9zM141.7 152.4h0.9v0.9h-0.9zM74.8 31.3h0.9v0.9h-0.9zM229.5 57.6h0.9v0.9h-0.9zM203.4 27.8h0.9v0.9h-0.9zM64.8 56.2h0.9v0.9h-0.9zM150.5 72.8h0.9v0.9h-0.9zM160.1 43.4h0.9v0.9h-0.9zM150.4 69.7h0.9v0.9h-0.9zM181.3 39.0h0.9v0.9h-0.9zM214.0 55.9h0.9v0.9h-0.9zM208.4 94.9h0.9v0.9h-0.9zM52.3 26.0h0.9v0.9h-0.9zM138.9 158.9h0.9v0.9h-0.9zM83.0 70.0h0.9v0.9h-0.9zM178.4 33.3h0.9v0.9h-0.9zM83.4 32.0h0.9v0.9h-0.9zM67.3 25.9h0.9v0.9h-0.9zM176.6 148.0h0.9v0.9h-0.9zM162.9 24.7h0.9v0.9h-0.9zM120.7 116.4h0.9v0.9h-0.9zM157.9 155.4h0.9v0.9h-0.9zM118.8 159.0h0.9v0.9h-0.9zM101.4 24.7h0.9v0.9h-0.9zM92.0 42.0h0.9v0.9h-0.9zM108.3 49.2h0.9v0.9h-0.9zM78.4 92.5h0.9v0.9h-0.9zM199.2 43.9h0.9v0.9h-0.9zM178.8 49.6h0.9v0.9h-0.9zM134.3 74.1h0.9v0.9h-0.9zM189.8 123.8h0.9v0.9h-0.9zM219.9 41.5h0.9v0.9h-0.9zM212.5 144.3h0.9v0.9h-0.9zM135.1 104.5h0.9v0.9h-0.9zM130.1 25.3h0.9v0.9h-0.9zM54.8 57.5h0.9v0.9h-0.9zM52.3 30.9h0.9v0.9h-0.9zM98.9 51.1h0.9v0.9h-0.9zM203.9 53.7h0.9v0.9h-0.9zM87.6 30.0h0.9v0.9h-0.9zM94.7 30.3h0.9v0.9h-0.9zM64.9 41.9h0.9v0.9h-0.9zM216.9 55.4h0.9v0.9h-0.9zM61.3 62.7h0.9v0.9h-0.9zM122.1 41.1h0.9v0.9h-0.9zM132.6 30.0h0.9v0.9h-0.9zM143.4 35.5h0.9v0.9h-0.9zM60.1 42.2h0.9v0.9h-0.9zM226.7 32.6h0.9v0.9h-0.9zM82.7 115.5h0.9v0.9h-0.9zM220.3 165.7h0.9v0.9h-0.9zM100.9 42.5h0.9v0.9h-0.9zM89.7 54.5h0.9v0.9h-0.9zM169.7 190.0h0.9v0.9h-0.9zM91.8 42.8h0.9v0.9h-0.9zM207.7 113.2h0.9v0.9h-0.9zM176.0 101.4h0.9v0.9h-0.9zM206.8 26.8h0.9v0.9h-0.9zM179.6 47.0h0.9v0.9h-0.9zM113.0 185.8h0.9v0.9h-0.9zM91.0 46.8h0.9v0.9h-0.9zM194.9 176.9h0.9v0.9h-0.9zM78.0 56.5h0.9v0.9h-0.9zM167.7 136.0h0.9v0.9h-0.9zM78.6 25.0h0.9v0.9h-0.9zM130.6 72.7h0.9v0.9h-0.9zM49.3 42.9h0.9v0.9h-0.9zM219.9 31.2h0.9v0.9h-0.9zM136.2 50.6h0.9v0.9h-0.9zM94.0 46.9h0.9v0.9h-0.9zM232.0 40.0h0.9v0.9h-0.9zM217.2 146.1h0.9v0.9h-0.9zM226.2 25.5h0.9v0.9h-0.9zM151.9 51.7h0.9v0.9h-0.9zM53.9 50.4h0.9v0.9h-0.9zM52.5 184.3h0.9v0.9h-0.9zM56.5 24.8h0.9v0.9h-0.9zM124.7 136.2h0.9v0.9h-0.9zM102.3 31.4h0.9v0.9h-0.9zM135.1 48.2h0.9v0.9h-0.9zM152.1 171.2h0.9v0.9h-0.9zM155.5 56.1h0.9v0.9h-0.9zM74.3 37.0h0.9v0.9h-0.9zM195.7 44.5h0.9v0.9h-0.9zM198.0 36.7h0.9v0.9h-0.9zM108.1 40.8h0.9v0.9h-0.9zM150.5 38.9h0.9v0.9h-0.9zM197.3 145.6h0.9v0.9h-0.9zM53.8 28.8h0.9v0.9h-0.9zM136.0 40.4h0.9v0.9h-0.9z" fill="#7a3a7a" fill-opacity="0.35"/>
<ellipse cx="28" cy="55" rx="8" ry="26" fill="#1418a0" opacity=".55" filter="url(#b3)"/>
<ellipse cx="52" cy="37" rx="26" ry="10" fill="#1a26c0" opacity=".75" filter="url(#b3)" transform="rotate(-8 52 37)"/>
<ellipse cx="45" cy="40" rx="17" ry="8" fill="#2a2aff" filter="url(#b4)" transform="rotate(-12 45 40)"/>
<text x="12" y="18" font-family="Liberation Mono" font-size="15" fill="#ddd">PLT-O</text>
<path d="M12 22v219h220" stroke="#7a2a8a" stroke-width="1.2" fill="none"/>
<path d="M12 67h3M12 109h3M12 155h3M12 197h3M55 241v-3M99 241v-3M144 241v-3M186 241v-3M229 241v-3" stroke="#7a2a8a" stroke-width="1"/>
<text x="7" y="41" font-family="Liberation Sans" font-size="7" font-weight="bold" fill="#ddd" transform="rotate(-90 7 37)">FSC</text>
<text x="215" y="252" font-family="Liberation Sans" font-size="7.5" fill="#ccc">SFL</text>
</svg>

<!-- list boxes -->
<div class="a" style="left:537px;top:333px;width:183px;height:86px;background:#fff;border-top:1px solid #777;border-left:1px solid #777"></div>
<div class="a" style="left:684px;top:334px;width:36px;height:85px;background:#efefef"></div>
<div class="a" style="left:700px;top:350px;width:0;height:0;border-left:2px solid transparent;border-right:2px solid transparent;border-bottom:2px solid #666"></div>
<div class="a" style="left:700px;top:401px;width:0;height:0;border-left:2px solid transparent;border-right:2px solid transparent;border-top:2px solid #666"></div>
<div class="a" style="left:733px;top:335px;width:174px;height:70px;background:#fff;border-top:1px solid #888;border-left:1px solid #888"></div>
<div class="a" style="left:871px;top:336px;width:36px;height:69px;background:#efefef"></div>
<div class="a" style="left:886px;top:352px;width:0;height:0;border-left:2px solid transparent;border-right:2px solid transparent;border-bottom:2px solid #666"></div>
<div class="a" style="left:886px;top:386px;width:0;height:0;border-left:2px solid transparent;border-right:2px solid transparent;border-top:2px solid #666"></div>

<!-- RBC histogram -->
<div class="a" style="left:149px;top:315px;width:156px;height:77px;background:#000"></div>
<svg style="left:149px;top:315px" width="156" height="77" viewBox="149 315 156 77">
<path d="M177 332v52M297 332v52" stroke="#3a8a3a" stroke-width="1" stroke-dasharray="2 3"/>
<path d="M185 332v52M213.5 332v52M241 332v52M269 332v52" stroke="#6a6a5a" stroke-width="1" stroke-dasharray="2 3"/>
<path d="M159 330v55h138" stroke="#6a2a80" stroke-width="1" fill="none"/>
<path d="M160 379l2-1.5 2 1 2 2.5 3 1 6 1h12l4-1 3-3 3-8 3-14 3-17 3-12 2-1 2 2 3 11 3 16 3 16 3 8 3 2 6 .5h20l10 .5h15l12 .5h8" stroke="#42c8c8" stroke-width="1.7" fill="none"/>
<text x="157" y="326" font-family="Liberation Sans" font-size="10" fill="#ddd">RBC</text>
<text x="281" y="390" font-family="Liberation Sans" font-size="5" fill="#aaa">250fL</text>
</svg>

<!-- PLT histogram -->
<div class="a" style="left:323px;top:221px;width:303px;height:170px;background:#000;border-top:3px solid #dadada;border-right:3px solid #dadada;border-left:3px solid #8a8a8a"></div>
<svg style="left:325px;top:224px" width="298" height="167" viewBox="325 224 298 167">
<path d="M353 250v122M501 250v122" stroke="#3a7a3a" stroke-width="1" stroke-dasharray="3 5"/>
<path d="M395.5 250v122M448.5 250v122" stroke="#6a6a6a" stroke-width="1" stroke-dasharray="3 7"/>
<path d="M342.5 250v124.5h212" stroke="#6a2a80" stroke-width="2" fill="none"/>
<path d="M347 374 353 374 357 370 360 362 363 350 366 331 369 308 372 278 374 262 376 254 379 251 382 252 385 257 388 268 390 285 393 297 396 310 399 322 402 333 406 343 410 350 415 355 420 359 426 361 437 361 443 365 453 366 460 368 468 369.5 480 372 500 373 540 373 543 371 546 372 554 373" stroke="#40d0d8" stroke-width="2" fill="none" stroke-linejoin="round"/>
<path d="M470 370l30 3h43" stroke="#3a80d0" stroke-width="1.5" fill="none" opacity=".5"/>
<text x="343" y="246.5" font-family="Liberation Sans" font-size="21.5" fill="#eee">PLT</text>
<text x="530" y="389" font-family="Liberation Sans" font-size="12" font-weight="bold" fill="#eee" letter-spacing="-.5">40fL</text>
</svg>

<!-- bottom bar -->
<div class="a" style="left:0;top:475px;width:1080px;height:93px;background:linear-gradient(#bcbcbc,#c6c6c6 25%,#e6e6e6)"></div>
<div class="a" style="left:0;top:475px;width:1080px;height:1px;background:#9c9c9c"></div>
<div class="a" style="left:0;top:476px;width:1080px;height:2px;background:#e2e2e2"></div>

<!-- card L -->
<div class="card" style="left:4px;width:561px"></div>
<div class="a" style="left:282px;top:480px;width:5px;height:72px;background:#d8d8d8"></div>
<div class="a" style="left:4px;top:551px;width:561px;height:1px;background:#2a2a2a"></div>
<div class="a" style="left:7px;top:556px;width:18px;height:6px;background:#2a5a22;border-radius:3px"></div>
<div class="a" style="left:8px;top:505px;width:22px;height:45px;background:linear-gradient(90deg,#101610,#131c12,#101610)"></div>
<div class="glbl" style="left:6px;top:483px;width:81px;height:24px"></div>
<div class="a" style="left:10px;top:484px;font-size:10.5px;color:#e8ffe8">XN-2000-1-L</div>
<div class="a" style="left:10px;top:497px;width:23px;height:7px;background:#f4f4f4;font-size:6px;line-height:7px;text-align:center;color:#333">Xm</div>
<div class="a" style="left:35px;top:497px;width:23px;height:7px;background:#f4f4f4;font-size:6px;line-height:7px;text-align:center;color:#333">ẙ▸</div>
<div class="a" style="left:60px;top:497px;width:20px;height:7px;background:#4a8a40"></div>
<div class="ibtn" style="left:186px;width:45px"></div>
<div class="ibtn" style="left:232px;width:43px"></div>
<svg style="left:195px;top:487px" width="26" height="14" viewBox="0 0 26 14">
<path d="M2 3h13M3 3v8M6 3v8M9 3v8M12 3v8M1 11h15" stroke="#fff" stroke-width="1.6"/>
<circle cx="21" cy="7" r="4" fill="#fff"/><path d="M19 5l4 4M23 5l-4 4" stroke="#222" stroke-width="1.2"/>
</svg>
<svg style="left:249px;top:487px" width="10" height="14" viewBox="0 0 10 14"><rect x="1" y="0" width="8" height="13" rx="1.5" fill="#fff"/><rect x="3" y="7" width="4" height="4" fill="#333"/></svg>
<div class="a mono" style="left:33px;top:511px;font-size:12.5px;font-weight:normal;-webkit-text-stroke:.3px #eee;color:#f0f0f0">180244581</div>
<div class="wb" style="left:33px;top:526px;width:23px">WB</div>
<div class="tg" style="left:61px;top:526px;width:25px">CBC</div>
<div class="tg" style="left:88px;top:526px;width:25px">DIFF</div>
<div class="tg" style="left:114px;top:526px;width:25px">RET</div>
<div class="tg" style="left:145px;top:526px;width:30px;border-color:#333;color:#333">PLT-F</div>
<svg style="left:205px;top:510px" width="60" height="28" viewBox="205 510 60 28"><rect x="211.0" y="511" width="6.099999999999994" height="20.5" fill="none" stroke="#2a5ad8" stroke-opacity=".35" stroke-width="1"/><rect x="211.5" y="517" width="5.5" height="14.5" fill="#dfe2ea"/><rect x="210.5" y="531.5" width="7.099999999999994" height="4.5" fill="#2a5ad8"/><rect x="219.1" y="511" width="6.099999999999994" height="20.5" fill="none" stroke="#d04080" stroke-opacity=".35" stroke-width="1"/><rect x="219.5" y="528" width="5.0" height="3.5" fill="#dfe2ea"/><rect x="218.6" y="531.5" width="7.099999999999994" height="4.5" fill="#d04080"/><rect x="227.2" y="511" width="8.100000000000023" height="20.5" fill="none" stroke="#28a040" stroke-opacity=".35" stroke-width="1"/><rect x="227.5" y="527.4" width="4.199999999999989" height="4.100000000000023" fill="#dfe2ea"/><rect x="232.5" y="527.7" width="2.5" height="3.7999999999999545" fill="#dfe2ea"/><rect x="226.7" y="531.5" width="9.100000000000023" height="4.5" fill="#28a040"/><rect x="237.3" y="511" width="9.199999999999989" height="20.5" fill="none" stroke="#28a0e0" stroke-opacity=".35" stroke-width="1"/><rect x="237.8" y="511.8" width="5.199999999999989" height="19.69999999999999" fill="#dfe2ea"/><rect x="243.8" y="529.6" width="2.6999999999999886" height="1.8999999999999773" fill="#dfe2ea"/><rect x="236.8" y="531.5" width="10.199999999999989" height="4.5" fill="#28a0e0"/><rect x="248.3" y="511" width="6.699999999999989" height="20.5" fill="none" stroke="#9a20d0" stroke-opacity=".35" stroke-width="1"/><rect x="248.5" y="523.8" width="5.300000000000011" height="7.7000000000000455" fill="#dfe2ea"/><rect x="247.8" y="531.5" width="7.699999999999989" height="4.5" fill="#9a20d0"/><rect x="256.7" y="511" width="3.5" height="20.5" fill="none" stroke="#d02020" stroke-opacity=".35" stroke-width="1"/><rect x="256.8" y="511.8" width="2.1999999999999886" height="19.69999999999999" fill="#dfe2ea"/><rect x="256.2" y="531.5" width="4.5" height="4.5" fill="#d02020"/><rect x="261.5" y="511" width="3.6000000000000227" height="20.5" fill="none" stroke="#e08030" stroke-opacity=".35" stroke-width="1"/><rect x="261.8" y="511.8" width="2.8000000000000114" height="19.69999999999999" fill="#dfe2ea"/><rect x="261" y="531.5" width="4.600000000000023" height="4.5" fill="#e08030"/></svg>

<!-- card R -->
<div class="glbl" style="left:289px;top:484px;width:82px;height:23px"></div>
<div class="a" style="left:293px;top:484px;font-size:10.5px;color:#e8ffe8">XN-2000-1-R</div>
<div class="a" style="left:294px;top:497px;width:23px;height:7px;background:#f4f4f4;font-size:6px;line-height:7px;text-align:center;color:#333">Xm</div>
<div class="a" style="left:319px;top:497px;width:23px;height:7px;background:#f4f4f4;font-size:6px;line-height:7px;text-align:center;color:#333">ẙ▸</div>
<div class="a" style="left:344px;top:497px;width:20px;height:7px;background:#4a8a40"></div>
<div class="a" style="left:292px;top:512px;width:16px;height:38px;background:radial-gradient(ellipse at center,#2e6a22,#183a12 70%,#121a10);border-radius:4px"></div>
<div class="ibtn" style="left:469px;width:45px"></div>
<div class="ibtn" style="left:515px;width:44px"></div>
<svg style="left:478px;top:487px" width="26" height="14" viewBox="0 0 26 14">
<path d="M2 3h13M3 3v8M6 3v8M9 3v8M12 3v8M1 11h15" stroke="#fff" stroke-width="1.6"/>
<circle cx="21" cy="7" r="4" fill="#fff"/><path d="M19 5l4 4M23 5l-4 4" stroke="#222" stroke-width="1.2"/>
</svg>
<svg style="left:532px;top:487px" width="10" height="14" viewBox="0 0 10 14"><rect x="1" y="0" width="8" height="13" rx="1.5" fill="#fff"/><rect x="3" y="7" width="4" height="4" fill="#333"/></svg>
<div class="a mono" style="left:317px;top:511px;font-size:12.5px;font-weight:normal;-webkit-text-stroke:.3px #eee;color:#f0f0f0">&gt;180244681</div>
<div class="wb" style="left:317px;top:526px;width:23px">WB</div>
<div class="tg" style="left:345px;top:526px;width:25px">CBC</div>
<div class="tg" style="left:372px;top:526px;width:24px">DIFF</div>
<div class="tg" style="left:398px;top:526px;width:25px">RET</div>
<svg style="left:488px;top:510px" width="60" height="28" viewBox="488 510 60 28"><rect x="494.0" y="511" width="6.100000000000023" height="20.5" fill="none" stroke="#2a5ad8" stroke-opacity=".35" stroke-width="1"/><rect x="494.5" y="520.6" width="5.5" height="10.899999999999977" fill="#dfe2ea"/><rect x="493.5" y="531.5" width="7.100000000000023" height="4.5" fill="#2a5ad8"/><rect x="502.1" y="511" width="6.099999999999966" height="20.5" fill="none" stroke="#d04080" stroke-opacity=".35" stroke-width="1"/><rect x="502.5" y="528" width="5.0" height="3.5" fill="#dfe2ea"/><rect x="501.6" y="531.5" width="7.099999999999966" height="4.5" fill="#d04080"/><rect x="510.2" y="511" width="9.099999999999966" height="20.5" fill="none" stroke="#28a040" stroke-opacity=".35" stroke-width="1"/><rect x="510.5" y="527" width="4.5" height="4.5" fill="#dfe2ea"/><rect x="515.8" y="517.3" width="3.0" height="14.200000000000045" fill="#dfe2ea"/><rect x="509.7" y="531.5" width="10.099999999999966" height="4.5" fill="#28a040"/><rect x="520.5" y="511" width="9" height="20.5" fill="none" stroke="#28a0e0" stroke-opacity=".35" stroke-width="1"/><rect x="521" y="512" width="5" height="19.5" fill="#dfe2ea"/><rect x="526.5" y="514" width="3.0" height="17.5" fill="#dfe2ea"/><rect x="520" y="531.5" width="10" height="4.5" fill="#28a0e0"/><rect x="531.3" y="511" width="6.7000000000000455" height="20.5" fill="none" stroke="#9a20d0" stroke-opacity=".35" stroke-width="1"/><rect x="531.5" y="523.8" width="5.5" height="7.7000000000000455" fill="#dfe2ea"/><rect x="530.8" y="531.5" width="7.7000000000000455" height="4.5" fill="#9a20d0"/><rect x="539.4" y="511" width="3.800000000000068" height="20.5" fill="none" stroke="#d02020" stroke-opacity=".35" stroke-width="1"/><rect x="539.5" y="522" width="3.0" height="9.5" fill="#dfe2ea"/><rect x="538.9" y="531.5" width="4.800000000000068" height="4.5" fill="#d02020"/></svg>

<!-- host cards -->
<div class="card" style="left:967px;width:54px;background:linear-gradient(#181818,#101010)"></div>
<div class="a" style="left:972px;top:552px;width:44px;height:6px;background:#252525;border-radius:3px"></div>
<div class="card" style="left:1024px;width:54px"></div>
<div class="a" style="left:1029px;top:486px;width:43px;height:21px;background:linear-gradient(#3a3a3a,#2a2a2a);border-radius:4px"></div>
<svg style="left:1044px;top:489px" width="12" height="15" viewBox="0 0 12 15"><rect x="0" y="0" width="12" height="15" rx="1" fill="#fff"/><path d="M0 5h12M0 10h12" stroke="#333" stroke-width="1"/></svg>
<div class="a" style="left:1039px;top:512px;width:33px;height:11px;background:#2e2e2e;border-radius:5px;font-size:7.5px;color:#aaa;line-height:11px;text-align:center;font-weight:bold">HOST</div>
<div class="a" style="left:1024px;top:534px;width:54px;text-align:center;font-size:10.5px;color:#e0e0e0">HOST1</div>
<div class="a" style="left:1027px;top:556px;width:46px;height:5px;background:#3cae30;border-radius:3px"></div>

<!-- watermark -->
<svg style="left:884px;top:496px" width="50" height="44" viewBox="0 0 50 44">
<ellipse cx="18" cy="16" rx="14.5" ry="12.5" fill="#fff" stroke="#a8a8a8" stroke-width=".8"/><path d="M8 25l-2 6 7-4.5z" fill="#fff" stroke="#a8a8a8" stroke-width=".6"/>
<circle cx="12" cy="12" r="1.7" fill="#8a8a8a"/><circle cx="24" cy="12" r="1.7" fill="#8a8a8a"/>
<ellipse cx="33" cy="28" rx="13" ry="11" fill="#fff" stroke="#a0a0a0" stroke-width="1"/><path d="M40 36l4 5-8-2.5z" fill="#fff" stroke="#a0a0a0" stroke-width=".6"/>
<ellipse cx="33" cy="28" rx="12.4" ry="10.4" fill="#fff"/>
<circle cx="28" cy="22.5" r="1.5" fill="#8a8a8a"/><circle cx="37.5" cy="22.5" r="1.5" fill="#8a8a8a"/>
</svg>
<div class="a" style="left:937px;top:502px;font-size:26.5px;color:#fff;white-space:nowrap;text-shadow:0 0 1px #555,0 0 1px #777">检验医师</div>
</body></html>
